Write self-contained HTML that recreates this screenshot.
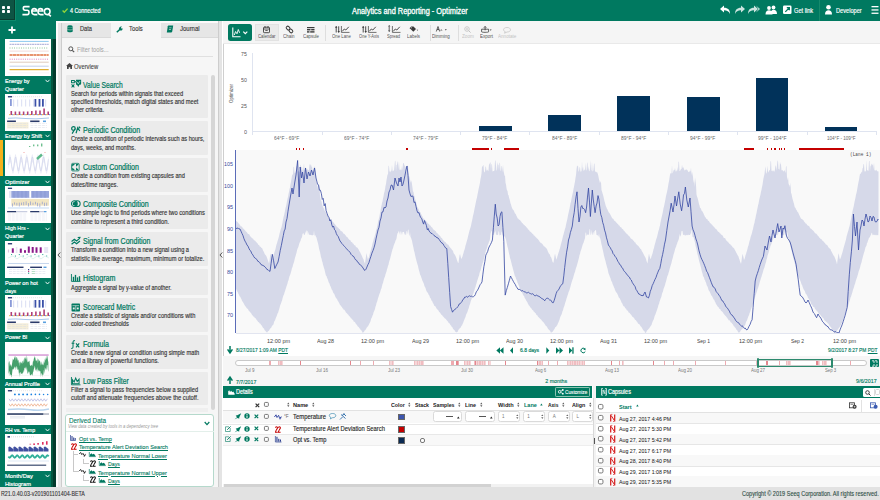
<!DOCTYPE html><html><head><meta charset="utf-8"><style>*{margin:0;padding:0;box-sizing:border-box}
html,body{width:880px;height:500px;overflow:hidden;background:#fff;font-family:"Liberation Sans",sans-serif}
body{position:relative}
.t{position:absolute;white-space:nowrap;line-height:1}
svg{position:absolute;overflow:visible}
div{position:absolute}
</style></head><body><div style="position:absolute;left:0.00px;top:0.00px;width:880.00px;height:21.00px;background:#007960"></div>
<div style="position:absolute;left:0.00px;top:0.00px;width:15.20px;height:19.80px;background:#0e5444;border:0.8px solid #0b3d30;border-left:0;border-top:0"></div>
<div style="position:absolute;left:15.20px;top:0.00px;width:0.80px;height:20.60px;background:#0d8a6c"></div>
<div style="position:absolute;left:0.00px;top:19.80px;width:16.00px;height:0.80px;background:#0d8a6c"></div>
<div style="position:absolute;left:1.90px;top:6.10px;width:3.40px;height:3.20px;background:#fff;border-radius:0.8px"></div>
<div style="position:absolute;left:6.60px;top:6.10px;width:3.40px;height:3.20px;background:#fff;border-radius:0.8px"></div>
<div style="position:absolute;left:1.90px;top:10.30px;width:3.40px;height:3.20px;background:#fff;border-radius:0.8px"></div>
<div style="position:absolute;left:6.60px;top:10.30px;width:3.40px;height:3.20px;background:#fff;border-radius:0.8px"></div>
<svg style="left:21.50px;top:5.00px;" width="30" height="12" viewBox="0 0 30 12"><g stroke="#fff" stroke-width="1.55" fill="none" stroke-linecap="square"><path d="M6.8 1.6 H2.6 C1.6 1.6 1.3 2.2 1.3 3.3 C1.3 4.5 1.8 5.2 3 5.2 H5.2 C6.5 5.2 7 6 7 7.2 C7 8.5 6.5 9.6 5.2 9.6 H1.2"/><path d="M9.8 6 H14.6 C14.6 4.3 13.6 3.6 12.2 3.6 C10.6 3.6 9.8 4.6 9.8 6.6 C9.8 8.7 10.8 9.6 12.4 9.6 H14.6"/><path d="M16 6 H20.8 C20.8 4.3 19.8 3.6 18.4 3.6 C16.8 3.6 16 4.6 16 6.6 C16 8.7 17 9.6 18.6 9.6 H20.8"/><path d="M25.2 3.6 C23.3 3.6 22.4 4.8 22.4 6.6 C22.4 8.5 23.3 9.6 25.2 9.6 C27.1 9.6 28 8.5 28 6.6 C28 4.8 27.1 3.6 25.2 3.6Z M26.5 9 L28.3 10.8"/></g></svg>
<svg style="left:61.80px;top:8.20px;" width="6" height="5" viewBox="0 0 6 5"><path d="M0.6 2.4 L2.3 4.2 L5.6 0.6" stroke="#8fd33a" stroke-width="1.4" fill="none"/></svg>
<div class="t" style="left:69.50px;top:7.68px;font-size:6.4px;color:#fff;-webkit-text-stroke:0.2px #fff;transform:scaleX(0.8414);transform-origin:0 0;">4 Connected</div>
<div class="t" style="left:352.40px;top:7.56px;font-size:8.2px;color:#fff;-webkit-text-stroke:0.3px #fff;transform:scaleX(0.8992);transform-origin:0 0;">Analytics and Reporting - Optimizer</div>
<svg style="left:718.00px;top:3.30px;" width="160" height="14" viewBox="0 0 160 14"><g fill="#fff">
<path d="M2 6 L6 2.5 L6 4.8 C10 4.8 12 7 12 11 C11 8.5 9 7.3 6 7.3 L6 9.5 Z"/>
<path d="M27 6 L23 2.5 L23 4.8 C19 4.8 17 7 17 11 C18 8.5 20 7.3 23 7.3 L23 9.5 Z" opacity="0.8"/>
<path d="M40 6 L36 2.5 L36 4.8 C32 4.8 30 7 30 11 C31 8.5 33 7.3 36 7.3 L36 9.5 Z M38 2.5 L42 6 L38 9.5 L40.5 6 Z" opacity="0.8"/>
<circle cx="51" cy="5" r="1.9"/><circle cx="55.5" cy="4.5" r="1.9"/><path d="M47.5 11.5 C47.5 8.5 49 7.3 51 7.3 C53 7.3 54.5 8.5 54.5 11.5 Z M52.5 11 C52.5 8 54 6.8 55.5 6.8 C57.5 6.8 59 8 59 11 Z"/>
<rect x="65" y="2.5" width="8.5" height="8.5" rx="1.3"/>
<circle cx="110.5" cy="4.3" r="2.3"/><path d="M107 11.5 C107 8.3 108.5 7.2 110.5 7.2 C112.5 7.2 114 8.3 114 11.5 Z"/>
<rect x="153.5" y="3" width="7" height="1.3"/><rect x="153.5" y="6.3" width="7" height="1.3"/><rect x="153.5" y="9.6" width="7" height="1.3"/>
</g><path d="M67.3 8.8 L71 5 M68.8 4.6 L71.4 4.6 L71.4 7.2" stroke="#007960" stroke-width="1.2" fill="none"/></svg>
<div class="t" style="left:793.80px;top:7.98px;font-size:6.4px;color:#fff;-webkit-text-stroke:0.15px #fff;transform:scaleX(0.8859);transform-origin:0 0;">Get link</div>
<div style="position:absolute;left:819.00px;top:0.00px;width:0.80px;height:21.00px;background:#168a6c"></div>
<div class="t" style="left:835.60px;top:7.98px;font-size:6.4px;color:#fff;-webkit-text-stroke:0.15px #fff;transform:scaleX(0.8819);transform-origin:0 0;">Developer</div>
<div style="position:absolute;left:0.00px;top:21.00px;width:56.00px;height:466.30px;background:#007960"></div>
<div style="position:absolute;left:51.30px;top:39.00px;width:1.80px;height:448.30px;background:#03563f"></div>
<div style="position:absolute;left:53.00px;top:39.00px;width:2.70px;height:448.30px;background:#033a2c"></div>
<svg style="left:8.00px;top:25.50px;" width="8" height="8" viewBox="0 0 8 8"><path d="M4 0.5V7.5M0.5 4H7.5" stroke="#fff" stroke-width="1.8"/></svg>
<div style="position:absolute;left:4.50px;top:38.80px;width:46.20px;height:37.00px;background:#fff"></div>
<svg style="left:4.5px;top:38.8px;overflow:hidden" width="46.2" height="37.0" viewBox="0 0 46.2 37.0"><path d="M4.6 2.4 H43.7" stroke="#5ab0e8" stroke-width="0.7"  fill="none"/><path d="M4.6 5.3 H43.7" stroke="#8b8fc8" stroke-width="0.8" stroke-dasharray="2 0.5" fill="none"/><path d="M4.6 9 H43.7" stroke="#3a9a4a" stroke-width="0.7" stroke-dasharray="0.8 1.5" fill="none"/><path d="M4.6 12.1 H43.7" stroke="#e8c0c0" stroke-width="0.6"  fill="none"/><path d="M4.6 16 H43.7" stroke="#e07040" stroke-width="1.3" stroke-dasharray="3 0.4" fill="none"/><path d="M4.6 20.2 H43.7" stroke="#d050a0" stroke-width="0.7" stroke-dasharray="1 1.2" fill="none"/><path d="M4.6 23.2 H43.7" stroke="#c8a890" stroke-width="0.6"  fill="none"/><path d="M4.6 27.2 H43.7" stroke="#9ab0d8" stroke-width="0.6"  fill="none"/><path d="M4.6 30.6 H43.7" stroke="#e0b030" stroke-width="1.2"  fill="none"/><path d="M3 33.9 H44" stroke="#e8e8e8" stroke-width="0.4"/></svg>
<div class="t" style="left:4.90px;top:77.82px;font-size:6px;color:#fff;-webkit-text-stroke:0.2px #fff;transform:scaleX(0.9069);transform-origin:0 0;">Energy by</div>
<div class="t" style="left:4.90px;top:85.82px;font-size:6px;color:#fff;-webkit-text-stroke:0.2px #fff;transform:scaleX(0.9290);transform-origin:0 0;">Quarter</div>
<svg style="left:45.30px;top:79.40px;" width="5" height="4" viewBox="0 0 5 4"><path d="M0.5 0.8 L2.5 3 L4.5 0.8" stroke="#fff" stroke-width="0.9" fill="none"/></svg>
<div style="position:absolute;left:4.50px;top:93.50px;width:46.20px;height:37.00px;background:#fff"></div>
<svg style="left:4.5px;top:93.5px;overflow:hidden" width="46.2" height="37.0" viewBox="0 0 46.2 37.0"><rect x="2.9" y="2.1" width="4.2" height="1.3" fill="#1f2f6a"/><path d="M8 2.7 H38" stroke="#ccc" stroke-width="0.5" stroke-dasharray="1 1"/><rect x="5" y="5" width="1.8" height="7" fill="#8a9ad8"/><rect x="29.5" y="5" width="1.8" height="7.6" fill="#3a50a8"/><rect x="33.6" y="5" width="1.8" height="7.6" fill="#3a50a8"/><rect x="37" y="5" width="1.8" height="7.6" fill="#3a50a8"/><rect x="8" y="5.5" width="1.2" height="7" fill="#dfe3f5"/><rect x="12" y="5.5" width="1.2" height="7" fill="#dfe3f5"/><rect x="16" y="5.5" width="1.2" height="7" fill="#dfe3f5"/><rect x="20" y="5.5" width="1.2" height="7" fill="#dfe3f5"/><rect x="24" y="5.5" width="1.2" height="7" fill="#dfe3f5"/><rect x="28" y="5.5" width="1.2" height="7" fill="#dfe3f5"/><rect x="40" y="5.5" width="1.2" height="7" fill="#dfe3f5"/><rect x="5.5" y="17" width="1.6" height="4" fill="#b0407a"/><rect x="4.3" y="20" width="1.2" height="1.2" fill="#f0b030"/><rect x="7.1" y="20" width="1.2" height="1.2" fill="#6aa0e8"/><rect x="9.6" y="17.5" width="1.6" height="3.5" fill="#b0407a"/><rect x="8.4" y="20" width="1.2" height="1.2" fill="#f0b030"/><rect x="11.2" y="20" width="1.2" height="1.2" fill="#6aa0e8"/><rect x="13.7" y="17.5" width="1.6" height="3.5" fill="#b0407a"/><rect x="12.5" y="20" width="1.2" height="1.2" fill="#f0b030"/><rect x="15.299999999999999" y="20" width="1.2" height="1.2" fill="#6aa0e8"/><rect x="17.799999999999997" y="17.5" width="1.6" height="3.5" fill="#b0407a"/><rect x="16.599999999999998" y="20" width="1.2" height="1.2" fill="#f0b030"/><rect x="19.4" y="20" width="1.2" height="1.2" fill="#6aa0e8"/><rect x="21.9" y="17.5" width="1.6" height="3.5" fill="#b0407a"/><rect x="20.7" y="20" width="1.2" height="1.2" fill="#f0b030"/><rect x="23.5" y="20" width="1.2" height="1.2" fill="#6aa0e8"/><rect x="26.0" y="17" width="1.6" height="4" fill="#b0407a"/><rect x="24.8" y="20" width="1.2" height="1.2" fill="#f0b030"/><rect x="27.6" y="20" width="1.2" height="1.2" fill="#6aa0e8"/><rect x="30.099999999999998" y="16.5" width="1.6" height="4.5" fill="#b0407a"/><rect x="28.9" y="20" width="1.2" height="1.2" fill="#f0b030"/><rect x="31.7" y="20" width="1.2" height="1.2" fill="#6aa0e8"/><rect x="34.199999999999996" y="16.5" width="1.6" height="4.5" fill="#b0407a"/><rect x="32.99999999999999" y="20" width="1.2" height="1.2" fill="#f0b030"/><rect x="35.8" y="20" width="1.2" height="1.2" fill="#6aa0e8"/><rect x="38.3" y="14.5" width="1.6" height="6.5" fill="#b0407a"/><rect x="37.099999999999994" y="20" width="1.2" height="1.2" fill="#f0b030"/><rect x="39.9" y="20" width="1.2" height="1.2" fill="#6aa0e8"/><rect x="42.4" y="17.5" width="1.6" height="3.5" fill="#b0407a"/><rect x="41.199999999999996" y="20" width="1.2" height="1.2" fill="#f0b030"/><rect x="44.0" y="20" width="1.2" height="1.2" fill="#6aa0e8"/><path d="M3 24.3 Q10 23.5 20 24.5 T44 24" stroke="#9ec0e8" stroke-width="0.9" fill="none"/><rect x="2.1" y="26.5" width="8.8" height="1.6" fill="#2a3a6a"/><rect x="25.2" y="26.5" width="9.3" height="1.6" fill="#2a3a6a"/><rect x="38" y="26.5" width="3" height="1.6" fill="#5aa0e0"/><rect x="2.1" y="28.3" width="21.4" height="6.2" fill="#f6efd8"/><path d="M25.5 29.5 H42 M25.5 31.5 H42 M25.5 33.5 H42 M3 29.5 H23 M3 31.5 H23 M3 33.5 H23" stroke="#d8dce6" stroke-width="0.5" stroke-dasharray="3 0.8"/></svg>
<div class="t" style="left:4.90px;top:132.52px;font-size:6px;color:#fff;-webkit-text-stroke:0.2px #fff;transform:scaleX(0.9118);transform-origin:0 0;">Energy by Shift</div>
<svg style="left:45.30px;top:134.10px;" width="5" height="4" viewBox="0 0 5 4"><path d="M0.5 0.8 L2.5 3 L4.5 0.8" stroke="#fff" stroke-width="0.9" fill="none"/></svg>
<div style="position:absolute;left:4.50px;top:139.90px;width:46.20px;height:36.60px;background:#fff"></div>
<svg style="left:4.5px;top:139.9px;overflow:hidden" width="46.2" height="36.6" viewBox="0 0 46.2 36.6"><path d="M3.5 21.0 L4.0 17.3 L4.5 14.7 L5.0 14.0 L5.5 15.5 L6.0 18.7 L6.5 22.6 L7.0 25.9 L7.5 27.8 L8.0 27.6 L8.5 25.4 L9.0 21.8 L9.5 18.0 L10.0 15.1 L10.5 14.0 L11.0 15.1 L11.5 18.0 L12.0 21.8 L12.5 25.4 L13.0 27.6 L13.5 27.8 L14.0 25.9 L14.5 22.6 L15.0 18.7 L15.5 15.5 L16.0 14.0 L16.5 14.7 L17.0 17.3 L17.5 21.0 L18.0 24.7 L18.5 27.3 L19.0 28.0 L19.5 26.5 L20.0 23.3 L20.5 19.4 L21.0 16.1 L21.5 14.2 L22.0 14.4 L22.5 16.6 L23.0 20.2 L23.5 24.0 L24.0 26.9 L24.5 28.0 L25.0 26.9 L25.5 24.0 L26.0 20.2 L26.5 16.6 L27.0 14.4 L27.5 14.2 L28.0 16.1 L28.5 19.4 L29.0 23.3 L29.5 26.5 L30.0 28.0 L30.5 27.3 L31.0 24.7 L31.5 21.0 L32.0 17.3 L32.5 14.7 L33.0 14.0 L33.5 15.5 L34.0 18.7 L34.5 22.6 L35.0 25.9 L35.5 27.8 L36.0 27.6 L36.5 25.4 L37.0 21.8 L37.5 18.0 L38.0 15.1 L38.5 14.0 L39.0 15.1 L39.5 18.0 L40.0 21.8 L40.5 25.4 L41.0 27.6 L41.5 27.8 L42.0 25.9 L42.5 22.6 L43.0 18.7 L43.5 15.5 L43.5 24.6 L43.0 27.8 L42.5 31.0 L42.0 33.3 L41.5 34.0 L41.0 32.8 L40.5 30.2 L40.0 26.9 L39.5 23.9 L39.0 22.2 L38.5 22.3 L38.0 24.1 L37.5 27.1 L37.0 30.4 L36.5 33.0 L36.0 34.0 L35.5 33.2 L35.0 30.8 L34.5 27.5 L34.0 24.4 L33.5 22.4 L33.0 22.1 L32.5 23.6 L32.0 26.5 L31.5 29.8 L31.0 32.6 L30.5 33.9 L30.0 33.5 L29.5 31.4 L29.0 28.2 L28.5 25.0 L28.0 22.7 L27.5 22.0 L27.0 23.2 L26.5 25.8 L26.0 29.1 L25.5 32.1 L25.0 33.8 L24.5 33.7 L24.0 31.9 L23.5 28.9 L23.0 25.6 L22.5 23.0 L22.0 22.0 L21.5 22.8 L21.0 25.2 L20.5 28.5 L20.0 31.6 L19.5 33.6 L19.0 33.9 L18.5 32.4 L18.0 29.5 L17.5 26.2 L17.0 23.4 L16.5 22.1 L16.0 22.5 L15.5 24.6 L15.0 27.8 L14.5 31.0 L14.0 33.3 L13.5 34.0 L13.0 32.8 L12.5 30.2 L12.0 26.9 L11.5 23.9 L11.0 22.2 L10.5 22.3 L10.0 24.1 L9.5 27.1 L9.0 30.4 L8.5 33.0 L8.0 34.0 L7.5 33.2 L7.0 30.8 L6.5 27.5 L6.0 24.4 L5.5 22.4 L5.0 22.1 L4.5 23.6 L4.0 26.5 L3.5 29.8 Z" fill="#e9ebf6"/><path d="M3.5 25.0 L4.0 21.2 L4.5 18.2 L5.0 17.0 L5.5 17.9 L6.0 20.7 L6.5 24.5 L7.0 28.2 L7.5 30.5 L8.0 30.9 L8.5 29.1 L9.0 25.8 L9.5 21.9 L10.0 18.7 L10.5 17.1 L11.0 17.6 L11.5 20.1 L12.0 23.7 L12.5 27.5 L13.0 30.2 L13.5 31.0 L14.0 29.6 L14.5 26.6 L15.0 22.7 L15.5 19.2 L16.0 17.2 L16.5 17.3 L17.0 19.4 L17.5 23.0 L18.0 26.8 L18.5 29.8 L19.0 31.0 L19.5 30.1 L20.0 27.3 L20.5 23.5 L21.0 19.8 L21.5 17.5 L22.0 17.1 L22.5 18.9 L23.0 22.2 L23.5 26.1 L24.0 29.3 L24.5 30.9 L25.0 30.4 L25.5 27.9 L26.0 24.3 L26.5 20.5 L27.0 17.8 L27.5 17.0 L28.0 18.4 L28.5 21.4 L29.0 25.3 L29.5 28.8 L30.0 30.8 L30.5 30.7 L31.0 28.6 L31.5 25.0 L32.0 21.2 L32.5 18.2 L33.0 17.0 L33.5 17.9 L34.0 20.7 L34.5 24.5 L35.0 28.2 L35.5 30.5 L36.0 30.9 L36.5 29.1 L37.0 25.8 L37.5 21.9 L38.0 18.7 L38.5 17.1 L39.0 17.6 L39.5 20.1 L40.0 23.7 L40.5 27.5 L41.0 30.2 L41.5 31.0 L42.0 29.6 L42.5 26.6 L43.0 22.7 L43.5 19.2" stroke="#c9cde8" stroke-width="0.5" fill="none"/><rect x="24" y="6" width="1.4" height="1" fill="#6fbf90"/><rect x="28" y="4.5" width="1.4" height="1.8" fill="#6fbf90"/><rect x="32" y="4.5" width="1.4" height="1.8" fill="#6fbf90"/><rect x="36" y="3.5" width="1.4" height="3" fill="#6fbf90"/><path d="M32 19 L37 14.5" stroke="#5cb88a" stroke-width="2.4"/><path d="M18 12.5 H20 M39 12.5 H41" stroke="#f3a0a0" stroke-width="0.5"/></svg>
<div style="position:absolute;left:0.00px;top:139.90px;width:2.90px;height:36.60px;background:#f5b21a"></div>
<div class="t" style="left:4.90px;top:178.52px;font-size:6px;color:#fff;-webkit-text-stroke:0.2px #fff;transform:scaleX(0.9544);transform-origin:0 0;">Optimizer</div>
<svg style="left:45.30px;top:180.10px;" width="5" height="4" viewBox="0 0 5 4"><path d="M0.5 0.8 L2.5 3 L4.5 0.8" stroke="#fff" stroke-width="0.9" fill="none"/></svg>
<div style="position:absolute;left:4.50px;top:186.10px;width:46.20px;height:36.90px;background:#fff"></div>
<svg style="left:4.5px;top:186.1px;overflow:hidden" width="46.2" height="36.9" viewBox="0 0 46.2 36.9"><rect x="2.9" y="1.7" width="4.2" height="1.2" fill="#1f2f6a"/><rect x="6.3" y="5" width="37.7" height="6.8" fill="#98a6dc"/><rect x="24.3" y="5" width="1.9" height="6.8" fill="#fff"/><rect x="6.3" y="13" width="37.7" height="6.7" fill="#f2e6c4"/><rect x="7.0" y="17.4" width="0.6" height="3.3" fill="#8090d0"/><rect x="9.3" y="16.4" width="0.6" height="2.2" fill="#8090d0"/><rect x="11.6" y="16.8" width="0.6" height="2.7" fill="#8090d0"/><rect x="13.9" y="16.6" width="0.6" height="3.9" fill="#8090d0"/><rect x="16.2" y="16.6" width="0.6" height="2.5" fill="#8090d0"/><rect x="18.5" y="16.1" width="0.6" height="3.2" fill="#8090d0"/><rect x="20.8" y="15.4" width="0.6" height="3.6" fill="#8090d0"/><rect x="23.1" y="17.1" width="0.6" height="3.4" fill="#8090d0"/><rect x="25.4" y="15.5" width="0.6" height="3.6" fill="#8090d0"/><rect x="27.7" y="16.7" width="0.6" height="2.2" fill="#8090d0"/><rect x="30.0" y="15.8" width="0.6" height="2.6" fill="#8090d0"/><rect x="32.3" y="16.8" width="0.6" height="3.5" fill="#8090d0"/><rect x="34.6" y="17.4" width="0.6" height="3.9" fill="#8090d0"/><rect x="36.9" y="15.7" width="0.6" height="2.6" fill="#8090d0"/><rect x="39.2" y="16.7" width="0.6" height="3.4" fill="#8090d0"/><rect x="41.5" y="16.6" width="0.6" height="3.2" fill="#8090d0"/><path d="M3 22 H44" stroke="#a8c8ec" stroke-width="0.7"/><rect x="2.1" y="25" width="9.2" height="1.3" fill="#2a3a6a"/><rect x="25.2" y="25" width="9.3" height="1.3" fill="#2a3a6a"/><rect x="39" y="25" width="2.5" height="1.3" fill="#5aa0e0"/><rect x="11.3" y="25" width="11" height="1.3" fill="#c8cde0"/><rect x="34.5" y="25" width="4.5" height="1.3" fill="#c8cde0"/><path d="M3 28 H22 M3 30 H22 M3 32 H22 M3 34 H22 M25.5 28 H42 M25.5 30 H42 M25.5 32 H42 M25.5 34 H42" stroke="#d6dbe8" stroke-width="0.5" stroke-dasharray="3 0.8"/><path d="M5 5 V12 M9 5 V12 M13 5 V12 M17 5 V12 M21 5 V12 M28 5 V12 M32 5 V12 M36 5 V12 M40 5 V12" stroke="#7888cc" stroke-width="0.4"/></svg>
<div class="t" style="left:4.90px;top:225.02px;font-size:6px;color:#fff;-webkit-text-stroke:0.2px #fff;transform:scaleX(0.8810);transform-origin:0 0;">High Hrs -</div>
<div class="t" style="left:4.90px;top:233.02px;font-size:6px;color:#fff;-webkit-text-stroke:0.2px #fff;transform:scaleX(0.9290);transform-origin:0 0;">Quarter</div>
<svg style="left:45.30px;top:226.60px;" width="5" height="4" viewBox="0 0 5 4"><path d="M0.5 0.8 L2.5 3 L4.5 0.8" stroke="#fff" stroke-width="0.9" fill="none"/></svg>
<div style="position:absolute;left:4.50px;top:241.00px;width:46.20px;height:36.80px;background:#fff"></div>
<svg style="left:4.5px;top:241px;overflow:hidden" width="46.2" height="36.8" viewBox="0 0 46.2 36.8"><rect x="2.9" y="2.1" width="4.2" height="1.3" fill="#1f2f6a"/><rect x="6.8" y="7.3" width="2" height="4.500000000000001" fill="#8a1a8a"/><rect x="14.8" y="7.6" width="2" height="4.200000000000001" fill="#8a1a8a"/><rect x="19" y="9.2" width="2" height="2.6000000000000014" fill="#8a1a8a"/><rect x="22.8" y="5.5" width="2" height="6.300000000000001" fill="#8a1a8a"/><rect x="26.7" y="6" width="2" height="5.800000000000001" fill="#8a1a8a"/><rect x="30.5" y="6.3" width="2" height="5.500000000000001" fill="#8a1a8a"/><rect x="34.7" y="6.3" width="2" height="5.500000000000001" fill="#8a1a8a"/><rect x="2.9" y="8.5" width="1.2" height="3" fill="#e0c8e0"/><rect x="10.8" y="6" width="1.6" height="6" fill="#e8e6f4"/><rect x="39.2" y="6" width="4" height="6" fill="#e8e6f4"/><rect x="6.0" y="13.0" width="1.1" height="1.1" fill="#40b0a0"/><rect x="9.9" y="14.5" width="1.1" height="1.1" fill="#40b0a0"/><rect x="13.8" y="13.0" width="1.1" height="1.1" fill="#40b0a0"/><rect x="17.7" y="14.5" width="1.1" height="1.1" fill="#40b0a0"/><rect x="21.6" y="13.0" width="1.1" height="1.1" fill="#40b0a0"/><rect x="25.5" y="14.5" width="1.1" height="1.1" fill="#40b0a0"/><rect x="29.4" y="13.0" width="1.1" height="1.1" fill="#40b0a0"/><rect x="33.3" y="14.5" width="1.1" height="1.1" fill="#40b0a0"/><rect x="37.2" y="13.0" width="1.1" height="1.1" fill="#40b0a0"/><rect x="41.1" y="14.5" width="1.1" height="1.1" fill="#40b0a0"/><path d="M3 17 L8 15 L12 18 L16 15 L20 18 L24 15 L28 18 L32 15 L36 18 L40 15 L44 17" stroke="#bfe6de" stroke-width="0.5" fill="none"/><path d="M3 22.5 H44" stroke="#b8cce8" stroke-width="0.8"/><rect x="2.1" y="25.6" width="16.4" height="1.4" fill="#2a3a6a"/><rect x="25.2" y="25.6" width="11.8" height="1.4" fill="#2a3a6a"/><rect x="38.5" y="25.6" width="3" height="1.4" fill="#5aa0e0"/><rect x="23" y="28" width="1.2" height="1.2" fill="#2a3a8a"/><rect x="23" y="29.8" width="1.2" height="1.2" fill="#c03080"/><rect x="23" y="31.6" width="1.2" height="1.2" fill="#30a090"/><path d="M4 28.5 H21 M4 30.5 H21 M4 32.5 H21 M26 28.5 H41 M26 30.5 H41 M26 32.5 H41" stroke="#d6dbe8" stroke-width="0.5" stroke-dasharray="3 0.8"/><path d="M27 28.5 H30 M27 30.5 H30 M27 32.5 H30" stroke="#9fd8b0" stroke-width="0.7"/></svg>
<div class="t" style="left:4.90px;top:279.82px;font-size:6px;color:#fff;-webkit-text-stroke:0.2px #fff;transform:scaleX(0.9304);transform-origin:0 0;">Power on hot</div>
<div class="t" style="left:4.90px;top:287.82px;font-size:6px;color:#fff;-webkit-text-stroke:0.2px #fff;transform:scaleX(0.8828);transform-origin:0 0;">days</div>
<svg style="left:45.30px;top:281.40px;" width="5" height="4" viewBox="0 0 5 4"><path d="M0.5 0.8 L2.5 3 L4.5 0.8" stroke="#fff" stroke-width="0.9" fill="none"/></svg>
<div style="position:absolute;left:4.50px;top:295.30px;width:46.20px;height:37.00px;background:#fff"></div>
<svg style="left:4.5px;top:295.3px;overflow:hidden" width="46.2" height="37.0" viewBox="0 0 46.2 37.0"><rect x="2.9" y="2.1" width="4.2" height="1.3" fill="#1f2f6a"/><path d="M8 2.7 H38" stroke="#ccc" stroke-width="0.5" stroke-dasharray="1 1"/><rect x="5" y="5" width="1.8" height="7" fill="#8a9ad8"/><rect x="29.5" y="5" width="1.8" height="7.6" fill="#3a50a8"/><rect x="33.6" y="5" width="1.8" height="7.6" fill="#3a50a8"/><rect x="37" y="5" width="1.8" height="7.6" fill="#3a50a8"/><rect x="8" y="5.5" width="1.2" height="7" fill="#dfe3f5"/><rect x="12" y="5.5" width="1.2" height="7" fill="#dfe3f5"/><rect x="16" y="5.5" width="1.2" height="7" fill="#dfe3f5"/><rect x="20" y="5.5" width="1.2" height="7" fill="#dfe3f5"/><rect x="24" y="5.5" width="1.2" height="7" fill="#dfe3f5"/><rect x="28" y="5.5" width="1.2" height="7" fill="#dfe3f5"/><rect x="40" y="5.5" width="1.2" height="7" fill="#dfe3f5"/><rect x="5.5" y="17" width="1.6" height="4" fill="#b0407a"/><rect x="4.3" y="20" width="1.2" height="1.2" fill="#f0b030"/><rect x="7.1" y="20" width="1.2" height="1.2" fill="#6aa0e8"/><rect x="9.6" y="17.5" width="1.6" height="3.5" fill="#b0407a"/><rect x="8.4" y="20" width="1.2" height="1.2" fill="#f0b030"/><rect x="11.2" y="20" width="1.2" height="1.2" fill="#6aa0e8"/><rect x="13.7" y="17.5" width="1.6" height="3.5" fill="#b0407a"/><rect x="12.5" y="20" width="1.2" height="1.2" fill="#f0b030"/><rect x="15.299999999999999" y="20" width="1.2" height="1.2" fill="#6aa0e8"/><rect x="17.799999999999997" y="17.5" width="1.6" height="3.5" fill="#b0407a"/><rect x="16.599999999999998" y="20" width="1.2" height="1.2" fill="#f0b030"/><rect x="19.4" y="20" width="1.2" height="1.2" fill="#6aa0e8"/><rect x="21.9" y="17.5" width="1.6" height="3.5" fill="#b0407a"/><rect x="20.7" y="20" width="1.2" height="1.2" fill="#f0b030"/><rect x="23.5" y="20" width="1.2" height="1.2" fill="#6aa0e8"/><rect x="26.0" y="17" width="1.6" height="4" fill="#b0407a"/><rect x="24.8" y="20" width="1.2" height="1.2" fill="#f0b030"/><rect x="27.6" y="20" width="1.2" height="1.2" fill="#6aa0e8"/><rect x="30.099999999999998" y="16.5" width="1.6" height="4.5" fill="#b0407a"/><rect x="28.9" y="20" width="1.2" height="1.2" fill="#f0b030"/><rect x="31.7" y="20" width="1.2" height="1.2" fill="#6aa0e8"/><rect x="34.199999999999996" y="16.5" width="1.6" height="4.5" fill="#b0407a"/><rect x="32.99999999999999" y="20" width="1.2" height="1.2" fill="#f0b030"/><rect x="35.8" y="20" width="1.2" height="1.2" fill="#6aa0e8"/><rect x="38.3" y="14.5" width="1.6" height="6.5" fill="#b0407a"/><rect x="37.099999999999994" y="20" width="1.2" height="1.2" fill="#f0b030"/><rect x="39.9" y="20" width="1.2" height="1.2" fill="#6aa0e8"/><rect x="42.4" y="17.5" width="1.6" height="3.5" fill="#b0407a"/><rect x="41.199999999999996" y="20" width="1.2" height="1.2" fill="#f0b030"/><rect x="44.0" y="20" width="1.2" height="1.2" fill="#6aa0e8"/><path d="M3 24.3 Q10 23.5 20 24.5 T44 24" stroke="#9ec0e8" stroke-width="0.9" fill="none"/><rect x="2.1" y="26.5" width="8.8" height="1.6" fill="#2a3a6a"/><rect x="25.2" y="26.5" width="9.3" height="1.6" fill="#2a3a6a"/><rect x="38" y="26.5" width="3" height="1.6" fill="#5aa0e0"/><rect x="2.1" y="28.3" width="21.4" height="6.2" fill="#f6efd8"/><path d="M25.5 29.5 H42 M25.5 31.5 H42 M25.5 33.5 H42 M3 29.5 H23 M3 31.5 H23 M3 33.5 H23" stroke="#d8dce6" stroke-width="0.5" stroke-dasharray="3 0.8"/></svg>
<div class="t" style="left:4.90px;top:334.32px;font-size:6px;color:#fff;-webkit-text-stroke:0.2px #fff;transform:scaleX(0.9202);transform-origin:0 0;">Power BI</div>
<svg style="left:45.30px;top:335.90px;" width="5" height="4" viewBox="0 0 5 4"><path d="M0.5 0.8 L2.5 3 L4.5 0.8" stroke="#fff" stroke-width="0.9" fill="none"/></svg>
<div style="position:absolute;left:4.50px;top:341.90px;width:46.20px;height:36.70px;background:#fff"></div>
<svg style="left:4.5px;top:341.9px;overflow:hidden" width="46.2" height="36.7" viewBox="0 0 46.2 36.7"><rect x="3.4" y="12.2" width="40.3" height="1.7" fill="#dca6dc"/><path d="M3.4 21.4 L3.9 19.4 L4.4 19.3 L4.9 24.4 L5.4 23.0 L5.9 22.0 L6.4 25.2 L6.9 22.7 L7.4 19.5 L7.9 16.6 L8.4 18.3 L8.9 16.9 L9.4 14.0 L9.9 16.7 L10.4 13.6 L10.9 18.8 L11.4 15.6 L11.9 15.1 L12.4 16.9 L12.9 19.1 L13.4 17.5 L13.9 21.5 L14.4 19.5 L14.9 24.3 L15.4 19.3 L15.9 20.7 L16.4 21.6 L16.9 19.8 L17.4 18.5 L17.9 22.3 L18.4 16.8 L18.9 21.6 L19.4 16.7 L19.9 15.2 L20.4 17.4 L20.9 14.4 L21.4 19.1 L21.9 12.8 L22.4 19.2 L22.9 20.4 L23.4 19.6 L23.9 19.5 L24.4 18.6 L24.9 22.9 L25.4 24.3 L25.9 23.3 L26.4 23.6 L26.9 22.5 L27.4 24.6 L27.9 19.6 L28.4 19.3 L28.9 16.4 L29.4 15.6 L29.9 14.0 L30.4 16.6 L30.9 19.0 L31.4 18.1 L31.9 19.6 L32.4 15.7 L32.9 21.6 L33.4 18.2 L33.9 16.8 L34.4 19.6 L34.9 18.6 L35.4 20.4 L35.9 23.4 L36.4 22.1 L36.9 19.3 L37.4 23.3 L37.9 21.9 L38.4 23.4 L38.9 19.0 L39.4 21.5 L39.9 16.6 L40.4 18.8 L40.9 15.2 L41.4 17.4 L41.9 13.5 L42.4 14.2 L42.9 17.7 L43.4 20.6 L43.4 29.9 L42.9 27.7 L42.4 23.0 L41.9 23.1 L41.4 28.4 L40.9 25.8 L40.4 28.3 L39.9 25.1 L39.4 32.1 L38.9 27.5 L38.4 33.1 L37.9 32.3 L37.4 35.0 L36.9 31.0 L36.4 31.7 L35.9 34.9 L35.4 29.4 L34.9 28.4 L34.4 29.7 L33.9 27.6 L33.4 28.8 L32.9 30.1 L32.4 25.0 L31.9 29.7 L31.4 26.4 L30.9 28.7 L30.4 27.5 L29.9 23.5 L29.4 25.8 L28.9 27.1 L28.4 29.4 L27.9 30.8 L27.4 34.2 L26.9 32.0 L26.4 32.6 L25.9 33.4 L25.4 33.2 L24.9 32.9 L24.4 30.1 L23.9 29.3 L23.4 30.3 L22.9 32.0 L22.4 30.7 L21.9 24.2 L21.4 29.0 L20.9 24.4 L20.4 26.9 L19.9 25.4 L19.4 26.2 L18.9 30.7 L18.4 27.7 L17.9 32.8 L17.4 30.4 L16.9 31.4 L16.4 32.2 L15.9 30.6 L15.4 29.9 L14.9 35.0 L14.4 30.3 L13.9 31.7 L13.4 27.1 L12.9 28.3 L12.4 27.1 L11.9 23.7 L11.4 25.3 L10.9 28.2 L10.4 24.5 L9.9 26.6 L9.4 24.2 L8.9 26.2 L8.4 27.7 L7.9 26.7 L7.4 28.2 L6.9 33.6 L6.4 35.5 L5.9 31.7 L5.4 32.9 L4.9 33.9 L4.4 28.7 L3.9 30.5 L3.4 32.0 Z" fill="#46a06c"/><path d="M3.4 15 V33 M3.4 33.5 H44" stroke="#e4ece8" stroke-width="0.4" fill="none"/></svg>
<div class="t" style="left:4.90px;top:380.62px;font-size:6px;color:#fff;-webkit-text-stroke:0.2px #fff;transform:scaleX(0.9368);transform-origin:0 0;">Annual Profile</div>
<svg style="left:45.30px;top:382.20px;" width="5" height="4" viewBox="0 0 5 4"><path d="M0.5 0.8 L2.5 3 L4.5 0.8" stroke="#fff" stroke-width="0.9" fill="none"/></svg>
<div style="position:absolute;left:4.50px;top:388.00px;width:46.20px;height:36.60px;background:#fff"></div>
<svg style="left:4.5px;top:388px;overflow:hidden" width="46.2" height="36.6" viewBox="0 0 46.2 36.6"><rect x="2.9" y="2.1" width="4.2" height="1.3" fill="#1f2f6a"/><path d="M8 2.7 H38" stroke="#ccc" stroke-width="0.5" stroke-dasharray="1 1"/><circle cx="9.9" cy="6.4" r="0.95" fill="#1a80e0"/><circle cx="14.0" cy="6.4" r="0.95" fill="#1a80e0"/><circle cx="18.1" cy="6.4" r="0.95" fill="#1a80e0"/><circle cx="22.2" cy="6.4" r="0.9" fill="#1a80e0"/><circle cx="26.3" cy="6.4" r="0.85" fill="#1a80e0"/><circle cx="30.4" cy="6.4" r="0.8" fill="#1a80e0"/><circle cx="34.5" cy="6.4" r="0.8" fill="#1a80e0"/><circle cx="38.6" cy="6.4" r="0.75" fill="#1a80e0"/><circle cx="42.7" cy="6.4" r="0.75" fill="#1a80e0"/><path d="M4.0 10.8 L5.6 13.2 L7.2 10.8 L8.8 13.2 L10.4 10.8 L12.0 13.2 L13.6 10.8 L15.2 13.2 L16.8 10.8 L18.4 13.2 L20.0 10.8 L21.6 13.2 L23.2 10.8 L24.8 13.2 L26.4 10.8 L28.0 13.2 L29.6 10.8 L31.2 13.2 L32.8 10.8 L34.4 13.2 L36.0 10.8 L37.6 13.2 L39.2 10.8 L40.8 13.2 L42.4 10.8" stroke="#8c90d0" stroke-width="0.5" fill="none"/><path d="M4.0 15.8 L5.6 18.2 L7.2 15.8 L8.8 18.2 L10.4 15.8 L12.0 18.2 L13.6 15.8 L15.2 18.2 L16.8 15.8 L18.4 18.2 L20.0 15.8 L21.6 18.2 L23.2 15.8 L24.8 18.2 L26.4 15.8 L28.0 18.2 L29.6 15.8 L31.2 18.2 L32.8 15.8 L34.4 18.2 L36.0 15.8 L37.6 18.2 L39.2 15.8 L40.8 18.2 L42.4 15.8" stroke="#e89060" stroke-width="0.6" fill="none"/><path d="M3 21.5 Q15 20.5 25 21.8 T44 21" stroke="#b8d4ee" stroke-width="1.4" fill="none"/><rect x="2.1" y="25.2" width="36.5" height="1.7" fill="#3a4a6e"/><rect x="38.6" y="25.2" width="5.4" height="1.7" fill="#b8bcc8"/><path d="M5 28.7 H20 M5 30 H20" stroke="#c8d0dc" stroke-width="0.5"/></svg>
<div class="t" style="left:4.90px;top:426.62px;font-size:6px;color:#fff;-webkit-text-stroke:0.2px #fff;transform:scaleX(0.8792);transform-origin:0 0;">RH vs. Temp</div>
<svg style="left:45.30px;top:428.20px;" width="5" height="4" viewBox="0 0 5 4"><path d="M0.5 0.8 L2.5 3 L4.5 0.8" stroke="#fff" stroke-width="0.9" fill="none"/></svg>
<div style="position:absolute;left:4.50px;top:434.20px;width:46.20px;height:36.50px;background:#fff"></div>
<svg style="left:4.5px;top:434.2px;overflow:hidden" width="46.2" height="36.5" viewBox="0 0 46.2 36.5"><rect x="2.5" y="2.1" width="2.5" height="1.5" fill="#1f2f6a"/><path d="M6 2.8 H30" stroke="#bbb" stroke-width="0.5" stroke-dasharray="1 1"/><rect x="24.5" y="9.8" width="1.6" height="0.6999999999999993" fill="#e03060"/><rect x="28.3" y="9.4" width="1.6" height="1.5999999999999996" fill="#e03060"/><rect x="32.3" y="9" width="1.6" height="1.6999999999999993" fill="#e03060"/><rect x="37" y="8" width="1.6" height="2.6999999999999993" fill="#e03060"/><rect x="41" y="7.2" width="1.6" height="3.499999999999999" fill="#e03060"/><path d="M3.4 17.6 L3.4 13 L4.9 12.6 L8.2 15 L8.2 17.6 Z M8.4 17.6 L8.4 13 L9.9 12.6 L13.2 15 L13.2 17.6 Z M13.5 17.6 L13.5 13 L15.0 12.6 L18.3 15 L18.3 17.6 Z M18.5 17.6 L18.5 13 L20.0 12.6 L23.3 15 L23.3 17.6 Z M23.6 17.6 L23.6 13 L25.1 12.6 L28.4 15 L28.4 17.6 Z M28.6 17.6 L28.6 13 L30.1 12.6 L33.4 15 L33.4 17.6 Z M33.7 17.6 L33.7 13 L35.2 12.6 L38.5 15 L38.5 17.6 Z M38.8 17.6 L38.8 13 L40.2 12.6 L43.5 15 L43.5 17.6 Z" fill="#4050a0"/><path d="M3.4 22.5 L4.0 23.3 L4.7 23.7 L5.3 23.4 L5.9 22.5 L6.5 21.7 L7.2 21.3 L7.8 21.6 L8.4 22.5 L9.1 23.3 L9.7 23.7 L10.3 23.4 L11.0 22.5 L11.6 21.7 L12.2 21.3 L12.8 21.6 L13.5 22.5 L14.1 23.3 L14.7 23.7 L15.4 23.4 L16.0 22.5 L16.6 21.7 L17.3 21.3 L17.9 21.6 L18.5 22.5 L19.1 23.3 L19.8 23.7 L20.4 23.4 L21.0 22.6 L21.7 21.7 L22.3 21.3 L22.9 21.6 L23.6 22.4 L24.2 23.3 L24.8 23.7 L25.4 23.4 L26.1 22.6 L26.7 21.7 L27.3 21.3 L28.0 21.6 L28.6 22.4 L29.2 23.3 L29.9 23.7 L30.5 23.4 L31.1 22.6 L31.8 21.7 L32.4 21.3 L33.0 21.6 L33.6 22.4 L34.3 23.3 L34.9 23.7 L35.5 23.4 L36.2 22.6 L36.8 21.7 L37.4 21.3 L38.0 21.6 L38.7 22.4 L39.3 23.3 L39.9 23.7 L40.6 23.4 L41.2 22.6 L41.8 21.7 L42.5 21.3 L43.1 21.6 L43.7 22.4" stroke="#30b09a" stroke-width="1.8" fill="none"/><path d="M3 27 H44" stroke="#c8dcee" stroke-width="0.6"/><rect x="2.1" y="30.6" width="39.1" height="1.2" fill="#3a4a6e"/></svg>
<div class="t" style="left:4.90px;top:472.72px;font-size:6px;color:#fff;-webkit-text-stroke:0.2px #fff;transform:scaleX(0.9616);transform-origin:0 0;">Month/Day</div>
<div class="t" style="left:4.90px;top:480.72px;font-size:6px;color:#fff;-webkit-text-stroke:0.2px #fff;transform:scaleX(0.9472);transform-origin:0 0;">Histogram</div>
<svg style="left:45.30px;top:474.30px;" width="5" height="4" viewBox="0 0 5 4"><path d="M0.5 0.8 L2.5 3 L4.5 0.8" stroke="#fff" stroke-width="0.9" fill="none"/></svg>
<div style="position:absolute;left:55.70px;top:21.00px;width:162.30px;height:466.30px;background:#f6f6f6"></div>
<div style="position:absolute;left:56.00px;top:21.00px;width:1.80px;height:466.30px;background:#fdfcfc"></div>
<div style="position:absolute;left:57.80px;top:21.00px;width:3.60px;height:466.30px;background:#e8e8e8"></div>
<div style="position:absolute;left:61.30px;top:21.00px;width:0.80px;height:466.30px;background:#cdcdcd"></div>
<div style="position:absolute;left:62.00px;top:22.80px;width:49.00px;height:14.00px;background:#e6e6e6"></div>
<div style="position:absolute;left:161.00px;top:22.80px;width:57.00px;height:14.00px;background:#e6e6e6"></div>
<div style="position:absolute;left:56.00px;top:21.00px;width:162.00px;height:1.80px;background:#fcfafa"></div>
<div style="position:absolute;left:62.00px;top:36.50px;width:49.00px;height:0.50px;background:#dadada"></div>
<div style="position:absolute;left:161.00px;top:36.50px;width:57.00px;height:0.50px;background:#dadada"></div>
<div class="t" style="left:79.80px;top:26.30px;font-size:6.5px;color:#333;-webkit-text-stroke:0.12px #333;transform:scaleX(0.8737);transform-origin:0 0;">Data</div>
<div class="t" style="left:129.00px;top:26.30px;font-size:6.5px;color:#333;-webkit-text-stroke:0.12px #333;transform:scaleX(0.8955);transform-origin:0 0;">Tools</div>
<div class="t" style="left:179.80px;top:26.30px;font-size:6.5px;color:#333;-webkit-text-stroke:0.12px #333;transform:scaleX(0.9190);transform-origin:0 0;">Journal</div>
<svg style="left:67.20px;top:25.30px;" width="6" height="8" viewBox="0 0 6 8"><ellipse cx="3" cy="1.5" rx="2.7" ry="1.2" fill="#007960"/><path d="M0.3 2 V6.6 C0.3 7.6 5.7 7.6 5.7 6.6 V2 C5.7 3 0.3 3 0.3 2Z" fill="#007960"/><path d="M0.3 4.2 C1.5 5.2 4.5 5.2 5.7 4.2" stroke="#e6e6e6" stroke-width="0.5" fill="none"/></svg>
<svg style="left:116.00px;top:25.50px;" width="7" height="7" viewBox="0 0 7 7"><path d="M0.8 6.3 L4 3.2" stroke="#007960" stroke-width="1.5"/><path d="M3 3.5 C2.5 1.5 4 0 6 0.5 L4.8 1.7 L5.3 2.6 L6.5 2.2 C6.8 4 5.5 5 3.8 4.3Z" fill="#007960"/></svg>
<svg style="left:166.00px;top:25.00px;" width="8" height="8" viewBox="0 0 8 8"><path d="M2.3 0.5 H7.2 L6.2 6.5 C6 7.3 5.5 7.6 4.8 7.6 H0.8 L1.8 1.2 Z" fill="#007960"/><path d="M3.2 2.8 H5.5 M2.9 4.5 H5" stroke="#e6e6e6" stroke-width="0.6"/></svg>
<svg style="left:67.80px;top:46.30px;" width="7" height="7" viewBox="0 0 7 7"><circle cx="2.8" cy="2.8" r="2" stroke="#555" stroke-width="1" fill="none"/><path d="M4.3 4.3 L6.2 6.2" stroke="#555" stroke-width="1.2"/></svg>
<div class="t" style="left:77.40px;top:47.07px;font-size:6.3px;color:#a0a0a0;transform:scaleX(0.9214);transform-origin:0 0;">Filter tools...</div>
<div style="position:absolute;left:67.00px;top:56.00px;width:146.00px;height:0.70px;background:#e0e0e0"></div>
<svg style="left:65.80px;top:62.80px;" width="7" height="6" viewBox="0 0 7 6"><path d="M0 3 L3.5 0 L7 3 L6 3 V6 H4.3 V4.2 H2.7 V6 H1 V3 Z" fill="#444"/></svg>
<div class="t" style="left:73.70px;top:63.81px;font-size:6.6px;color:#444;-webkit-text-stroke:0.1px #444;transform:scaleX(0.8805);transform-origin:0 0;">Overview</div>
<div style="position:absolute;left:210.80px;top:74.70px;width:4.00px;height:335.50px;background:#d6d6d6;border-radius:2px"></div>
<div style="position:absolute;left:65.70px;top:75.40px;width:142.80px;height:42.90px;background:#ebebeb;border-radius:1px"></div>
<div class="t" style="left:82.80px;top:80.69px;font-size:8.4px;color:#007960;-webkit-text-stroke:0.22px #007960;transform:scaleX(0.7992);transform-origin:0 0;">Value Search</div>
<svg style="left:70.60px;top:80.30px;transform:scale(1.12);transform-origin:0 0" width="9" height="7" viewBox="0 0 9 7"><path d="M0.5 0.5 H3 V2.5 H0.5Z M0.5 4 L3 6.5 M3 4 L0.5 6.5" stroke="#007960" stroke-width="0.9" fill="none"/><path d="M4 1 L6.5 5 L8.5 0.5 M4.5 0.3 H8.5 V3.5" stroke="#007960" stroke-width="1.1" fill="none"/><rect x="4.5" y="0.2" width="4.3" height="4" fill="#007960"/><path d="M5 1.3 L6.5 3.3 L8 1" stroke="#e9e9e9" stroke-width="0.7" fill="none"/></svg>
<div class="t" style="left:70.90px;top:89.87px;font-size:7px;color:#333;-webkit-text-stroke:0.15px #333;transform:scaleX(0.8069);transform-origin:0 0;">Search for periods within signals that exceed</div>
<div class="t" style="left:70.90px;top:97.97px;font-size:7px;color:#333;-webkit-text-stroke:0.15px #333;transform:scaleX(0.8124);transform-origin:0 0;">specified thresholds, match digital states and meet</div>
<div class="t" style="left:70.90px;top:106.07px;font-size:7px;color:#333;-webkit-text-stroke:0.15px #333;transform:scaleX(0.8101);transform-origin:0 0;">other criteria.</div>
<div style="position:absolute;left:65.70px;top:121.00px;width:142.80px;height:33.80px;background:#ebebeb;border-radius:1px"></div>
<div class="t" style="left:82.80px;top:126.29px;font-size:8.4px;color:#007960;-webkit-text-stroke:0.22px #007960;transform:scaleX(0.8414);transform-origin:0 0;">Periodic Condition</div>
<svg style="left:70.60px;top:125.90px;transform:scale(1.12);transform-origin:0 0" width="9" height="7" viewBox="0 0 9 7"><circle cx="2.2" cy="2.2" r="1.6" stroke="#007960" stroke-width="1.1" fill="none"/><path d="M3.6 2.5 L1 6.8 M4.5 6.5 L6 1.5 L7.8 4.5 M7 0.5 L8.3 2" stroke="#007960" stroke-width="1.1" fill="none"/></svg>
<div class="t" style="left:70.90px;top:135.47px;font-size:7px;color:#333;-webkit-text-stroke:0.15px #333;transform:scaleX(0.8004);transform-origin:0 0;">Create a condition of periodic intervals such as hours,</div>
<div class="t" style="left:70.90px;top:143.57px;font-size:7px;color:#333;-webkit-text-stroke:0.15px #333;transform:scaleX(0.7994);transform-origin:0 0;">days, weeks, and months.</div>
<div style="position:absolute;left:65.70px;top:158.00px;width:142.80px;height:34.30px;background:#ebebeb;border-radius:1px"></div>
<div class="t" style="left:82.80px;top:163.29px;font-size:8.4px;color:#007960;-webkit-text-stroke:0.22px #007960;transform:scaleX(0.8396);transform-origin:0 0;">Custom Condition</div>
<svg style="left:70.60px;top:162.90px;transform:scale(1.12);transform-origin:0 0" width="8" height="8" viewBox="0 0 8 8"><path d="M1 0.8 H3.3 C3.3 2.2 1 2.2 1 3.6 C1 5 3.3 5 3.3 6.5 H1Z M4.5 0.8 H6.8 C6.8 2.2 4.5 2.2 4.5 3.6 C4.5 5 6.8 5 6.8 6.5 H4.5Z" fill="#007960"/><rect x="0.5" y="0.3" width="6.8" height="6.8" fill="none" stroke="#007960" stroke-width="0.7" rx="1"/></svg>
<div class="t" style="left:70.90px;top:172.47px;font-size:7px;color:#333;-webkit-text-stroke:0.15px #333;transform:scaleX(0.8034);transform-origin:0 0;">Create a condition from existing capsules and</div>
<div class="t" style="left:70.90px;top:180.57px;font-size:7px;color:#333;-webkit-text-stroke:0.15px #333;transform:scaleX(0.8161);transform-origin:0 0;">dates/time ranges.</div>
<div style="position:absolute;left:65.70px;top:195.00px;width:142.80px;height:34.00px;background:#ebebeb;border-radius:1px"></div>
<div class="t" style="left:82.80px;top:200.29px;font-size:8.4px;color:#007960;-webkit-text-stroke:0.22px #007960;transform:scaleX(0.8450);transform-origin:0 0;">Composite Condition</div>
<svg style="left:70.60px;top:199.90px;transform:scale(1.12);transform-origin:0 0" width="9" height="7" viewBox="0 0 9 7"><circle cx="3" cy="3.3" r="2.6" fill="none" stroke="#007960" stroke-width="0.9"/><circle cx="5.6" cy="3.3" r="2.6" fill="none" stroke="#007960" stroke-width="0.9"/><path d="M4.3 1.1 A2.6 2.6 0 0 1 4.3 5.5 A2.6 2.6 0 0 1 4.3 1.1Z" fill="#007960"/><path d="M1.5 3.3 A1.5 1.5 0 0 1 3 1.8 V4.8 A1.5 1.5 0 0 1 1.5 3.3Z" fill="#007960"/></svg>
<div class="t" style="left:70.90px;top:209.47px;font-size:7px;color:#333;-webkit-text-stroke:0.15px #333;transform:scaleX(0.8155);transform-origin:0 0;">Use simple logic to find periods where two conditions</div>
<div class="t" style="left:70.90px;top:217.57px;font-size:7px;color:#333;-webkit-text-stroke:0.15px #333;transform:scaleX(0.8238);transform-origin:0 0;">combine to represent a third condition.</div>
<div style="position:absolute;left:65.70px;top:232.00px;width:142.80px;height:34.30px;background:#ebebeb;border-radius:1px"></div>
<div class="t" style="left:82.80px;top:237.29px;font-size:8.4px;color:#007960;-webkit-text-stroke:0.22px #007960;transform:scaleX(0.8417);transform-origin:0 0;">Signal from Condition</div>
<svg style="left:70.60px;top:236.90px;transform:scale(1.12);transform-origin:0 0" width="9" height="7" viewBox="0 0 9 7"><path d="M0.5 4 L3 2 L5 3.5 L8 1 M0.5 6.5 L3 4.5 L5 6 L8 3.5" stroke="#007960" stroke-width="1.1" fill="none"/><path d="M6 0.5 L8.5 0.3" stroke="#007960" stroke-width="1"/></svg>
<div class="t" style="left:70.90px;top:246.47px;font-size:7px;color:#333;-webkit-text-stroke:0.15px #333;transform:scaleX(0.8080);transform-origin:0 0;">Transform a condition into a new signal using a</div>
<div class="t" style="left:70.90px;top:254.57px;font-size:7px;color:#333;-webkit-text-stroke:0.15px #333;transform:scaleX(0.8139);transform-origin:0 0;">statistic like average, maximum, minimum or totalize.</div>
<div style="position:absolute;left:65.70px;top:269.20px;width:142.80px;height:25.40px;background:#ebebeb;border-radius:1px"></div>
<div class="t" style="left:82.80px;top:274.49px;font-size:8.4px;color:#007960;-webkit-text-stroke:0.22px #007960;transform:scaleX(0.8488);transform-origin:0 0;">Histogram</div>
<svg style="left:70.60px;top:274.10px;transform:scale(1.12);transform-origin:0 0" width="9" height="7" viewBox="0 0 9 7"><path d="M0.4 0 V6.6 H8.5" stroke="#007960" stroke-width="0.8" fill="none"/><rect x="1.6" y="2.5" width="1.2" height="4" fill="#007960"/><rect x="3.4" y="0.8" width="1.2" height="5.7" fill="#007960"/><rect x="5.2" y="3" width="1.2" height="3.5" fill="#007960"/><rect x="7" y="2" width="1.2" height="4.5" fill="#007960"/></svg>
<div class="t" style="left:70.90px;top:283.67px;font-size:7px;color:#333;-webkit-text-stroke:0.15px #333;transform:scaleX(0.7897);transform-origin:0 0;">Aggregate a signal by y-value of another.</div>
<div style="position:absolute;left:65.70px;top:297.70px;width:142.80px;height:34.10px;background:#ebebeb;border-radius:1px"></div>
<div class="t" style="left:82.80px;top:302.99px;font-size:8.4px;color:#007960;-webkit-text-stroke:0.22px #007960;transform:scaleX(0.8231);transform-origin:0 0;">Scorecard Metric</div>
<svg style="left:70.60px;top:302.60px;transform:scale(1.12);transform-origin:0 0" width="9" height="8" viewBox="0 0 9 8"><rect x="0.5" y="0.5" width="7.5" height="7" fill="#007960" rx="0.6"/><path d="M1.3 2.4 H7.2 M4.25 2.4 V6.8" stroke="#e9e9e9" stroke-width="0.6"/><rect x="1.6" y="4" width="1.7" height="1.7" fill="#e9e9e9"/><rect x="5.2" y="4" width="1.7" height="1.7" fill="#e9e9e9"/></svg>
<div class="t" style="left:70.90px;top:312.17px;font-size:7px;color:#333;-webkit-text-stroke:0.15px #333;transform:scaleX(0.8108);transform-origin:0 0;">Create a statistic of signals and/or conditions with</div>
<div class="t" style="left:70.90px;top:320.27px;font-size:7px;color:#333;-webkit-text-stroke:0.15px #333;transform:scaleX(0.8175);transform-origin:0 0;">color-coded thresholds</div>
<div style="position:absolute;left:65.70px;top:334.70px;width:142.80px;height:33.90px;background:#ebebeb;border-radius:1px"></div>
<div class="t" style="left:82.80px;top:339.99px;font-size:8.4px;color:#007960;-webkit-text-stroke:0.22px #007960;transform:scaleX(0.8464);transform-origin:0 0;">Formula</div>
<svg style="left:70.60px;top:339.60px;transform:scale(1.12);transform-origin:0 0" width="9" height="8" viewBox="0 0 9 8"><path d="M3.5 0.8 C2.5 0.2 1.8 0.8 1.8 2 V6 C1.8 7.3 1 7.8 0.2 7.3 M0.5 3 H3" stroke="#007960" stroke-width="0.9" fill="none"/><path d="M4.5 3 L7.3 6.5 M7.3 3 L4.5 6.5" stroke="#007960" stroke-width="1"/></svg>
<div class="t" style="left:70.90px;top:349.17px;font-size:7px;color:#333;-webkit-text-stroke:0.15px #333;transform:scaleX(0.8095);transform-origin:0 0;">Create a new signal or condition using simple math</div>
<div class="t" style="left:70.90px;top:357.27px;font-size:7px;color:#333;-webkit-text-stroke:0.15px #333;transform:scaleX(0.8244);transform-origin:0 0;">and a library of powerful functions.</div>
<div style="position:absolute;left:65.70px;top:371.70px;width:142.80px;height:33.80px;background:#ebebeb;border-radius:1px"></div>
<div class="t" style="left:82.80px;top:376.99px;font-size:8.4px;color:#007960;-webkit-text-stroke:0.22px #007960;transform:scaleX(0.7965);transform-origin:0 0;">Low Pass Filter</div>
<svg style="left:70.60px;top:376.60px;transform:scale(1.12);transform-origin:0 0" width="9" height="8" viewBox="0 0 9 8"><path d="M0.4 0 V7 H8.5" stroke="#007960" stroke-width="0.8" fill="none"/><path d="M1.3 6 V2.5 L2.8 4.5 L4.2 1 L5.5 4 L7.2 2 V6Z" fill="none" stroke="#007960" stroke-width="0.9"/></svg>
<div class="t" style="left:70.90px;top:386.17px;font-size:7px;color:#333;-webkit-text-stroke:0.15px #333;transform:scaleX(0.8025);transform-origin:0 0;">Filter a signal to pass frequencies below a supplied</div>
<div class="t" style="left:70.90px;top:394.27px;font-size:7px;color:#333;-webkit-text-stroke:0.15px #333;transform:scaleX(0.8314);transform-origin:0 0;">cutoff and attenuate frequencies above the cutoff.</div>
<div style="position:absolute;left:65.70px;top:408.30px;width:142.80px;height:4.00px;background:#efefef"></div>
<div style="position:absolute;left:62.00px;top:412.80px;width:150.00px;height:75.00px;background:#f6f6f6"></div>
<div style="position:absolute;left:65.00px;top:414.40px;width:149.00px;height:72.60px;background:#fff;border:0.9px solid #b5d9cc;border-radius:3px"></div>
<div class="t" style="left:68.50px;top:416.80px;font-size:7.8px;color:#007960;-webkit-text-stroke:0.1px #007960;transform:scaleX(0.8129);transform-origin:0 0;">Derived Data</div>
<div class="t" style="left:68.30px;top:424.51px;font-size:4.6px;color:#999;font-style:italic;transform:scaleX(0.9185);transform-origin:0 0;">View data created by tools in a dependency tree</div>
<div style="position:absolute;left:65.50px;top:431.00px;width:148.00px;height:0.60px;background:#e3efea"></div>
<svg style="left:204.30px;top:420.50px;" width="6" height="5" viewBox="0 0 6 5"><path d="M0.7 1 L3 3.6 L5.3 1" stroke="#007960" stroke-width="1.2" fill="none"/></svg>
<div style="position:absolute;left:72.50px;top:450.50px;width:0.50px;height:20.50px;background:#c8c8c8"></div>
<div style="position:absolute;left:72.50px;top:454.40px;width:5.50px;height:0.50px;background:#c8c8c8"></div>
<div style="position:absolute;left:72.50px;top:471.00px;width:6.00px;height:0.50px;background:#c8c8c8"></div>
<div style="position:absolute;left:82.50px;top:458.50px;width:0.50px;height:4.50px;background:#c8c8c8"></div>
<div style="position:absolute;left:82.50px;top:463.00px;width:6.00px;height:0.50px;background:#c8c8c8"></div>
<div style="position:absolute;left:82.50px;top:475.00px;width:0.50px;height:4.50px;background:#c8c8c8"></div>
<div style="position:absolute;left:82.50px;top:479.50px;width:6.00px;height:0.50px;background:#c8c8c8"></div>
<svg style="left:70.30px;top:435.00px;" width="6" height="6" viewBox="0 0 6 6"><path d="M0.5 0 V5.5 H5.8" stroke="#2b3f8f" stroke-width="0.7" fill="none"/><rect x="1.5" y="1" width="1" height="4" fill="#2b3f8f"/><rect x="3.2" y="2.5" width="1" height="2.5" fill="#2b3f8f"/><rect x="4.7" y="3" width="1" height="2" fill="#2b3f8f"/></svg>
<div class="t" style="left:79.00px;top:435.85px;font-size:6.2px;color:#007960;-webkit-text-stroke:0.1px #007960;text-decoration:underline;transform:scaleX(0.9025);transform-origin:0 0;">Opt vs. Temp</div>
<svg style="left:70.60px;top:442.50px;" width="6" height="7" viewBox="0 0 6 7"><path d="M0.5 1.7 C0.5 0.3 2.5 0.3 2.5 1.7 C2.5 3 0.5 4.2 0.5 6.2 H2.7 M3.4 1.7 C3.4 0.3 5.4 0.3 5.4 1.7 C5.4 3 3.4 4.2 3.4 6.2 H5.6" stroke="#c00" stroke-width="1.05" fill="none"/></svg>
<div class="t" style="left:79.00px;top:444.35px;font-size:6.2px;color:#007960;-webkit-text-stroke:0.1px #007960;text-decoration:underline;transform:scaleX(0.9112);transform-origin:0 0;">Temperature Alert Deviation Search</div>
<svg style="left:79.30px;top:452.00px;" width="7" height="5" viewBox="0 0 7 5"><path d="M0.3 1.8 L1.6 0.5 L2.8 2.6 L4 1.4 L5.2 3.6 L6.6 2.3" stroke="#111" stroke-width="0.9" fill="none"/><path d="M5 4.8 L6.4 2.8" stroke="#111" stroke-width="0.8"/></svg>
<svg style="left:88.50px;top:452.00px;" width="7" height="5" viewBox="0 0 7 5"><path d="M0.3 0 V4.6 H6.8" stroke="#007960" stroke-width="0.7" fill="none"/><path d="M1 4.3 V2.5 L2.5 1.3 L3.5 2.5 L4.5 1.8 L6.2 3 V4.3Z" fill="#007960"/></svg>
<div class="t" style="left:97.70px;top:452.65px;font-size:6.2px;color:#007960;-webkit-text-stroke:0.1px #007960;text-decoration:underline;transform:scaleX(0.9204);transform-origin:0 0;">Temperature Normal Lower</div>
<svg style="left:90.10px;top:459.50px;" width="6" height="7" viewBox="0 0 6 7"><path d="M0.5 1.7 C0.5 0.3 2.5 0.3 2.5 1.7 C2.5 3 0.5 4.2 0.5 6.2 H2.7 M3.4 1.7 C3.4 0.3 5.4 0.3 5.4 1.7 C5.4 3 3.4 4.2 3.4 6.2 H5.6" stroke="#111" stroke-width="1.05" fill="none"/></svg>
<svg style="left:98.80px;top:460.50px;" width="7" height="5" viewBox="0 0 7 5"><path d="M0.3 0 V4.6 H6.8" stroke="#007960" stroke-width="0.7" fill="none"/><path d="M1 4.3 V2.5 L2.5 1.3 L3.5 2.5 L4.5 1.8 L6.2 3 V4.3Z" fill="#007960"/></svg>
<div class="t" style="left:107.60px;top:461.15px;font-size:6.2px;color:#007960;-webkit-text-stroke:0.1px #007960;text-decoration:underline;transform:scaleX(0.8434);transform-origin:0 0;">Days</div>
<svg style="left:79.30px;top:469.00px;" width="7" height="5" viewBox="0 0 7 5"><path d="M0.3 1.8 L1.6 0.5 L2.8 2.6 L4 1.4 L5.2 3.6 L6.6 2.3" stroke="#111" stroke-width="0.9" fill="none"/><path d="M5 4.8 L6.4 2.8" stroke="#111" stroke-width="0.8"/></svg>
<svg style="left:88.50px;top:469.00px;" width="7" height="5" viewBox="0 0 7 5"><path d="M0.3 0 V4.6 H6.8" stroke="#007960" stroke-width="0.7" fill="none"/><path d="M1 4.3 V2.5 L2.5 1.3 L3.5 2.5 L4.5 1.8 L6.2 3 V4.3Z" fill="#007960"/></svg>
<div class="t" style="left:97.70px;top:469.75px;font-size:6.2px;color:#007960;-webkit-text-stroke:0.1px #007960;text-decoration:underline;transform:scaleX(0.9204);transform-origin:0 0;">Temperature Normal Upper</div>
<svg style="left:90.10px;top:476.30px;" width="6" height="7" viewBox="0 0 6 7"><path d="M0.5 1.7 C0.5 0.3 2.5 0.3 2.5 1.7 C2.5 3 0.5 4.2 0.5 6.2 H2.7 M3.4 1.7 C3.4 0.3 5.4 0.3 5.4 1.7 C5.4 3 3.4 4.2 3.4 6.2 H5.6" stroke="#111" stroke-width="1.05" fill="none"/></svg>
<svg style="left:98.80px;top:477.50px;" width="7" height="5" viewBox="0 0 7 5"><path d="M0.3 0 V4.6 H6.8" stroke="#007960" stroke-width="0.7" fill="none"/><path d="M1 4.3 V2.5 L2.5 1.3 L3.5 2.5 L4.5 1.8 L6.2 3 V4.3Z" fill="#007960"/></svg>
<div class="t" style="left:107.60px;top:478.25px;font-size:6.2px;color:#007960;-webkit-text-stroke:0.1px #007960;text-decoration:underline;transform:scaleX(0.8434);transform-origin:0 0;">Days</div>
<div style="position:absolute;left:218.00px;top:21.00px;width:0.90px;height:466.30px;background:#cdcdcd"></div>
<div style="position:absolute;left:218.90px;top:21.00px;width:3.60px;height:466.30px;background:#e4e4e4"></div>
<div style="position:absolute;left:222.50px;top:21.00px;width:0.80px;height:466.30px;background:#cfcfcf"></div>
<svg style="left:219.00px;top:251.50px;" width="4" height="6" viewBox="0 0 4 6"><path d="M3.3 0.5 L0.9 3 L3.3 5.5" stroke="#444" stroke-width="0.9" fill="none"/></svg>
<svg style="left:57.30px;top:251.50px;" width="4" height="6" viewBox="0 0 4 6"><path d="M3.3 0.5 L0.9 3 L3.3 5.5" stroke="#444" stroke-width="0.9" fill="none"/></svg>
<div style="position:absolute;left:223.30px;top:21.00px;width:656.70px;height:22.50px;background:#f5f5f5"></div>
<div style="position:absolute;left:223.30px;top:43.30px;width:656.70px;height:0.80px;background:#e9e9e9"></div>
<div style="position:absolute;left:228.40px;top:23.70px;width:23.60px;height:17.60px;background:#007960;border-radius:2.5px"></div>
<svg style="left:232.00px;top:27.00px;" width="18" height="11" viewBox="0 0 18 11"><path d="M0.8 0.5 V9.8 H8.5" stroke="#fff" stroke-width="1.1" fill="none"/><path d="M2.3 8 L3.6 4.5 L5 6.8 L6.3 2.5 L7.6 5.8" stroke="#fff" stroke-width="0.9" fill="none"/><path d="M11.3 4.6 L13.3 6.6 L15.3 4.6" stroke="#fff" stroke-width="1.2" fill="none"/></svg>
<div style="position:absolute;left:255.00px;top:24.40px;width:24.00px;height:16.30px;background:#eaeaea;border:0.6px solid #e2e2e2"></div>
<svg style="left:263.40px;top:25.80px;" width="7" height="7" viewBox="0 0 7 7"><rect x="0.5" y="1.2" width="6" height="5.5" rx="0.8" fill="none" stroke="#3a3a3a" stroke-width="0.9"/><path d="M0.5 3 H6.5 M2 0 V2 M5 0 V2 M2.3 4.5 H4.7" stroke="#3a3a3a" stroke-width="0.8"/></svg>
<svg style="left:285.80px;top:25.50px;" width="7" height="7" viewBox="0 0 7 7"><g transform="rotate(-45 3.5 3.5)"><rect x="2" y="-0.5" width="3" height="4" rx="1.4" fill="none" stroke="#3a3a3a" stroke-width="1"/><rect x="2" y="3.5" width="3" height="4" rx="1.4" fill="none" stroke="#3a3a3a" stroke-width="1"/></g></svg>
<svg style="left:306.70px;top:27.00px;" width="8" height="6" viewBox="0 0 8 6"><rect x="0" y="0" width="7.5" height="1.2" fill="#3a3a3a"/><rect x="0" y="2" width="3.5" height="1.4" fill="#3a3a3a"/><rect x="4.2" y="2" width="3.3" height="1.4" fill="#3a3a3a"/><rect x="0" y="4.2" width="2.5" height="1.4" fill="#3a3a3a"/><rect x="3.2" y="4.2" width="4.3" height="1.4" fill="#3a3a3a"/></svg>
<svg style="left:334.80px;top:25.60px;" width="5" height="7" viewBox="0 0 5 7"><path d="M1.2 0.3 V6.5 M3.7 0.3 V6.5" stroke="#3a3a3a" stroke-width="0.9"/><path d="M0 1.7 L1.2 0 L2.4 1.7Z M2.5 5 L3.7 6.7 L4.9 5Z" fill="#3a3a3a"/></svg>
<svg style="left:340.80px;top:25.60px;" width="9" height="7" viewBox="0 0 9 7"><path d="M0.4 0 V6.4 H8.5" stroke="#3a3a3a" stroke-width="0.7" fill="none"/><path d="M1.3 5.3 L3.3 3 L4.8 4 L7.8 0.8" stroke="#3a3a3a" stroke-width="0.9" fill="none"/></svg>
<svg style="left:361.50px;top:25.60px;" width="5" height="7" viewBox="0 0 5 7"><path d="M1.2 0.3 V6.5 M3.7 0.3 V6.5" stroke="#3a3a3a" stroke-width="0.9"/><path d="M0 1.7 L1.2 0 L2.4 1.7Z M2.5 5 L3.7 6.7 L4.9 5Z" fill="#3a3a3a"/></svg>
<svg style="left:367.60px;top:25.60px;" width="9" height="7" viewBox="0 0 9 7"><path d="M0.4 0 V6.4 H8.5" stroke="#3a3a3a" stroke-width="0.7" fill="none"/><path d="M1.3 5.3 L3.3 3 L4.8 4 L7.8 0.8" stroke="#3a3a3a" stroke-width="0.9" fill="none"/></svg>
<svg style="left:388.00px;top:25.40px;" width="3" height="7.5" viewBox="0 0 3 7.5"><path d="M1.2 1.5 V5.8" stroke="#3a3a3a" stroke-width="0.8"/><path d="M0 1.6 L1.2 0 L2.4 1.6Z M0 5.5 L1.2 7.1 L2.4 5.5Z" fill="#3a3a3a"/></svg>
<svg style="left:392.00px;top:25.60px;" width="9" height="7" viewBox="0 0 9 7"><path d="M0.4 0 V6.4 H8.5" stroke="#3a3a3a" stroke-width="0.7" fill="none"/><path d="M1.3 5.3 L3.3 3 L4.8 4 L7.8 0.8" stroke="#3a3a3a" stroke-width="0.9" fill="none"/></svg>
<svg style="left:409.20px;top:26.20px;" width="10" height="7" viewBox="0 0 10 7"><path d="M0.5 2.2 L2.2 0.5 L4.5 0.5 L7 3 L4.3 5.7 L1.8 3.2Z" fill="#3a3a3a"/><circle cx="2.3" cy="1.8" r="0.5" fill="#f4f4f4"/><path d="M7.6 3.8 L9.2 3.8 L8.4 4.8Z" fill="#3a3a3a"/></svg>
<svg style="left:435.50px;top:26.00px;" width="12" height="6" viewBox="0 0 12 6"><path d="M0.3 5.5 L2 0.5 L3.7 5.5 M1 3.5 H3" stroke="#3a3a3a" stroke-width="0.8" fill="none"/><path d="M4.5 4.8 L5.3 3.5 L6 5" stroke="#3a3a3a" stroke-width="0.5" fill="none"/><path d="M8.8 3.3 L10.8 3.3 L9.8 4.6Z" fill="#3a3a3a"/></svg>
<svg style="left:464.40px;top:26.40px;" width="7" height="7" viewBox="0 0 7 7"><circle cx="3" cy="3" r="2.3" stroke="#c0c0c0" stroke-width="0.8" fill="none"/><path d="M4.7 4.7 L6.6 6.6" stroke="#c0c0c0" stroke-width="1"/><path d="M1.9 3 H4.1 M3 1.9 V4.1" stroke="#c0c0c0" stroke-width="0.6"/></svg>
<svg style="left:480.50px;top:26.00px;" width="11" height="7" viewBox="0 0 11 7"><path d="M0.6 3.2 H7.6 V5.8 C7.6 6.5 0.6 6.5 0.6 5.8Z" fill="none" stroke="#3a3a3a" stroke-width="0.8"/><path d="M4.1 4.3 V0.6 M2.9 1.7 L4.1 0.4 L5.3 1.7" stroke="#3a3a3a" stroke-width="0.8" fill="none"/><path d="M8.8 3.6 L10.6 3.6 L9.7 4.7Z" fill="#3a3a3a"/></svg>
<svg style="left:503.00px;top:26.50px;" width="8" height="6.5" viewBox="0 0 8 6.5"><path d="M4 0.5 C6.2 0.5 7.5 1.5 7.5 2.8 C7.5 4.1 6.2 5 4 5 L1.5 6.2 L2.2 4.6 C1 4.1 0.5 3.5 0.5 2.8 C0.5 1.5 1.8 0.5 4 0.5Z" fill="none" stroke="#c0c0c0" stroke-width="0.7"/></svg>
<div class="t" style="left:258.25px;top:35.01px;font-size:4.6px;color:#555;transform:scaleX(0.9380);transform-origin:0 0;">Calendar</div>
<div class="t" style="left:283.40px;top:35.01px;font-size:4.6px;color:#555;transform:scaleX(0.9654);transform-origin:0 0;">Chain</div>
<div class="t" style="left:302.50px;top:35.01px;font-size:4.6px;color:#555;transform:scaleX(0.9490);transform-origin:0 0;">Capsule</div>
<div class="t" style="left:332.00px;top:35.01px;font-size:4.6px;color:#555;transform:scaleX(0.9313);transform-origin:0 0;">One Lane</div>
<div class="t" style="left:358.50px;top:35.01px;font-size:4.6px;color:#555;transform:scaleX(0.8797);transform-origin:0 0;">One Y-Axis</div>
<div class="t" style="left:386.95px;top:35.01px;font-size:4.6px;color:#555;transform:scaleX(0.8835);transform-origin:0 0;">Spread</div>
<div class="t" style="left:407.45px;top:35.01px;font-size:4.6px;color:#555;transform:scaleX(0.9670);transform-origin:0 0;">Labels</div>
<div class="t" style="left:432.45px;top:35.01px;font-size:4.6px;color:#555;transform:scaleX(0.9766);transform-origin:0 0;">Dimming</div>
<div class="t" style="left:462.00px;top:35.01px;font-size:4.6px;color:#c4c4c4;transform:scaleX(1.0213);transform-origin:0 0;">Zoom</div>
<div class="t" style="left:479.75px;top:35.01px;font-size:4.6px;color:#555;transform:scaleX(0.9864);transform-origin:0 0;">Export</div>
<div class="t" style="left:497.85px;top:35.01px;font-size:4.6px;color:#c4c4c4;transform:scaleX(0.9942);transform-origin:0 0;">Annotate</div>
<div style="position:absolute;left:325.00px;top:24.50px;width:0.60px;height:16.50px;background:#dedede"></div>
<div style="position:absolute;left:429.60px;top:24.50px;width:0.60px;height:16.50px;background:#dedede"></div>
<div style="position:absolute;left:457.60px;top:24.50px;width:0.60px;height:16.50px;background:#dedede"></div>
<div style="position:absolute;left:252.40px;top:53.40px;width:0.70px;height:78.00px;background:#dfe4f0"></div>
<div style="position:absolute;left:252.40px;top:131.10px;width:623.50px;height:0.90px;background:#dfe4f0"></div>
<div style="position:absolute;left:252.20px;top:131.10px;width:0.70px;height:3.50px;background:#dfe4f0"></div>
<div style="position:absolute;left:321.50px;top:131.10px;width:0.70px;height:3.50px;background:#dfe4f0"></div>
<div style="position:absolute;left:390.80px;top:131.10px;width:0.70px;height:3.50px;background:#dfe4f0"></div>
<div style="position:absolute;left:460.10px;top:131.10px;width:0.70px;height:3.50px;background:#dfe4f0"></div>
<div style="position:absolute;left:529.40px;top:131.10px;width:0.70px;height:3.50px;background:#dfe4f0"></div>
<div style="position:absolute;left:598.70px;top:131.10px;width:0.70px;height:3.50px;background:#dfe4f0"></div>
<div style="position:absolute;left:668.00px;top:131.10px;width:0.70px;height:3.50px;background:#dfe4f0"></div>
<div style="position:absolute;left:737.30px;top:131.10px;width:0.70px;height:3.50px;background:#dfe4f0"></div>
<div style="position:absolute;left:806.60px;top:131.10px;width:0.70px;height:3.50px;background:#dfe4f0"></div>
<div style="position:absolute;left:875.90px;top:131.10px;width:0.70px;height:3.50px;background:#dfe4f0"></div>
<div class="t" style="left:240.70px;top:51.97px;font-size:5px;color:#555;transform:scaleX(1.0427);transform-origin:0 0;">75</div>
<div class="t" style="left:240.70px;top:77.87px;font-size:5px;color:#555;transform:scaleX(1.0427);transform-origin:0 0;">50</div>
<div class="t" style="left:240.70px;top:103.57px;font-size:5px;color:#555;transform:scaleX(1.0427);transform-origin:0 0;">25</div>
<div class="t" style="left:243.50px;top:129.97px;font-size:5px;color:#555;transform:scaleX(1.0787);transform-origin:0 0;">0</div>
<div class="t" style="left:230.3px;top:103px;font-size:4.8px;color:#555;transform:rotate(-90deg) scaleX(0.92);transform-origin:0 0">Optimizer</div>
<div style="position:absolute;left:478.75px;top:126.30px;width:32.80px;height:4.80px;background:#01325a"></div>
<div style="position:absolute;left:548.00px;top:115.00px;width:32.80px;height:16.10px;background:#01325a"></div>
<div style="position:absolute;left:617.00px;top:95.80px;width:32.80px;height:35.30px;background:#01325a"></div>
<div style="position:absolute;left:686.75px;top:97.00px;width:32.80px;height:34.10px;background:#01325a"></div>
<div style="position:absolute;left:755.50px;top:78.00px;width:32.80px;height:53.10px;background:#01325a"></div>
<div style="position:absolute;left:824.50px;top:126.80px;width:32.80px;height:4.30px;background:#01325a"></div>
<div class="t" style="left:274.30px;top:136.65px;font-size:4.9px;color:#666;transform:scaleX(1.0070);transform-origin:0 0;">64°F - 69°F</div>
<div class="t" style="left:343.60px;top:136.65px;font-size:4.9px;color:#666;transform:scaleX(1.0070);transform-origin:0 0;">69°F - 74°F</div>
<div class="t" style="left:412.90px;top:136.65px;font-size:4.9px;color:#666;transform:scaleX(1.0070);transform-origin:0 0;">74°F - 79°F</div>
<div class="t" style="left:482.20px;top:136.65px;font-size:4.9px;color:#666;transform:scaleX(1.0070);transform-origin:0 0;">79°F - 84°F</div>
<div class="t" style="left:551.50px;top:136.65px;font-size:4.9px;color:#666;transform:scaleX(1.0070);transform-origin:0 0;">84°F - 89°F</div>
<div class="t" style="left:620.80px;top:136.65px;font-size:4.9px;color:#666;transform:scaleX(1.0070);transform-origin:0 0;">89°F - 94°F</div>
<div class="t" style="left:690.10px;top:136.65px;font-size:4.9px;color:#666;transform:scaleX(1.0070);transform-origin:0 0;">94°F - 99°F</div>
<div class="t" style="left:757.80px;top:136.65px;font-size:4.9px;color:#666;transform:scaleX(1.0236);transform-origin:0 0;">99°F - 104°F</div>
<div class="t" style="left:827.10px;top:136.65px;font-size:4.9px;color:#666;transform:scaleX(0.9325);transform-origin:0 0;">104°F - 109°F</div>
<div style="position:absolute;left:296.00px;top:147.80px;width:1.00px;height:2.30px;background:#c40000"></div>
<div style="position:absolute;left:299.40px;top:147.80px;width:1.00px;height:2.30px;background:#c40000"></div>
<div style="position:absolute;left:302.60px;top:147.80px;width:1.00px;height:2.30px;background:#c40000"></div>
<div style="position:absolute;left:406.40px;top:147.80px;width:1.20px;height:2.30px;background:#c40000"></div>
<div style="position:absolute;left:472.00px;top:147.80px;width:16.90px;height:2.30px;background:#c40000"></div>
<div style="position:absolute;left:490.60px;top:147.80px;width:1.20px;height:2.30px;background:#c40000"></div>
<div style="position:absolute;left:503.60px;top:147.80px;width:15.10px;height:2.30px;background:#c40000"></div>
<div style="position:absolute;left:744.00px;top:147.80px;width:9.90px;height:2.30px;background:#c40000"></div>
<div style="position:absolute;left:767.10px;top:147.80px;width:1.10px;height:2.30px;background:#c40000"></div>
<div style="position:absolute;left:770.90px;top:147.80px;width:1.50px;height:2.30px;background:#c40000"></div>
<div style="position:absolute;left:774.30px;top:147.80px;width:1.70px;height:2.30px;background:#c40000"></div>
<div style="position:absolute;left:778.60px;top:147.80px;width:1.20px;height:2.30px;background:#c40000"></div>
<div style="position:absolute;left:780.80px;top:147.80px;width:1.20px;height:2.30px;background:#c40000"></div>
<div style="position:absolute;left:783.70px;top:147.80px;width:1.20px;height:2.30px;background:#c40000"></div>
<div style="position:absolute;left:798.70px;top:147.80px;width:45.40px;height:2.30px;background:#c40000"></div>
<div style="position:absolute;left:235.50px;top:150.40px;width:644.50px;height:183.00px;background:#f9f9f9"></div>
<svg style="left:0;top:0" width="880" height="500"><defs><clipPath id="lc"><rect x="235.5" y="150.4" width="643" height="183"/></clipPath></defs><g clip-path="url(#lc)"><path d="M235.5 220.1 L236.0 220.9 L236.5 221.3 L237.0 221.4 L237.5 221.9 L238.0 222.5 L238.5 223.4 L239.0 223.6 L239.5 224.6 L240.0 225.1 L240.5 226.0 L241.0 226.5 L241.5 226.3 L242.0 227.0 L242.5 227.4 L243.0 228.4 L243.5 228.8 L244.0 228.9 L244.5 230.0 L245.0 230.2 L245.5 230.9 L246.0 231.7 L246.5 231.7 L247.0 232.5 L247.5 233.3 L248.0 234.1 L248.5 234.0 L249.0 234.3 L249.5 234.7 L250.0 236.0 L250.5 236.6 L251.0 237.0 L251.5 237.4 L252.0 238.2 L252.5 238.4 L253.0 238.5 L253.5 239.6 L254.0 240.3 L254.5 240.4 L255.0 240.6 L255.5 241.3 L256.0 241.7 L256.5 242.3 L257.0 243.1 L257.5 243.3 L258.0 244.3 L258.5 245.1 L259.0 245.1 L259.5 245.8 L260.0 246.9 L260.5 246.6 L261.0 247.2 L261.5 248.1 L262.0 248.1 L262.5 249.1 L263.0 250.6 L263.5 251.2 L264.0 252.3 L264.5 253.5 L265.0 254.5 L265.5 255.0 L266.0 255.6 L266.5 256.6 L267.0 257.7 L267.5 259.3 L268.0 260.5 L268.5 262.0 L269.0 263.4 L269.5 260.7 L270.0 256.7 L270.5 253.2 L271.0 255.4 L271.5 257.3 L272.0 259.2 L272.5 258.4 L273.0 257.3 L273.5 254.8 L274.0 253.7 L274.5 252.1 L275.0 250.4 L275.5 249.0 L276.0 246.6 L276.5 244.6 L277.0 243.2 L277.5 241.2 L278.0 239.8 L278.5 238.0 L279.0 236.2 L279.5 233.8 L280.0 232.1 L280.5 229.9 L281.0 228.4 L281.5 227.2 L282.0 225.1 L282.5 222.8 L283.0 219.7 L283.5 217.3 L284.0 215.4 L284.5 213.3 L285.0 210.8 L285.5 207.9 L286.0 206.4 L286.5 203.9 L287.0 200.9 L287.5 198.8 L288.0 197.1 L288.5 194.1 L289.0 192.1 L289.5 189.2 L290.0 187.5 L290.5 184.0 L291.0 182.0 L291.5 178.7 L292.0 175.7 L292.5 174.3 L293.0 174.8 L293.5 167.1 L294.0 166.7 L294.5 173.1 L295.0 172.6 L295.5 172.9 L296.0 170.1 L296.5 165.8 L297.0 165.9 L297.5 171.9 L298.0 170.9 L298.5 170.9 L299.0 172.1 L299.5 172.1 L300.0 165.8 L300.5 164.6 L301.0 170.8 L301.5 167.0 L302.0 166.8 L302.5 169.9 L303.0 170.8 L303.5 167.4 L304.0 162.9 L304.5 170.1 L305.0 169.2 L305.5 167.3 L306.0 167.8 L306.5 169.6 L307.0 170.2 L307.5 168.6 L308.0 170.5 L308.5 170.2 L309.0 169.8 L309.5 163.4 L310.0 166.1 L310.5 164.7 L311.0 164.2 L311.5 166.9 L312.0 166.5 L312.5 170.7 L313.0 171.2 L313.5 172.3 L314.0 166.0 L314.5 167.3 L315.0 166.7 L315.5 169.8 L316.0 181.4 L316.5 182.1 L317.0 184.6 L317.5 186.6 L318.0 189.2 L318.5 183.7 L319.0 185.0 L319.5 186.3 L320.0 196.3 L320.5 198.7 L321.0 200.6 L321.5 201.6 L322.0 204.2 L322.5 205.8 L323.0 207.0 L323.5 208.0 L324.0 208.8 L324.5 210.5 L325.0 211.3 L325.5 212.2 L326.0 212.5 L326.5 213.6 L327.0 214.1 L327.5 215.4 L328.0 216.0 L328.5 217.1 L329.0 217.6 L329.5 219.0 L330.0 219.6 L330.5 220.1 L331.0 220.1 L331.5 221.2 L332.0 221.1 L332.5 221.6 L333.0 221.9 L333.5 222.6 L334.0 223.1 L334.5 223.9 L335.0 224.3 L335.5 225.3 L336.0 225.6 L336.5 226.4 L337.0 226.7 L337.5 227.3 L338.0 227.8 L338.5 227.9 L339.0 229.0 L339.5 229.1 L340.0 229.5 L340.5 230.7 L341.0 230.9 L341.5 231.3 L342.0 231.4 L342.5 232.0 L343.0 232.8 L343.5 233.7 L344.0 233.8 L344.5 234.1 L345.0 234.8 L345.5 235.2 L346.0 236.0 L346.5 236.8 L347.0 236.9 L347.5 237.4 L348.0 237.7 L348.5 239.1 L349.0 239.2 L349.5 240.0 L350.0 240.0 L350.5 240.6 L351.0 241.7 L351.5 242.2 L352.0 241.8 L352.5 243.2 L353.0 243.5 L353.5 243.8 L354.0 244.8 L354.5 245.4 L355.0 245.1 L355.5 246.0 L356.0 247.0 L356.5 247.2 L357.0 247.6 L357.5 247.7 L358.0 248.4 L358.5 249.5 L359.0 249.9 L359.5 251.4 L360.0 251.8 L360.5 253.2 L361.0 254.0 L361.5 255.2 L362.0 255.9 L362.5 257.5 L363.0 258.4 L363.5 259.3 L364.0 261.5 L364.5 262.4 L365.0 263.8 L365.5 260.0 L366.0 256.5 L366.5 253.0 L367.0 255.4 L367.5 258.1 L368.0 260.1 L368.5 258.1 L369.0 256.9 L369.5 255.0 L370.0 252.7 L370.5 251.1 L371.0 249.6 L371.5 247.4 L372.0 246.0 L372.5 243.6 L373.0 241.8 L373.5 239.9 L374.0 237.9 L374.5 236.9 L375.0 234.8 L375.5 233.2 L376.0 230.6 L376.5 229.2 L377.0 227.3 L377.5 224.9 L378.0 222.3 L378.5 220.0 L379.0 218.3 L379.5 215.9 L380.0 212.9 L380.5 210.9 L381.0 207.7 L381.5 205.6 L382.0 203.1 L382.5 201.4 L383.0 198.5 L383.5 196.4 L384.0 193.3 L384.5 191.7 L385.0 189.2 L385.5 186.1 L386.0 183.9 L386.5 180.3 L387.0 177.5 L387.5 174.4 L388.0 174.5 L388.5 165.5 L389.0 166.3 L389.5 171.9 L390.0 171.1 L390.5 172.6 L391.0 170.5 L391.5 170.8 L392.0 164.7 L392.5 170.5 L393.0 171.5 L393.5 170.3 L394.0 170.7 L394.5 166.0 L395.0 160.5 L395.5 161.6 L396.0 171.7 L396.5 164.9 L397.0 164.7 L397.5 162.3 L398.0 161.0 L398.5 169.5 L399.0 161.4 L399.5 170.0 L400.0 169.6 L400.5 169.5 L401.0 170.4 L401.5 169.6 L402.0 165.7 L402.5 170.6 L403.0 162.9 L403.5 163.0 L404.0 164.0 L404.5 165.8 L405.0 165.7 L405.5 167.6 L406.0 167.1 L406.5 171.2 L407.0 172.7 L407.5 164.7 L408.0 166.2 L408.5 172.7 L409.0 176.1 L409.5 177.0 L410.0 179.4 L410.5 181.6 L411.0 182.7 L411.5 180.3 L412.0 184.2 L412.5 187.7 L413.0 191.5 L413.5 192.0 L414.0 194.9 L414.5 196.4 L415.0 198.5 L415.5 199.9 L416.0 201.7 L416.5 203.9 L417.0 206.5 L417.5 207.6 L418.0 207.9 L418.5 209.0 L419.0 210.2 L419.5 211.6 L420.0 211.8 L420.5 212.6 L421.0 213.8 L421.5 214.8 L422.0 215.9 L422.5 216.5 L423.0 217.7 L423.5 218.8 L424.0 218.6 L424.5 219.6 L425.0 220.3 L425.5 220.3 L426.0 221.2 L426.5 221.5 L427.0 222.1 L427.5 222.9 L428.0 223.6 L428.5 223.8 L429.0 224.1 L429.5 225.1 L430.0 225.4 L430.5 225.6 L431.0 226.6 L431.5 227.2 L432.0 227.2 L432.5 227.9 L433.0 229.0 L433.5 229.4 L434.0 230.1 L434.5 230.2 L435.0 230.8 L435.5 230.9 L436.0 231.4 L436.5 232.7 L437.0 233.3 L437.5 233.3 L438.0 234.0 L438.5 234.6 L439.0 235.3 L439.5 235.4 L440.0 235.7 L440.5 236.5 L441.0 237.8 L441.5 237.7 L442.0 238.2 L442.5 239.3 L443.0 239.7 L443.5 240.5 L444.0 240.9 L444.5 241.5 L445.0 241.9 L445.5 242.0 L446.0 242.9 L446.5 243.7 L447.0 243.4 L447.5 244.8 L448.0 244.6 L448.5 245.0 L449.0 246.1 L449.5 246.8 L450.0 247.2 L450.5 247.9 L451.0 248.6 L451.5 249.1 L452.0 249.9 L452.5 250.2 L453.0 251.0 L453.5 252.8 L454.0 253.8 L454.5 254.2 L455.0 255.0 L455.5 256.1 L456.0 257.3 L456.5 258.4 L457.0 260.3 L457.5 261.4 L458.0 263.1 L458.5 262.7 L459.0 258.9 L459.5 255.6 L460.0 254.0 L460.5 255.9 L461.0 258.1 L461.5 259.1 L462.0 257.5 L462.5 256.6 L463.0 254.4 L463.5 253.1 L464.0 251.1 L464.5 249.8 L465.0 248.0 L465.5 245.5 L466.0 243.9 L466.5 242.2 L467.0 240.5 L467.5 238.7 L468.0 236.4 L468.5 234.6 L469.0 232.5 L469.5 230.6 L470.0 229.0 L470.5 227.4 L471.0 225.8 L471.5 223.0 L472.0 220.9 L472.5 218.5 L473.0 215.8 L473.5 213.9 L474.0 211.5 L474.5 208.8 L475.0 206.6 L475.5 204.1 L476.0 201.5 L476.5 199.2 L477.0 197.4 L477.5 194.4 L478.0 192.2 L478.5 189.6 L479.0 187.2 L479.5 185.0 L480.0 182.4 L480.5 179.1 L481.0 176.7 L481.5 173.4 L482.0 166.5 L482.5 166.8 L483.0 165.6 L483.5 165.1 L484.0 171.7 L484.5 172.5 L485.0 171.0 L485.5 166.3 L486.0 167.1 L486.5 171.1 L487.0 170.0 L487.5 169.6 L488.0 171.6 L488.5 170.3 L489.0 164.3 L489.5 164.3 L490.0 162.4 L490.5 162.5 L491.0 171.1 L491.5 163.8 L492.0 164.5 L492.5 171.6 L493.0 171.3 L493.5 170.9 L494.0 171.1 L494.5 170.3 L495.0 161.1 L495.5 160.2 L496.0 165.3 L496.5 170.7 L497.0 170.1 L497.5 162.0 L498.0 164.7 L498.5 164.8 L499.0 170.4 L499.5 162.6 L500.0 163.3 L500.5 170.3 L501.0 171.2 L501.5 166.0 L502.0 166.2 L502.5 172.2 L503.0 164.6 L503.5 170.9 L504.0 173.0 L504.5 176.0 L505.0 175.3 L505.5 182.7 L506.0 184.5 L506.5 188.2 L507.0 190.5 L507.5 190.7 L508.0 194.7 L508.5 194.9 L509.0 197.5 L509.5 199.0 L510.0 201.1 L510.5 203.2 L511.0 204.4 L511.5 206.4 L512.0 207.7 L512.5 209.1 L513.0 209.8 L513.5 210.1 L514.0 211.2 L514.5 212.3 L515.0 213.6 L515.5 213.7 L516.0 214.6 L516.5 216.1 L517.0 216.8 L517.5 217.9 L518.0 218.7 L518.5 218.7 L519.0 219.7 L519.5 219.7 L520.0 220.1 L520.5 220.7 L521.0 221.6 L521.5 222.1 L522.0 222.9 L522.5 223.0 L523.0 223.9 L523.5 224.3 L524.0 225.0 L524.5 224.9 L525.0 225.9 L525.5 226.1 L526.0 226.8 L526.5 227.2 L527.0 228.1 L527.5 228.2 L528.0 229.4 L528.5 229.8 L529.0 229.7 L529.5 231.1 L530.0 231.6 L530.5 231.7 L531.0 232.2 L531.5 232.8 L532.0 233.1 L532.5 234.0 L533.0 234.1 L533.5 234.7 L534.0 235.8 L534.5 235.4 L535.0 236.5 L535.5 236.8 L536.0 237.4 L536.5 237.8 L537.0 238.4 L537.5 238.8 L538.0 239.2 L538.5 240.0 L539.0 240.6 L539.5 241.6 L540.0 242.2 L540.5 242.7 L541.0 242.8 L541.5 243.2 L542.0 243.7 L542.5 244.0 L543.0 245.3 L543.5 245.6 L544.0 246.5 L544.5 246.2 L545.0 247.2 L545.5 247.3 L546.0 248.0 L546.5 248.6 L547.0 249.0 L547.5 250.6 L548.0 251.7 L548.5 252.7 L549.0 253.8 L549.5 253.9 L550.0 255.0 L550.5 256.7 L551.0 256.9 L551.5 258.2 L552.0 260.0 L552.5 261.8 L553.0 262.4 L553.5 262.7 L554.0 259.3 L554.5 256.1 L555.0 253.5 L555.5 255.7 L556.0 257.9 L556.5 259.7 L557.0 258.1 L557.5 256.1 L558.0 254.4 L558.5 252.8 L559.0 251.6 L559.5 249.4 L560.0 247.9 L560.5 246.1 L561.0 244.0 L561.5 242.3 L562.0 240.6 L562.5 238.2 L563.0 236.1 L563.5 234.4 L564.0 232.4 L564.5 230.7 L565.0 228.7 L565.5 227.6 L566.0 224.8 L566.5 222.5 L567.0 220.5 L567.5 218.3 L568.0 215.2 L568.5 213.2 L569.0 210.8 L569.5 208.7 L570.0 206.1 L570.5 203.3 L571.0 201.8 L571.5 198.7 L572.0 196.2 L572.5 194.0 L573.0 192.1 L573.5 189.0 L574.0 186.7 L574.5 184.0 L575.0 181.4 L575.5 178.1 L576.0 175.0 L576.5 169.4 L577.0 165.8 L577.5 166.6 L578.0 165.2 L578.5 171.7 L579.0 170.9 L579.5 167.5 L580.0 167.0 L580.5 172.5 L581.0 170.6 L581.5 171.8 L582.0 161.2 L582.5 170.1 L583.0 166.2 L583.5 171.0 L584.0 170.3 L584.5 169.3 L585.0 171.0 L585.5 162.7 L586.0 170.1 L586.5 170.5 L587.0 163.7 L587.5 161.9 L588.0 170.1 L588.5 166.1 L589.0 171.0 L589.5 171.2 L590.0 168.6 L590.5 160.0 L591.0 170.9 L591.5 169.7 L592.0 161.8 L592.5 170.9 L593.0 171.4 L593.5 169.5 L594.0 163.8 L594.5 163.4 L595.0 171.5 L595.5 171.7 L596.0 171.4 L596.5 172.6 L597.0 172.0 L597.5 173.0 L598.0 174.5 L598.5 176.7 L599.0 179.6 L599.5 181.1 L600.0 183.5 L600.5 181.2 L601.0 181.9 L601.5 189.9 L602.0 191.4 L602.5 193.2 L603.0 194.7 L603.5 196.8 L604.0 198.9 L604.5 201.3 L605.0 202.7 L605.5 205.1 L606.0 206.6 L606.5 207.4 L607.0 209.1 L607.5 209.6 L608.0 210.9 L608.5 211.7 L609.0 212.7 L609.5 212.9 L610.0 214.2 L610.5 214.8 L611.0 216.1 L611.5 216.8 L612.0 218.0 L612.5 218.4 L613.0 218.8 L613.5 219.0 L614.0 220.4 L614.5 220.8 L615.0 221.1 L615.5 221.4 L616.0 222.2 L616.5 222.8 L617.0 222.9 L617.5 224.1 L618.0 224.0 L618.5 224.9 L619.0 225.5 L619.5 225.5 L620.0 226.8 L620.5 227.2 L621.0 227.2 L621.5 227.7 L622.0 228.7 L622.5 229.1 L623.0 229.3 L623.5 230.3 L624.0 230.7 L624.5 231.1 L625.0 232.3 L625.5 232.2 L626.0 233.2 L626.5 233.6 L627.0 234.0 L627.5 234.3 L628.0 235.3 L628.5 235.4 L629.0 236.1 L629.5 236.4 L630.0 237.1 L630.5 238.2 L631.0 238.4 L631.5 238.9 L632.0 239.3 L632.5 239.5 L633.0 240.3 L633.5 240.7 L634.0 241.3 L634.5 242.2 L635.0 242.3 L635.5 242.7 L636.0 244.0 L636.5 244.2 L637.0 245.1 L637.5 245.2 L638.0 245.7 L638.5 246.1 L639.0 246.9 L639.5 247.4 L640.0 248.2 L640.5 248.9 L641.0 249.0 L641.5 250.2 L642.0 251.5 L642.5 252.1 L643.0 252.9 L643.5 254.0 L644.0 255.1 L644.5 255.9 L645.0 256.7 L645.5 257.8 L646.0 259.1 L646.5 260.9 L647.0 262.3 L647.5 263.6 L648.0 259.7 L648.5 256.2 L649.0 253.6 L649.5 255.9 L650.0 257.5 L650.5 259.3 L651.0 258.3 L651.5 256.3 L652.0 254.9 L652.5 253.4 L653.0 251.5 L653.5 249.3 L654.0 248.0 L654.5 245.5 L655.0 243.7 L655.5 242.0 L656.0 239.9 L656.5 238.6 L657.0 236.9 L657.5 234.9 L658.0 232.8 L658.5 230.8 L659.0 229.4 L659.5 227.0 L660.0 225.5 L660.5 222.3 L661.0 220.0 L661.5 217.7 L662.0 215.8 L662.5 213.4 L663.0 211.0 L663.5 208.2 L664.0 206.4 L664.5 204.0 L665.0 201.4 L665.5 198.9 L666.0 195.9 L666.5 193.9 L667.0 192.0 L667.5 189.4 L668.0 186.7 L668.5 183.4 L669.0 181.3 L669.5 178.1 L670.0 174.7 L670.5 172.9 L671.0 173.5 L671.5 173.3 L672.0 165.0 L672.5 173.5 L673.0 172.6 L673.5 170.3 L674.0 170.3 L674.5 170.1 L675.0 168.0 L675.5 170.7 L676.0 171.9 L676.5 170.0 L677.0 171.5 L677.5 166.9 L678.0 171.1 L678.5 161.7 L679.0 161.8 L679.5 171.0 L680.0 171.0 L680.5 170.1 L681.0 169.0 L681.5 169.1 L682.0 164.8 L682.5 167.5 L683.0 168.0 L683.5 167.1 L684.0 169.4 L684.5 170.7 L685.0 169.3 L685.5 170.2 L686.0 169.5 L686.5 169.6 L687.0 169.7 L687.5 170.3 L688.0 171.3 L688.5 172.3 L689.0 171.8 L689.5 171.7 L690.0 170.5 L690.5 171.7 L691.0 167.5 L691.5 175.3 L692.0 171.6 L692.5 174.2 L693.0 176.7 L693.5 183.2 L694.0 179.8 L694.5 187.0 L695.0 177.2 L695.5 180.8 L696.0 185.1 L696.5 194.4 L697.0 196.4 L697.5 197.7 L698.0 199.6 L698.5 201.8 L699.0 204.0 L699.5 205.4 L700.0 207.7 L700.5 208.0 L701.0 208.8 L701.5 210.4 L702.0 211.1 L702.5 211.5 L703.0 212.4 L703.5 213.6 L704.0 214.8 L704.5 215.8 L705.0 216.9 L705.5 217.2 L706.0 218.3 L706.5 219.1 L707.0 219.0 L707.5 219.5 L708.0 220.8 L708.5 220.8 L709.0 221.2 L709.5 222.2 L710.0 222.7 L710.5 223.5 L711.0 223.6 L711.5 224.5 L712.0 224.4 L712.5 225.6 L713.0 225.7 L713.5 226.6 L714.0 226.9 L714.5 227.6 L715.0 228.0 L715.5 228.9 L716.0 228.7 L716.5 229.6 L717.0 230.0 L717.5 231.1 L718.0 231.4 L718.5 232.1 L719.0 231.9 L719.5 232.8 L720.0 233.5 L720.5 233.4 L721.0 234.4 L721.5 234.7 L722.0 235.1 L722.5 235.6 L723.0 236.1 L723.5 237.4 L724.0 237.9 L724.5 238.0 L725.0 238.3 L725.5 238.8 L726.0 240.2 L726.5 240.4 L727.0 241.2 L727.5 241.8 L728.0 241.6 L728.5 242.8 L729.0 243.0 L729.5 244.0 L730.0 244.0 L730.5 244.5 L731.0 245.5 L731.5 245.5 L732.0 246.1 L732.5 247.2 L733.0 247.3 L733.5 248.1 L734.0 248.2 L734.5 249.2 L735.0 250.2 L735.5 251.0 L736.0 252.2 L736.5 253.1 L737.0 254.1 L737.5 255.1 L738.0 255.8 L738.5 256.6 L739.0 258.5 L739.5 259.6 L740.0 261.4 L740.5 262.6 L741.0 264.0 L741.5 260.9 L742.0 257.1 L742.5 253.8 L743.0 255.4 L743.5 257.4 L744.0 259.9 L744.5 259.0 L745.0 257.4 L745.5 255.2 L746.0 254.0 L746.5 252.2 L747.0 250.7 L747.5 248.8 L748.0 246.5 L748.5 245.4 L749.0 243.3 L749.5 240.9 L750.0 239.7 L750.5 237.6 L751.0 235.8 L751.5 234.4 L752.0 232.7 L752.5 230.4 L753.0 228.9 L753.5 226.4 L754.0 224.3 L754.5 222.7 L755.0 219.8 L755.5 218.1 L756.0 214.9 L756.5 213.3 L757.0 210.2 L757.5 208.2 L758.0 205.6 L758.5 203.8 L759.0 200.9 L759.5 198.6 L760.0 196.6 L760.5 194.5 L761.0 191.8 L761.5 189.7 L762.0 187.0 L762.5 184.7 L763.0 181.3 L763.5 178.3 L764.0 176.1 L764.5 174.0 L765.0 169.3 L765.5 166.3 L766.0 173.5 L766.5 173.3 L767.0 170.7 L767.5 165.8 L768.0 171.7 L768.5 172.5 L769.0 170.4 L769.5 170.5 L770.0 169.8 L770.5 161.8 L771.0 160.7 L771.5 171.1 L772.0 170.7 L772.5 170.4 L773.0 171.7 L773.5 170.0 L774.0 171.5 L774.5 171.4 L775.0 169.2 L775.5 164.9 L776.0 166.8 L776.5 170.7 L777.0 164.9 L777.5 160.7 L778.0 160.8 L778.5 169.2 L779.0 168.7 L779.5 170.1 L780.0 162.0 L780.5 164.0 L781.0 164.6 L781.5 170.1 L782.0 170.5 L782.5 169.8 L783.0 171.3 L783.5 171.5 L784.0 170.4 L784.5 170.2 L785.0 171.4 L785.5 173.1 L786.0 165.9 L786.5 166.6 L787.0 177.5 L787.5 180.4 L788.0 176.7 L788.5 183.3 L789.0 185.1 L789.5 185.3 L790.0 187.4 L790.5 182.3 L791.0 193.1 L791.5 193.8 L792.0 196.5 L792.5 198.7 L793.0 200.4 L793.5 202.2 L794.0 203.7 L794.5 206.2 L795.0 207.8 L795.5 207.8 L796.0 209.4 L796.5 210.0 L797.0 210.7 L797.5 212.0 L798.0 212.3 L798.5 213.2 L799.0 214.4 L799.5 215.5 L800.0 216.4 L800.5 217.7 L801.0 218.4 L801.5 218.9 L802.0 219.0 L802.5 219.6 L803.0 219.9 L803.5 220.3 L804.0 221.5 L804.5 222.0 L805.0 222.6 L805.5 223.3 L806.0 223.8 L806.5 223.7 L807.0 224.7 L807.5 225.4 L808.0 225.4 L808.5 226.1 L809.0 226.1 L809.5 226.8 L810.0 227.9 L810.5 228.5 L811.0 228.7 L811.5 229.0 L812.0 229.8 L812.5 230.0 L813.0 230.5 L813.5 230.9 L814.0 231.6 L814.5 232.4 L815.0 232.9 L815.5 233.4 L816.0 233.4 L816.5 234.0 L817.0 234.6 L817.5 235.3 L818.0 236.1 L818.5 236.2 L819.0 236.9 L819.5 237.9 L820.0 237.7 L820.5 239.0 L821.0 239.1 L821.5 239.3 L822.0 239.9 L822.5 240.7 L823.0 241.0 L823.5 241.5 L824.0 242.1 L824.5 242.8 L825.0 242.9 L825.5 243.9 L826.0 244.5 L826.5 244.7 L827.0 245.1 L827.5 245.5 L828.0 246.6 L828.5 247.5 L829.0 247.7 L829.5 248.2 L830.0 248.9 L830.5 249.1 L831.0 250.8 L831.5 251.4 L832.0 252.5 L832.5 253.5 L833.0 254.6 L833.5 255.5 L834.0 256.0 L834.5 256.8 L835.0 258.2 L835.5 259.3 L836.0 260.7 L836.5 262.3 L837.0 264.5 L837.5 260.3 L838.0 256.9 L838.5 253.3 L839.0 255.0 L839.5 258.0 L840.0 259.6 L840.5 258.2 L841.0 257.1 L841.5 255.2 L842.0 253.7 L842.5 252.1 L843.0 250.3 L843.5 248.2 L844.0 246.6 L844.5 244.8 L845.0 243.1 L845.5 241.2 L846.0 239.4 L846.5 236.8 L847.0 235.0 L847.5 233.3 L848.0 231.5 L848.5 229.9 L849.0 227.7 L849.5 226.3 L850.0 224.1 L850.5 221.2 L851.0 219.0 L851.5 216.3 L852.0 214.5 L852.5 211.3 L853.0 208.9 L853.5 207.3 L854.0 204.7 L854.5 202.1 L855.0 199.7 L855.5 197.6 L856.0 194.7 L856.5 193.0 L857.0 190.5 L857.5 187.6 L858.0 184.7 L858.5 182.1 L859.0 180.1 L859.5 176.5 L860.0 174.1 L860.5 174.1 L861.0 172.8 L861.5 171.4 L862.0 173.0 L862.5 168.5 L863.0 167.7 L863.5 163.9 L864.0 164.2 L864.5 171.7 L865.0 171.0 L865.5 171.7 L866.0 170.4 L866.5 160.1 L867.0 170.4 L867.5 170.0 L868.0 171.1 L868.5 170.5 L869.0 160.9 L869.5 161.0 L870.0 171.4 L870.5 165.2 L871.0 166.2 L871.5 163.4 L872.0 164.5 L872.5 165.5 L873.0 163.6 L873.5 169.6 L874.0 162.5 L874.5 170.5 L875.0 170.0 L875.5 170.6 L876.0 170.8 L876.5 169.5 L877.0 170.9 L877.5 171.2 L878.0 171.4 L878.5 171.2 L879.0 171.7 L879.5 172.3 L880.0 171.1 L880.5 172.5 L880.5 235.5 L880.0 232.2 L879.5 235.1 L879.0 229.9 L878.5 235.2 L878.0 235.2 L877.5 235.2 L877.0 234.8 L876.5 235.4 L876.0 234.6 L875.5 235.4 L875.0 234.8 L874.5 235.2 L874.0 234.6 L873.5 234.7 L873.0 235.3 L872.5 235.1 L872.0 232.7 L871.5 232.9 L871.0 234.8 L870.5 235.5 L870.0 236.7 L869.5 237.7 L869.0 237.6 L868.5 239.4 L868.0 240.6 L867.5 242.6 L867.0 243.0 L866.5 245.4 L866.0 246.6 L865.5 247.2 L865.0 249.3 L864.5 251.2 L864.0 252.7 L863.5 254.6 L863.0 256.3 L862.5 258.3 L862.0 260.1 L861.5 262.6 L861.0 263.7 L860.5 265.6 L860.0 267.7 L859.5 269.3 L859.0 270.4 L858.5 272.0 L858.0 274.2 L857.5 275.7 L857.0 277.4 L856.5 278.7 L856.0 280.2 L855.5 281.9 L855.0 284.1 L854.5 285.1 L854.0 287.0 L853.5 288.5 L853.0 289.7 L852.5 291.7 L852.0 293.5 L851.5 294.9 L851.0 296.7 L850.5 297.5 L850.0 299.8 L849.5 301.2 L849.0 302.9 L848.5 304.4 L848.0 306.2 L847.5 307.0 L847.0 308.6 L846.5 310.8 L846.0 312.3 L845.5 312.9 L845.0 314.6 L844.5 315.7 L844.0 317.5 L843.5 318.4 L843.0 320.1 L842.5 321.3 L842.0 322.8 L841.5 323.3 L841.0 325.2 L840.5 325.3 L840.0 326.6 L839.5 327.3 L839.0 327.8 L838.5 328.5 L838.0 329.4 L837.5 329.7 L837.0 330.6 L836.5 331.5 L836.0 331.4 L835.5 332.0 L835.0 332.7 L834.5 332.6 L834.0 331.2 L833.5 330.9 L833.0 329.8 L832.5 329.6 L832.0 328.8 L831.5 328.5 L831.0 327.2 L830.5 327.1 L830.0 325.8 L829.5 325.9 L829.0 324.7 L828.5 323.8 L828.0 323.5 L827.5 323.0 L827.0 322.3 L826.5 322.3 L826.0 321.6 L825.5 321.2 L825.0 320.8 L824.5 320.2 L824.0 319.6 L823.5 318.3 L823.0 318.0 L822.5 317.4 L822.0 317.0 L821.5 316.4 L821.0 315.9 L820.5 315.0 L820.0 314.4 L819.5 314.1 L819.0 313.9 L818.5 313.4 L818.0 312.0 L817.5 311.6 L817.0 311.2 L816.5 310.6 L816.0 309.9 L815.5 309.2 L815.0 308.9 L814.5 307.6 L814.0 307.0 L813.5 307.1 L813.0 306.4 L812.5 305.5 L812.0 304.4 L811.5 304.4 L811.0 303.5 L810.5 301.6 L810.0 300.9 L809.5 300.7 L809.0 299.0 L808.5 298.5 L808.0 297.9 L807.5 296.2 L807.0 295.6 L806.5 294.6 L806.0 293.8 L805.5 293.4 L805.0 291.6 L804.5 290.6 L804.0 290.0 L803.5 288.9 L803.0 287.7 L802.5 286.6 L802.0 284.7 L801.5 284.5 L801.0 282.4 L800.5 281.3 L800.0 279.9 L799.5 278.9 L799.0 277.5 L798.5 276.9 L798.0 275.5 L797.5 273.3 L797.0 272.2 L796.5 270.1 L796.0 268.5 L795.5 265.8 L795.0 264.0 L794.5 262.1 L794.0 260.3 L793.5 258.9 L793.0 256.8 L792.5 254.8 L792.0 252.2 L791.5 249.9 L791.0 248.0 L790.5 246.3 L790.0 243.6 L789.5 241.9 L789.0 239.4 L788.5 238.2 L788.0 237.7 L787.5 233.1 L787.0 231.8 L786.5 232.6 L786.0 232.2 L785.5 235.3 L785.0 234.7 L784.5 230.7 L784.0 235.3 L783.5 235.2 L783.0 234.9 L782.5 235.0 L782.0 235.4 L781.5 234.6 L781.0 235.5 L780.5 231.6 L780.0 231.8 L779.5 228.9 L779.0 229.1 L778.5 234.7 L778.0 231.3 L777.5 235.3 L777.0 235.2 L776.5 234.7 L776.0 234.5 L775.5 235.2 L775.0 235.5 L774.5 236.6 L774.0 231.3 L773.5 237.8 L773.0 239.7 L772.5 240.8 L772.0 242.0 L771.5 243.4 L771.0 245.0 L770.5 245.7 L770.0 247.9 L769.5 248.5 L769.0 251.1 L768.5 252.7 L768.0 254.4 L767.5 255.7 L767.0 258.5 L766.5 259.5 L766.0 262.2 L765.5 263.6 L765.0 265.2 L764.5 267.3 L764.0 268.6 L763.5 269.7 L763.0 271.8 L762.5 273.4 L762.0 274.8 L761.5 276.7 L761.0 278.1 L760.5 279.8 L760.0 281.3 L759.5 282.9 L759.0 285.1 L758.5 286.6 L758.0 288.3 L757.5 289.3 L757.0 291.2 L756.5 292.7 L756.0 294.3 L755.5 295.3 L755.0 297.2 L754.5 298.4 L754.0 299.7 L753.5 301.5 L753.0 303.7 L752.5 305.2 L752.0 306.6 L751.5 307.9 L751.0 309.2 L750.5 310.8 L750.0 312.2 L749.5 313.2 L749.0 315.3 L748.5 316.1 L748.0 317.4 L747.5 318.7 L747.0 320.5 L746.5 320.9 L746.0 322.2 L745.5 323.7 L745.0 325.5 L744.5 325.5 L744.0 326.4 L743.5 326.9 L743.0 328.0 L742.5 328.8 L742.0 329.3 L741.5 329.5 L741.0 330.1 L740.5 330.7 L740.0 332.1 L739.5 332.2 L739.0 332.7 L738.5 332.6 L738.0 331.7 L737.5 330.7 L737.0 330.1 L736.5 329.8 L736.0 329.0 L735.5 327.7 L735.0 327.8 L734.5 326.5 L734.0 326.6 L733.5 325.8 L733.0 324.6 L732.5 323.9 L732.0 323.5 L731.5 322.4 L731.0 322.7 L730.5 321.7 L730.0 321.3 L729.5 320.1 L729.0 320.5 L728.5 320.0 L728.0 319.0 L727.5 318.6 L727.0 317.4 L726.5 317.3 L726.0 316.2 L725.5 315.9 L725.0 315.3 L724.5 315.1 L724.0 313.8 L723.5 313.7 L723.0 312.6 L722.5 312.0 L722.0 311.5 L721.5 311.1 L721.0 310.9 L720.5 309.4 L720.0 309.0 L719.5 308.8 L719.0 308.4 L718.5 307.1 L718.0 307.1 L717.5 306.2 L717.0 305.4 L716.5 304.5 L716.0 304.2 L715.5 302.4 L715.0 302.0 L714.5 300.6 L714.0 299.6 L713.5 299.4 L713.0 297.9 L712.5 297.3 L712.0 295.9 L711.5 295.7 L711.0 294.7 L710.5 293.6 L710.0 292.5 L709.5 291.2 L709.0 290.8 L708.5 289.7 L708.0 287.9 L707.5 286.4 L707.0 285.9 L706.5 284.6 L706.0 282.6 L705.5 281.7 L705.0 280.1 L704.5 279.7 L704.0 277.6 L703.5 276.8 L703.0 275.9 L702.5 273.6 L702.0 272.1 L701.5 270.0 L701.0 267.7 L700.5 266.0 L700.0 264.0 L699.5 262.2 L699.0 260.5 L698.5 258.1 L698.0 256.1 L697.5 254.3 L697.0 252.0 L696.5 249.4 L696.0 247.8 L695.5 245.4 L695.0 242.5 L694.5 240.7 L694.0 238.7 L693.5 237.2 L693.0 236.8 L692.5 237.0 L692.0 231.1 L691.5 229.8 L691.0 235.1 L690.5 232.7 L690.0 234.9 L689.5 235.0 L689.0 235.1 L688.5 234.6 L688.0 235.4 L687.5 234.7 L687.0 235.3 L686.5 234.7 L686.0 235.4 L685.5 235.2 L685.0 235.4 L684.5 235.1 L684.0 234.6 L683.5 235.0 L683.0 235.0 L682.5 230.7 L682.0 231.3 L681.5 231.0 L681.0 235.1 L680.5 235.7 L680.0 237.0 L679.5 233.4 L679.0 238.3 L678.5 240.0 L678.0 241.3 L677.5 242.3 L677.0 244.0 L676.5 245.0 L676.0 246.9 L675.5 247.8 L675.0 249.6 L674.5 251.5 L674.0 253.2 L673.5 254.8 L673.0 256.9 L672.5 258.7 L672.0 260.6 L671.5 262.7 L671.0 264.4 L670.5 266.0 L670.0 267.8 L669.5 269.4 L669.0 271.4 L668.5 273.0 L668.0 274.9 L667.5 275.8 L667.0 277.6 L666.5 279.6 L666.0 281.5 L665.5 282.9 L665.0 284.9 L664.5 286.5 L664.0 287.8 L663.5 289.1 L663.0 291.4 L662.5 292.5 L662.0 293.8 L661.5 296.2 L661.0 297.7 L660.5 298.7 L660.0 300.6 L659.5 301.7 L659.0 304.0 L658.5 304.8 L658.0 307.0 L657.5 308.2 L657.0 310.1 L656.5 311.3 L656.0 312.8 L655.5 314.2 L655.0 315.3 L654.5 316.5 L654.0 318.5 L653.5 320.0 L653.0 320.6 L652.5 322.0 L652.0 323.2 L651.5 325.0 L651.0 325.4 L650.5 326.4 L650.0 326.7 L649.5 328.0 L649.0 328.6 L648.5 328.9 L648.0 329.8 L647.5 330.0 L647.0 330.5 L646.5 331.7 L646.0 332.4 L645.5 333.0 L645.0 332.7 L644.5 331.2 L644.0 330.8 L643.5 330.4 L643.0 329.8 L642.5 328.9 L642.0 327.8 L641.5 327.2 L641.0 326.6 L640.5 326.2 L640.0 325.2 L639.5 324.4 L639.0 323.8 L638.5 324.0 L638.0 323.4 L637.5 322.6 L637.0 321.5 L636.5 321.6 L636.0 320.3 L635.5 319.9 L635.0 319.8 L634.5 318.8 L634.0 318.0 L633.5 317.6 L633.0 317.0 L632.5 317.0 L632.0 315.7 L631.5 315.5 L631.0 314.6 L630.5 314.2 L630.0 313.5 L629.5 312.8 L629.0 312.8 L628.5 312.3 L628.0 311.0 L627.5 310.5 L627.0 310.5 L626.5 309.8 L626.0 308.5 L625.5 308.5 L625.0 307.8 L624.5 306.4 L624.0 306.4 L623.5 306.1 L623.0 305.4 L622.5 303.9 L622.0 302.9 L621.5 302.5 L621.0 301.0 L620.5 300.1 L620.0 299.1 L619.5 297.9 L619.0 297.7 L618.5 296.8 L618.0 295.2 L617.5 294.2 L617.0 293.3 L616.5 292.6 L616.0 292.3 L615.5 291.0 L615.0 289.9 L614.5 288.3 L614.0 287.4 L613.5 285.9 L613.0 285.0 L612.5 283.8 L612.0 281.8 L611.5 281.5 L611.0 279.9 L610.5 278.2 L610.0 277.3 L609.5 275.8 L609.0 274.6 L608.5 273.2 L608.0 271.0 L607.5 268.5 L607.0 267.3 L606.5 264.9 L606.0 263.5 L605.5 261.1 L605.0 259.5 L604.5 257.4 L604.0 255.8 L603.5 253.3 L603.0 250.8 L602.5 249.1 L602.0 246.3 L601.5 244.6 L601.0 241.9 L600.5 239.1 L600.0 238.0 L599.5 237.1 L599.0 233.4 L598.5 236.4 L598.0 236.2 L597.5 235.0 L597.0 234.9 L596.5 235.1 L596.0 229.9 L595.5 230.0 L595.0 231.0 L594.5 231.1 L594.0 235.3 L593.5 232.5 L593.0 232.0 L592.5 234.8 L592.0 234.7 L591.5 229.5 L591.0 235.0 L590.5 234.6 L590.0 228.9 L589.5 229.5 L589.0 235.3 L588.5 234.6 L588.0 234.5 L587.5 234.6 L587.0 235.1 L586.5 235.9 L586.0 232.2 L585.5 232.9 L585.0 238.2 L584.5 239.8 L584.0 241.3 L583.5 243.1 L583.0 243.7 L582.5 245.2 L582.0 246.9 L581.5 248.7 L581.0 250.3 L580.5 251.4 L580.0 254.0 L579.5 255.1 L579.0 257.7 L578.5 259.5 L578.0 261.6 L577.5 263.2 L577.0 265.1 L576.5 266.7 L576.0 268.1 L575.5 269.7 L575.0 271.9 L574.5 273.1 L574.0 274.8 L573.5 276.6 L573.0 278.6 L572.5 279.4 L572.0 281.3 L571.5 282.8 L571.0 284.6 L570.5 286.6 L570.0 288.3 L569.5 289.9 L569.0 291.2 L568.5 292.3 L568.0 294.2 L567.5 295.6 L567.0 297.2 L566.5 298.5 L566.0 300.4 L565.5 302.0 L565.0 303.6 L564.5 305.5 L564.0 306.7 L563.5 308.1 L563.0 310.4 L562.5 311.0 L562.0 313.3 L561.5 314.5 L561.0 315.4 L560.5 316.4 L560.0 317.8 L559.5 319.8 L559.0 321.1 L558.5 322.3 L558.0 323.2 L557.5 324.5 L557.0 325.5 L556.5 326.1 L556.0 327.1 L555.5 327.0 L555.0 327.8 L554.5 329.1 L554.0 329.5 L553.5 330.6 L553.0 330.9 L552.5 332.0 L552.0 331.9 L551.5 332.6 L551.0 332.8 L550.5 331.8 L550.0 330.7 L549.5 330.2 L549.0 330.0 L548.5 329.2 L548.0 328.8 L547.5 327.7 L547.0 326.9 L546.5 325.9 L546.0 326.2 L545.5 325.3 L545.0 324.4 L544.5 323.7 L544.0 322.9 L543.5 322.3 L543.0 322.1 L542.5 321.2 L542.0 321.0 L541.5 319.9 L541.0 319.4 L540.5 319.1 L540.0 318.7 L539.5 317.9 L539.0 317.8 L538.5 317.1 L538.0 316.7 L537.5 315.6 L537.0 315.3 L536.5 315.1 L536.0 314.1 L535.5 313.0 L535.0 312.9 L534.5 312.1 L534.0 311.7 L533.5 311.2 L533.0 309.9 L532.5 310.2 L532.0 309.4 L531.5 308.5 L531.0 307.9 L530.5 307.5 L530.0 306.9 L529.5 305.7 L529.0 305.8 L528.5 304.5 L528.0 304.0 L527.5 302.5 L527.0 301.7 L526.5 300.9 L526.0 300.3 L525.5 299.0 L525.0 298.6 L524.5 297.5 L524.0 295.8 L523.5 295.7 L523.0 294.7 L522.5 293.6 L522.0 292.4 L521.5 291.4 L521.0 291.0 L520.5 290.0 L520.0 288.9 L519.5 287.6 L519.0 285.9 L518.5 285.1 L518.0 283.5 L517.5 282.7 L517.0 280.8 L516.5 279.8 L516.0 278.8 L515.5 276.8 L515.0 276.4 L514.5 274.8 L514.0 272.8 L513.5 271.1 L513.0 269.1 L512.5 266.9 L512.0 265.4 L511.5 263.3 L511.0 261.3 L510.5 259.2 L510.0 258.1 L509.5 255.2 L509.0 253.5 L508.5 251.1 L508.0 248.6 L507.5 246.9 L507.0 244.4 L506.5 242.2 L506.0 239.5 L505.5 238.2 L505.0 237.0 L504.5 236.5 L504.0 236.3 L503.5 236.2 L503.0 235.5 L502.5 234.8 L502.0 231.8 L501.5 231.7 L501.0 235.3 L500.5 234.8 L500.0 235.0 L499.5 235.4 L499.0 231.6 L498.5 231.3 L498.0 235.2 L497.5 234.8 L497.0 235.0 L496.5 234.6 L496.0 234.9 L495.5 230.0 L495.0 232.5 L494.5 232.3 L494.0 234.8 L493.5 235.0 L493.0 234.7 L492.5 235.3 L492.0 230.6 L491.5 231.1 L491.0 232.3 L490.5 233.7 L490.0 238.9 L489.5 240.9 L489.0 241.8 L488.5 243.4 L488.0 244.6 L487.5 245.9 L487.0 247.9 L486.5 249.3 L486.0 250.2 L485.5 252.2 L485.0 254.6 L484.5 256.5 L484.0 258.6 L483.5 260.3 L483.0 262.3 L482.5 263.6 L482.0 265.4 L481.5 266.7 L481.0 268.9 L480.5 270.8 L480.0 271.6 L479.5 273.2 L479.0 275.7 L478.5 276.7 L478.0 278.5 L477.5 279.9 L477.0 281.4 L476.5 283.6 L476.0 284.7 L475.5 287.1 L475.0 287.9 L474.5 290.1 L474.0 291.0 L473.5 293.1 L473.0 294.1 L472.5 295.9 L472.0 297.8 L471.5 299.2 L471.0 300.4 L470.5 302.1 L470.0 304.2 L469.5 305.0 L469.0 307.3 L468.5 308.8 L468.0 309.9 L467.5 311.7 L467.0 313.1 L466.5 313.8 L466.0 315.1 L465.5 317.0 L465.0 317.9 L464.5 319.2 L464.0 320.5 L463.5 321.7 L463.0 323.3 L462.5 324.1 L462.0 325.7 L461.5 325.6 L461.0 327.1 L460.5 327.8 L460.0 328.1 L459.5 328.6 L459.0 329.4 L458.5 329.6 L458.0 331.1 L457.5 331.9 L457.0 331.9 L456.5 332.5 L456.0 332.1 L455.5 331.7 L455.0 331.5 L454.5 330.1 L454.0 330.0 L453.5 329.3 L453.0 328.8 L452.5 327.4 L452.0 326.7 L451.5 326.8 L451.0 325.2 L450.5 325.3 L450.0 324.2 L449.5 323.2 L449.0 323.3 L448.5 322.7 L448.0 321.5 L447.5 321.2 L447.0 320.4 L446.5 319.9 L446.0 319.3 L445.5 318.8 L445.0 318.6 L444.5 317.9 L444.0 317.6 L443.5 316.8 L443.0 316.4 L442.5 315.8 L442.0 314.9 L441.5 314.9 L441.0 314.1 L440.5 313.5 L440.0 312.4 L439.5 312.3 L439.0 311.8 L438.5 310.5 L438.0 310.3 L437.5 309.5 L437.0 309.0 L436.5 308.4 L436.0 307.4 L435.5 306.6 L435.0 306.0 L434.5 305.9 L434.0 305.2 L433.5 303.5 L433.0 303.4 L432.5 301.7 L432.0 301.0 L431.5 300.5 L431.0 299.3 L430.5 298.0 L430.0 297.8 L429.5 295.9 L429.0 295.0 L428.5 294.4 L428.0 293.1 L427.5 292.4 L427.0 292.1 L426.5 290.9 L426.0 289.8 L425.5 287.9 L425.0 287.1 L424.5 286.3 L424.0 284.2 L423.5 283.1 L423.0 281.7 L422.5 280.9 L422.0 279.6 L421.5 278.0 L421.0 276.6 L420.5 275.3 L420.0 274.4 L419.5 271.9 L419.0 270.4 L418.5 268.6 L418.0 266.0 L417.5 264.4 L417.0 262.7 L416.5 260.9 L416.0 259.1 L415.5 257.1 L415.0 254.7 L414.5 252.3 L414.0 250.7 L413.5 248.0 L413.0 245.7 L412.5 243.5 L412.0 240.7 L411.5 239.2 L411.0 237.8 L410.5 236.9 L410.0 232.0 L409.5 235.8 L409.0 235.3 L408.5 229.7 L408.0 229.4 L407.5 234.5 L407.0 231.0 L406.5 231.3 L406.0 235.2 L405.5 234.8 L405.0 233.1 L404.5 234.9 L404.0 231.9 L403.5 231.9 L403.0 231.7 L402.5 232.3 L402.0 235.1 L401.5 231.3 L401.0 235.4 L400.5 231.6 L400.0 231.6 L399.5 234.7 L399.0 231.0 L398.5 231.5 L398.0 233.0 L397.5 233.3 L397.0 235.3 L396.5 238.4 L396.0 239.9 L395.5 240.5 L395.0 242.6 L394.5 243.4 L394.0 244.8 L393.5 246.3 L393.0 248.2 L392.5 249.3 L392.0 251.2 L391.5 253.1 L391.0 255.2 L390.5 256.9 L390.0 259.2 L389.5 260.5 L389.0 262.3 L388.5 264.8 L388.0 265.7 L387.5 268.1 L387.0 269.2 L386.5 271.4 L386.0 272.9 L385.5 274.2 L385.0 276.5 L384.5 277.6 L384.0 279.0 L383.5 280.7 L383.0 283.1 L382.5 284.0 L382.0 286.0 L381.5 288.2 L381.0 289.3 L380.5 290.9 L380.0 292.8 L379.5 293.8 L379.0 295.3 L378.5 297.1 L378.0 298.3 L377.5 300.3 L377.0 301.9 L376.5 303.1 L376.0 305.6 L375.5 306.6 L375.0 308.9 L374.5 310.3 L374.0 311.4 L373.5 312.5 L373.0 314.7 L372.5 315.4 L372.0 317.3 L371.5 318.1 L371.0 319.2 L370.5 321.3 L370.0 322.4 L369.5 323.2 L369.0 324.6 L368.5 325.3 L368.0 326.5 L367.5 326.6 L367.0 327.5 L366.5 327.8 L366.0 329.4 L365.5 329.4 L365.0 330.5 L364.5 330.5 L364.0 331.9 L363.5 332.1 L363.0 333.0 L362.5 332.5 L362.0 331.6 L361.5 330.5 L361.0 330.0 L360.5 329.7 L360.0 328.5 L359.5 328.5 L359.0 327.4 L358.5 326.8 L358.0 326.7 L357.5 325.9 L357.0 325.0 L356.5 324.5 L356.0 323.9 L355.5 323.3 L355.0 322.2 L354.5 321.8 L354.0 321.8 L353.5 321.3 L353.0 319.8 L352.5 319.8 L352.0 319.4 L351.5 318.2 L351.0 318.5 L350.5 317.5 L350.0 316.8 L349.5 316.2 L349.0 316.0 L348.5 315.0 L348.0 314.6 L347.5 314.0 L347.0 313.6 L346.5 312.8 L346.0 312.7 L345.5 311.5 L345.0 310.7 L344.5 310.1 L344.0 309.5 L343.5 309.7 L343.0 308.3 L342.5 308.4 L342.0 307.0 L341.5 306.7 L341.0 306.0 L340.5 305.3 L340.0 305.1 L339.5 303.8 L339.0 302.7 L338.5 301.7 L338.0 301.3 L337.5 300.2 L337.0 298.9 L336.5 298.5 L336.0 297.9 L335.5 296.9 L335.0 296.1 L334.5 294.4 L334.0 293.6 L333.5 293.3 L333.0 292.3 L332.5 290.6 L332.0 290.0 L331.5 289.0 L331.0 287.6 L330.5 286.2 L330.0 285.4 L329.5 283.6 L329.0 283.0 L328.5 281.8 L328.0 280.1 L327.5 278.8 L327.0 277.8 L326.5 276.1 L326.0 275.7 L325.5 273.9 L325.0 271.8 L324.5 269.5 L324.0 268.1 L323.5 266.3 L323.0 264.7 L322.5 262.2 L322.0 261.0 L321.5 258.6 L321.0 257.2 L320.5 254.4 L320.0 252.1 L319.5 250.3 L319.0 248.6 L318.5 245.5 L318.0 243.2 L317.5 241.6 L317.0 239.7 L316.5 237.5 L316.0 236.9 L315.5 235.0 L315.0 235.8 L314.5 235.3 L314.0 230.4 L313.5 235.1 L313.0 235.1 L312.5 235.5 L312.0 235.1 L311.5 235.3 L311.0 234.9 L310.5 235.0 L310.0 234.5 L309.5 235.0 L309.0 234.6 L308.5 231.8 L308.0 235.4 L307.5 230.9 L307.0 230.8 L306.5 230.2 L306.0 233.3 L305.5 231.2 L305.0 234.5 L304.5 234.8 L304.0 234.9 L303.5 233.1 L303.0 233.4 L302.5 234.0 L302.0 237.2 L301.5 238.0 L301.0 239.1 L300.5 241.0 L300.0 241.8 L299.5 243.1 L299.0 244.5 L298.5 246.6 L298.0 247.7 L297.5 248.8 L297.0 250.6 L296.5 252.8 L296.0 254.5 L295.5 256.3 L295.0 257.7 L294.5 259.9 L294.0 262.0 L293.5 263.6 L293.0 265.0 L292.5 267.3 L292.0 268.0 L291.5 270.2 L291.0 271.9 L290.5 273.7 L290.0 275.3 L289.5 276.2 L289.0 277.9 L288.5 280.3 L288.0 281.3 L287.5 283.4 L287.0 285.0 L286.5 286.3 L286.0 288.1 L285.5 289.6 L285.0 291.2 L284.5 292.5 L284.0 294.4 L283.5 295.3 L283.0 296.8 L282.5 298.5 L282.0 300.7 L281.5 301.7 L281.0 303.5 L280.5 304.6 L280.0 305.9 L279.5 307.9 L279.0 309.7 L278.5 311.3 L278.0 312.9 L277.5 313.4 L277.0 315.3 L276.5 316.5 L276.0 317.4 L275.5 319.0 L275.0 320.6 L274.5 320.9 L274.0 322.3 L273.5 324.4 L273.0 324.8 L272.5 325.5 L272.0 326.0 L271.5 327.1 L271.0 328.2 L270.5 328.0 L270.0 328.9 L269.5 329.4 L269.0 330.7 L268.5 330.9 L268.0 331.3 L267.5 331.9 L267.0 332.7 L266.5 331.9 L266.0 331.8 L265.5 330.9 L265.0 330.6 L264.5 329.9 L264.0 328.5 L263.5 328.3 L263.0 327.7 L262.5 326.9 L262.0 326.1 L261.5 325.3 L261.0 324.8 L260.5 323.9 L260.0 323.2 L259.5 323.4 L259.0 322.3 L258.5 322.2 L258.0 321.7 L257.5 320.7 L257.0 320.5 L256.5 319.4 L256.0 319.3 L255.5 318.1 L255.0 317.9 L254.5 317.5 L254.0 316.6 L253.5 316.7 L253.0 315.9 L252.5 315.3 L252.0 314.9 L251.5 313.8 L251.0 313.3 L250.5 312.4 L250.0 312.1 L249.5 311.5 L249.0 310.7 L248.5 310.4 L248.0 309.1 L247.5 308.7 L247.0 308.6 L246.5 307.7 L246.0 307.2 L245.5 306.2 L245.0 305.8 L244.5 305.1 L244.0 304.0 L243.5 302.9 L243.0 302.2 L242.5 301.5 L242.0 300.8 L241.5 299.2 L241.0 298.4 L240.5 297.2 L240.0 296.6 L239.5 296.3 L239.0 294.6 L238.5 294.3 L238.0 292.6 L237.5 292.0 L237.0 291.1 L236.5 290.1 L236.0 288.6 L235.5 287.4 Z" fill="#d6d9e9"/><path d="M235.0 228.0 L236.0 228.3 L237.0 228.5 L238.0 227.9 L239.0 228.9 L240.0 229.0 L241.0 231.2 L242.0 233.5 L243.0 235.6 L244.0 238.8 L245.0 241.1 L246.0 242.8 L247.0 245.0 L248.0 246.2 L248.9 248.3 L249.9 250.3 L250.9 251.2 L251.9 253.8 L252.9 254.9 L253.8 256.7 L254.8 258.0 L255.8 258.6 L256.9 259.5 L257.9 261.4 L258.9 261.7 L259.9 262.8 L261.0 264.6 L262.0 265.0 L263.0 265.5 L264.0 266.0 L265.0 266.9 L266.0 268.0 L267.0 269.6 L268.0 269.7 L269.0 270.8 L270.0 271.4 L271.1 263.4 L272.3 254.3 L273.6 260.8 L274.8 268.5 L275.9 266.2 L276.9 264.2 L278.0 262.0 L279.1 256.7 L280.2 250.7 L281.3 245.7 L282.4 240.0 L283.3 235.6 L284.2 230.9 L285.1 229.1 L286.0 222.0 L287.0 218.5 L288.0 211.3 L289.0 205.0 L290.5 196.0 L292.0 188.0 L293.0 194.0 L294.5 184.0 L296.0 175.0 L297.6 160.5 L298.5 180.0 L299.2 197.0 L300.2 167.0 L301.5 178.0 L302.5 172.0 L304.0 183.0 L305.5 168.0 L307.0 179.0 L308.5 172.0 L310.0 176.0 L311.5 170.0 L313.0 175.0 L314.5 168.0 L316.0 178.0 L317.5 184.0 L318.5 185.1 L319.4 190.2 L320.4 190.2 L321.3 193.3 L322.3 199.4 L323.2 198.4 L324.2 205.8 L325.2 203.6 L326.1 210.7 L327.1 213.5 L328.0 216.1 L329.0 217.5 L329.9 221.0 L330.8 219.7 L331.8 224.8 L332.7 227.2 L333.6 226.2 L334.5 229.7 L335.4 230.5 L336.3 233.5 L337.2 235.3 L338.2 236.4 L339.1 238.8 L340.0 241.0 L340.9 242.0 L341.9 243.6 L342.8 244.5 L343.7 245.7 L344.6 246.5 L345.6 247.6 L346.5 248.8 L347.4 249.8 L348.3 250.5 L349.3 251.7 L350.2 252.4 L351.1 254.4 L352.0 255.4 L353.0 256.1 L353.9 256.7 L354.8 258.7 L355.7 259.9 L356.7 260.4 L357.6 262.2 L358.5 262.6 L359.4 264.4 L360.4 264.9 L361.3 265.5 L362.2 266.9 L363.1 268.0 L364.1 269.9 L365.0 270.4 L366.0 269.2 L366.9 267.1 L367.9 264.7 L368.9 262.8 L369.9 259.3 L370.9 256.4 L371.9 253.2 L373.0 250.5 L374.0 247.7 L375.0 244.0 L376.0 238.9 L377.0 234.4 L378.0 230.0 L379.0 227.3 L380.0 221.1 L381.0 218.0 L382.0 212.0 L383.0 211.9 L384.0 207.4 L385.0 208.0 L386.0 206.9 L387.0 201.0 L388.0 198.0 L389.0 192.0 L390.0 190.0 L391.0 185.3 L392.0 185.0 L393.5 190.0 L395.0 178.0 L396.5 183.0 L398.0 186.0 L399.0 178.0 L400.0 182.0 L401.0 177.0 L402.0 186.0 L403.0 184.3 L404.0 180.0 L405.0 175.2 L406.0 170.0 L407.0 166.0 L408.0 175.4 L409.0 190.0 L410.0 193.8 L411.0 196.6 L412.0 196.0 L413.0 196.2 L414.0 202.6 L415.0 201.8 L416.0 206.4 L417.0 210.8 L418.0 213.0 L419.0 212.6 L420.0 216.0 L420.9 217.8 L421.8 218.7 L422.7 221.9 L423.6 224.1 L424.5 220.5 L425.5 223.1 L426.4 225.4 L427.3 229.8 L428.2 228.5 L429.1 231.1 L430.0 232.0 L431.0 233.4 L432.0 233.4 L433.0 234.4 L434.0 235.6 L435.0 236.0 L436.0 237.1 L437.0 237.6 L438.0 238.0 L439.0 239.3 L440.0 240.8 L441.0 242.3 L442.0 243.0 L443.0 243.7 L443.9 245.5 L444.9 246.9 L445.8 248.2 L446.8 248.6 L447.8 263.4 L448.7 277.5 L449.7 292.6 L450.6 306.5 L451.6 309.5 L452.5 312.2 L453.4 310.6 L454.4 310.1 L455.3 308.9 L456.3 308.3 L457.2 307.3 L458.2 306.4 L459.1 304.1 L460.1 303.8 L461.0 302.7 L461.9 301.6 L462.9 299.5 L463.9 298.8 L464.8 297.0 L465.8 297.1 L466.7 296.4 L467.7 297.3 L468.6 296.2 L469.6 295.8 L470.6 296.4 L471.5 296.2 L472.5 296.8 L473.4 296.7 L474.4 296.0 L475.3 294.6 L476.3 291.8 L477.2 290.8 L478.2 289.0 L479.1 287.0 L480.1 284.7 L481.1 283.5 L482.0 281.8 L482.9 274.2 L483.9 266.6 L484.9 261.5 L485.8 255.2 L486.7 253.4 L487.7 251.4 L488.6 248.1 L489.6 246.0 L490.5 244.4 L491.5 242.3 L492.4 240.0 L493.4 227.8 L494.3 216.2 L495.3 204.2 L496.2 214.0 L497.2 218.1 L498.1 226.0 L499.1 224.6 L500.0 216.5 L500.9 212.7 L501.9 211.8 L502.9 227.4 L503.8 241.3 L505.2 295.1 L506.3 290.7 L507.3 287.5 L508.4 283.8 L509.4 280.2 L510.5 276.0 L511.4 277.7 L512.4 279.6 L513.3 281.3 L514.2 282.9 L515.2 284.3 L516.1 286.3 L517.1 287.8 L518.0 289.4 L519.0 289.3 L519.9 289.6 L520.9 290.4 L521.8 291.1 L522.8 290.6 L523.8 291.6 L524.7 291.9 L525.7 292.2 L526.6 292.9 L527.6 292.7 L528.5 292.3 L529.5 293.2 L530.5 293.6 L531.4 294.1 L532.4 293.7 L533.3 294.2 L534.3 295.5 L535.2 295.9 L536.2 295.0 L537.1 295.6 L538.1 296.0 L539.0 296.4 L540.0 297.0 L540.9 297.8 L541.9 298.6 L542.8 299.0 L543.8 299.6 L544.7 300.8 L545.7 299.3 L546.6 298.3 L547.6 298.0 L548.5 299.0 L549.5 299.9 L550.5 299.9 L551.4 301.0 L552.3 302.6 L553.3 302.7 L554.2 300.4 L555.2 297.1 L556.1 293.7 L557.1 291.3 L558.0 290.4 L559.0 289.1 L560.0 286.9 L560.9 285.6 L561.8 284.3 L562.8 283.7 L563.8 275.8 L564.7 267.5 L565.7 259.0 L566.6 252.2 L567.6 246.9 L568.5 240.0 L569.5 236.9 L570.4 232.4 L571.3 229.7 L572.3 226.0 L573.2 218.2 L574.2 212.7 L575.1 204.4 L576.1 196.7 L577.0 191.8 L578.0 208.5 L579.0 222.0 L580.0 216.4 L580.9 207.0 L581.8 205.5 L582.8 208.6 L583.7 208.5 L584.7 209.7 L585.6 212.7 L586.6 207.0 L587.5 197.1 L588.5 188.0 L589.5 202.1 L590.4 216.5 L591.3 203.9 L592.3 190.0 L593.2 199.0 L594.2 206.5 L595.1 212.7 L596.1 206.0 L597.0 203.0 L598.0 195.6 L598.9 199.2 L599.9 208.5 L600.8 214.6 L601.8 217.5 L602.7 222.4 L603.6 225.2 L604.6 230.2 L605.5 232.9 L606.5 237.8 L607.4 240.8 L608.4 245.0 L609.4 246.4 L610.3 247.7 L611.2 249.5 L612.2 250.9 L613.1 253.7 L614.1 254.7 L615.0 256.3 L616.0 257.5 L616.9 259.2 L617.9 261.4 L618.8 262.7 L619.8 264.7 L620.8 265.3 L621.7 267.5 L622.7 268.2 L623.6 270.4 L624.6 271.7 L625.5 272.4 L626.5 274.0 L627.5 275.1 L628.4 276.4 L629.4 277.1 L630.3 279.1 L631.3 280.0 L632.2 282.3 L633.2 283.9 L634.1 285.2 L635.1 286.6 L636.0 289.5 L637.0 290.8 L637.9 292.6 L638.9 294.2 L639.9 294.2 L641.0 295.7 L642.0 295.2 L643.0 296.0 L644.0 293.8 L645.0 292.0 L646.5 297.0 L647.5 297.3 L648.4 298.0 L649.4 295.5 L650.3 291.2 L651.2 289.2 L652.2 285.6 L653.2 283.7 L654.1 281.5 L655.0 279.4 L656.0 277.4 L657.0 274.4 L657.9 272.2 L658.8 270.0 L659.8 268.5 L660.8 263.6 L661.7 258.4 L662.6 254.6 L663.6 249.5 L664.5 244.2 L665.5 240.0 L666.8 230.4 L668.0 222.0 L669.1 216.1 L670.1 210.7 L671.2 203.2 L673.0 212.0 L674.0 204.8 L675.0 196.0 L676.5 206.0 L677.6 199.0 L678.8 191.8 L680.2 204.0 L681.6 210.8 L682.5 205.0 L683.5 195.0 L684.5 193.4 L685.4 187.0 L686.8 200.0 L688.3 207.0 L690.0 198.0 L691.0 211.7 L692.1 226.0 L693.0 229.7 L694.0 232.0 L695.0 235.4 L695.9 238.9 L696.8 241.4 L697.8 245.0 L698.9 250.3 L700.0 254.3 L700.9 257.2 L701.9 259.5 L702.8 261.3 L703.8 263.5 L704.7 265.7 L705.7 268.3 L706.6 271.2 L707.6 272.6 L708.5 275.1 L709.5 277.7 L710.4 280.0 L711.4 282.8 L712.3 285.0 L713.3 287.0 L714.2 287.4 L715.2 288.9 L716.1 291.4 L717.1 292.7 L718.0 293.7 L719.0 295.2 L719.9 296.4 L720.9 298.5 L721.8 300.5 L722.8 300.9 L723.7 302.7 L724.7 303.9 L725.6 306.1 L726.6 307.5 L727.5 308.2 L728.5 309.8 L729.4 311.1 L730.3 313.3 L731.2 314.6 L732.2 315.1 L733.1 316.7 L734.0 317.4 L734.9 319.0 L735.9 320.8 L736.8 321.8 L737.7 322.4 L738.7 322.8 L739.6 324.3 L740.5 325.3 L741.4 326.1 L742.4 325.8 L743.3 327.4 L744.2 328.4 L745.1 327.9 L746.1 329.5 L747.0 330.0 L748.0 328.5 L749.0 326.3 L750.1 324.4 L751.1 321.5 L752.1 319.8 L753.1 307.4 L754.2 293.6 L755.2 281.0 L756.2 276.9 L757.3 273.6 L758.3 270.7 L759.2 267.6 L760.1 264.7 L761.0 262.0 L762.2 258.9 L763.4 256.4 L765.0 246.0 L766.0 248.0 L767.0 250.0 L768.2 243.0 L769.5 236.0 L771.0 242.0 L772.0 235.5 L773.0 230.0 L774.0 234.1 L775.0 238.0 L775.9 233.2 L776.8 228.3 L777.7 223.6 L779.0 232.0 L780.0 229.0 L781.0 226.0 L781.8 238.0 L783.0 228.0 L784.0 229.2 L784.9 225.7 L786.5 236.0 L787.7 238.6 L788.8 239.9 L790.0 242.0 L791.0 245.1 L792.0 249.1 L793.0 252.9 L794.1 256.9 L795.1 260.4 L796.1 264.5 L797.1 271.9 L798.2 279.2 L799.2 287.5 L800.2 295.2 L801.1 296.1 L802.1 296.7 L803.0 298.0 L804.0 299.8 L805.0 302.0 L806.0 303.0 L807.0 302.1 L808.0 300.0 L809.2 302.5 L810.4 305.4 L811.7 308.1 L813.0 312.0 L813.9 313.3 L814.8 314.2 L815.7 316.3 L816.6 317.7 L818.0 314.0 L818.9 315.6 L819.9 316.9 L820.8 318.1 L821.8 320.2 L822.7 321.8 L823.8 322.8 L824.9 324.6 L826.0 325.0 L827.0 326.4 L828.0 326.5 L828.9 328.4 L829.9 329.2 L830.9 330.0 L831.9 329.9 L833.0 330.7 L834.0 331.9 L835.0 332.0 L836.0 331.6 L837.0 332.8 L838.0 332.7 L839.0 333.0 L840.0 329.9 L841.0 327.4 L842.1 324.8 L843.1 321.8 L844.1 318.7 L845.2 315.2 L846.2 311.3 L847.2 307.5 L848.2 291.4 L849.3 274.8 L850.3 262.5 L851.4 251.8 L852.4 240.0 L853.4 214.0 L854.5 226.5 L855.5 236.0 L857.0 222.0 L858.5 250.0 L860.0 230.0 L861.0 225.9 L862.0 220.0 L863.0 221.0 L864.0 226.0 L865.0 219.2 L866.0 214.0 L867.0 217.4 L868.0 222.0 L869.0 221.2 L870.0 216.0 L871.0 217.5 L872.0 221.0 L873.0 216.4 L874.0 217.0 L875.0 221.5 L876.0 222.0 L877.0 221.4 L878.0 219.0 L879.0 220.2 L880.0 220.8 L881.0 220.0" stroke="#3446a2" stroke-width="0.8" fill="none" stroke-linejoin="round"/></g></svg>
<div style="position:absolute;left:234.70px;top:150.40px;width:0.90px;height:183.00px;background:#5b6cb8"></div>
<div style="position:absolute;left:235.50px;top:332.90px;width:644.50px;height:0.80px;background:#e2e5f0"></div>
<div class="t" style="left:224.00px;top:162.17px;font-size:5px;color:#3a4a9a;transform:scaleX(1.0667);transform-origin:0 0;">105</div>
<div class="t" style="left:224.00px;top:183.77px;font-size:5px;color:#3a4a9a;transform:scaleX(1.0667);transform-origin:0 0;">100</div>
<div class="t" style="left:226.80px;top:205.37px;font-size:5px;color:#3a4a9a;transform:scaleX(1.0966);transform-origin:0 0;">95</div>
<div class="t" style="left:226.80px;top:226.97px;font-size:5px;color:#3a4a9a;transform:scaleX(1.0966);transform-origin:0 0;">90</div>
<div class="t" style="left:226.80px;top:248.57px;font-size:5px;color:#3a4a9a;transform:scaleX(1.0966);transform-origin:0 0;">85</div>
<div class="t" style="left:226.80px;top:270.17px;font-size:5px;color:#3a4a9a;transform:scaleX(1.0966);transform-origin:0 0;">80</div>
<div class="t" style="left:226.80px;top:291.77px;font-size:5px;color:#3a4a9a;transform:scaleX(1.0966);transform-origin:0 0;">75</div>
<div class="t" style="left:226.80px;top:313.37px;font-size:5px;color:#3a4a9a;transform:scaleX(1.0966);transform-origin:0 0;">70</div>
<div class="t" style="left:850.00px;top:152.57px;font-size:5px;color:#444;font-family:'Liberation Mono',monospace;transform:scaleX(0.8869);transform-origin:0 0;">(Lane 1)</div>
<div class="t" style="left:266.80px;top:339.00px;font-size:5.2px;color:#444;transform:scaleX(1.0721);transform-origin:0 0;">12:00 pm</div>
<div class="t" style="left:317.10px;top:339.00px;font-size:5.2px;color:#444;transform:scaleX(1.0332);transform-origin:0 0;">Aug 28</div>
<div class="t" style="left:361.20px;top:339.00px;font-size:5.2px;color:#444;transform:scaleX(1.0721);transform-origin:0 0;">12:00 pm</div>
<div class="t" style="left:411.50px;top:339.00px;font-size:5.2px;color:#444;transform:scaleX(1.0332);transform-origin:0 0;">Aug 29</div>
<div class="t" style="left:455.60px;top:339.00px;font-size:5.2px;color:#444;transform:scaleX(1.0721);transform-origin:0 0;">12:00 pm</div>
<div class="t" style="left:505.90px;top:339.00px;font-size:5.2px;color:#444;transform:scaleX(1.0332);transform-origin:0 0;">Aug 30</div>
<div class="t" style="left:550.00px;top:339.00px;font-size:5.2px;color:#444;transform:scaleX(1.0721);transform-origin:0 0;">12:00 pm</div>
<div class="t" style="left:600.30px;top:339.00px;font-size:5.2px;color:#444;transform:scaleX(1.0332);transform-origin:0 0;">Aug 31</div>
<div class="t" style="left:644.40px;top:339.00px;font-size:5.2px;color:#444;transform:scaleX(1.0721);transform-origin:0 0;">12:00 pm</div>
<div class="t" style="left:696.70px;top:339.00px;font-size:5.2px;color:#444;transform:scaleX(0.9585);transform-origin:0 0;">Sep 1</div>
<div class="t" style="left:738.80px;top:339.00px;font-size:5.2px;color:#444;transform:scaleX(1.0721);transform-origin:0 0;">12:00 pm</div>
<div class="t" style="left:791.10px;top:339.00px;font-size:5.2px;color:#444;transform:scaleX(0.9585);transform-origin:0 0;">Sep 2</div>
<div class="t" style="left:833.20px;top:339.00px;font-size:5.2px;color:#444;transform:scaleX(1.0721);transform-origin:0 0;">12:00 pm</div>
<svg style="left:227.00px;top:345.80px;" width="6" height="8" viewBox="0 0 6 8"><path d="M3 0 V5.5 M0.6 3.3 L3 6.8 L5.4 3.3" stroke="#007960" stroke-width="1.5" fill="none"/></svg>
<div class="t" style="left:235.60px;top:348.28px;font-size:5.1px;color:#007960;-webkit-text-stroke:0.12px #007960;transform:scaleX(0.9563);transform-origin:0 0;">8/27/2017 1:09 AM <u>PDT</u></div>
<svg style="left:494.00px;top:346.50px;" width="95" height="7" viewBox="0 0 95 7"><g fill="#007960">
<path d="M2.3 3.5 L6 0.3 V6.7Z M5.8 3.5 L9.5 0.3 V6.7Z"/><path d="M16 3.5 L19 0.3 V6.7Z"/>
<path d="M52.3 0.3 L55.3 3.5 L52.3 6.7Z"/><path d="M62 0.3 L65.5 3.5 L62 6.7Z M65.5 0.3 L69 3.5 L65.5 6.7Z"/>
<path d="M75 0.3 L78.3 3.5 L75 6.7Z"/><rect x="78.3" y="0.3" width="1.3" height="6.4"/>
<path d="M89.3 2.5 L91.3 0.7 L91.6 3.2Z"/></g>
<path d="M90.8 1.8 A2.3 2.3 0 1 0 91.3 4.5" stroke="#007960" stroke-width="1" fill="none"/></svg>
<div class="t" style="left:520.00px;top:347.91px;font-size:5.3px;color:#007960;-webkit-text-stroke:0.15px #007960;transform:scaleX(0.9485);transform-origin:0 0;">6.8 days</div>
<div class="t" style="left:828.00px;top:348.28px;font-size:5.1px;color:#007960;-webkit-text-stroke:0.12px #007960;transform:scaleX(0.9551);transform-origin:0 0;">9/2/2017 8:27 PM <u>PDT</u></div>
<div style="position:absolute;left:223.30px;top:355.60px;width:656.70px;height:30.20px;background:#f6f6f6"></div>
<div style="position:absolute;left:235.00px;top:359.90px;width:631.50px;height:6.60px;background:#fff;border:0.9px solid #c9c9c9;border-radius:3px"></div>
<div style="position:absolute;left:268.50px;top:361.00px;width:2.50px;height:4.40px;background:#eeaab0"></div>
<div style="position:absolute;left:278.20px;top:361.00px;width:5.00px;height:4.40px;background:repeating-linear-gradient(90deg,#f0bcc0 0,#f0bcc0 0.8px,#f6d6d8 0.8px,#f6d6d8 1.7px)"></div>
<div style="position:absolute;left:300.00px;top:361.00px;width:0.90px;height:4.40px;background:#e4868d"></div>
<div style="position:absolute;left:349.50px;top:361.00px;width:1.20px;height:4.40px;background:#e4868d"></div>
<div style="position:absolute;left:359.50px;top:361.00px;width:1.00px;height:4.40px;background:#eeaab0"></div>
<div style="position:absolute;left:373.00px;top:361.00px;width:0.90px;height:4.40px;background:#eeaab0"></div>
<div style="position:absolute;left:388.50px;top:361.00px;width:5.50px;height:4.40px;background:repeating-linear-gradient(90deg,#f0bcc0 0,#f0bcc0 0.8px,#f6d6d8 0.8px,#f6d6d8 1.7px)"></div>
<div style="position:absolute;left:413.50px;top:361.00px;width:10.50px;height:4.40px;background:repeating-linear-gradient(90deg,#f0bcc0 0,#f0bcc0 0.8px,#f6d6d8 0.8px,#f6d6d8 1.7px)"></div>
<div style="position:absolute;left:450.60px;top:361.00px;width:3.40px;height:4.40px;background:#eeaab0"></div>
<div style="position:absolute;left:456.00px;top:361.00px;width:2.00px;height:4.40px;background:#e4868d"></div>
<div style="position:absolute;left:458.00px;top:361.00px;width:0.80px;height:4.40px;background:#eeaab0"></div>
<div style="position:absolute;left:463.70px;top:361.00px;width:7.80px;height:4.40px;background:repeating-linear-gradient(90deg,#f0bcc0 0,#f0bcc0 0.8px,#f6d6d8 0.8px,#f6d6d8 1.7px)"></div>
<div style="position:absolute;left:474.40px;top:361.00px;width:2.90px;height:4.40px;background:repeating-linear-gradient(90deg,#f0bcc0 0,#f0bcc0 0.8px,#f6d6d8 0.8px,#f6d6d8 1.7px)"></div>
<div style="position:absolute;left:475.30px;top:361.00px;width:0.90px;height:4.40px;background:#e4868d"></div>
<div style="position:absolute;left:477.30px;top:361.00px;width:8.70px;height:4.40px;background:repeating-linear-gradient(90deg,#f0bcc0 0,#f0bcc0 0.8px,#f6d6d8 0.8px,#f6d6d8 1.7px)"></div>
<div style="position:absolute;left:488.00px;top:361.00px;width:2.80px;height:4.40px;background:repeating-linear-gradient(90deg,#f0bcc0 0,#f0bcc0 0.8px,#f6d6d8 0.8px,#f6d6d8 1.7px)"></div>
<div style="position:absolute;left:505.30px;top:361.00px;width:0.90px;height:4.40px;background:#e4868d"></div>
<div style="position:absolute;left:537.00px;top:361.00px;width:6.00px;height:4.40px;background:repeating-linear-gradient(90deg,#f0bcc0 0,#f0bcc0 0.8px,#f6d6d8 0.8px,#f6d6d8 1.7px)"></div>
<div style="position:absolute;left:537.30px;top:361.00px;width:1.20px;height:4.40px;background:#e4868d"></div>
<div style="position:absolute;left:548.00px;top:361.00px;width:0.80px;height:4.40px;background:#eeaab0"></div>
<div style="position:absolute;left:557.00px;top:361.00px;width:0.80px;height:4.40px;background:#eeaab0"></div>
<div style="position:absolute;left:567.30px;top:361.00px;width:17.40px;height:4.40px;background:repeating-linear-gradient(90deg,#f0bcc0 0,#f0bcc0 0.8px,#f6d6d8 0.8px,#f6d6d8 1.7px)"></div>
<div style="position:absolute;left:610.80px;top:361.00px;width:1.30px;height:4.40px;background:#e4868d"></div>
<div style="position:absolute;left:618.90px;top:361.00px;width:0.70px;height:4.40px;background:#eeaab0"></div>
<div style="position:absolute;left:622.20px;top:361.00px;width:1.90px;height:4.40px;background:repeating-linear-gradient(90deg,#f0bcc0 0,#f0bcc0 0.8px,#f6d6d8 0.8px,#f6d6d8 1.7px)"></div>
<div style="position:absolute;left:652.70px;top:361.00px;width:1.50px;height:4.40px;background:#e4868d"></div>
<div style="position:absolute;left:664.20px;top:361.00px;width:0.90px;height:4.40px;background:#eeaab0"></div>
<div style="position:absolute;left:672.50px;top:361.00px;width:0.70px;height:4.40px;background:#eeaab0"></div>
<div style="position:absolute;left:694.60px;top:361.00px;width:0.90px;height:4.40px;background:#eeaab0"></div>
<div style="position:absolute;left:725.30px;top:361.00px;width:0.70px;height:4.40px;background:#eeaab0"></div>
<div style="position:absolute;left:755.50px;top:361.00px;width:2.70px;height:4.40px;background:repeating-linear-gradient(90deg,#f0bcc0 0,#f0bcc0 0.8px,#f6d6d8 0.8px,#f6d6d8 1.7px)"></div>
<div style="position:absolute;left:766.40px;top:361.00px;width:1.20px;height:4.40px;background:#e4868d"></div>
<div style="position:absolute;left:778.50px;top:361.00px;width:0.70px;height:4.40px;background:#eeaab0"></div>
<div style="position:absolute;left:785.50px;top:361.00px;width:5.80px;height:4.40px;background:repeating-linear-gradient(90deg,#f0bcc0 0,#f0bcc0 0.8px,#f6d6d8 0.8px,#f6d6d8 1.7px)"></div>
<div style="position:absolute;left:816.40px;top:361.00px;width:1.60px;height:4.40px;background:#e4868d"></div>
<div style="position:absolute;left:818.00px;top:361.00px;width:2.00px;height:4.40px;background:repeating-linear-gradient(90deg,#f0bcc0 0,#f0bcc0 0.8px,#f6d6d8 0.8px,#f6d6d8 1.7px)"></div>
<div style="position:absolute;left:821.80px;top:361.00px;width:5.50px;height:4.40px;background:repeating-linear-gradient(90deg,#f0bcc0 0,#f0bcc0 0.8px,#f6d6d8 0.8px,#f6d6d8 1.7px)"></div>
<div style="position:absolute;left:850.00px;top:361.00px;width:0.80px;height:4.40px;background:#eeaab0"></div>
<div style="position:absolute;left:758.30px;top:358.50px;width:74.00px;height:8.90px;border:1.4px solid #2d8a6e"></div>
<div style="position:absolute;left:757.40px;top:358.00px;width:2.00px;height:9.90px;background:#2d8a6e;border-radius:1px"></div>
<div style="position:absolute;left:830.90px;top:358.00px;width:2.00px;height:9.90px;background:#2d8a6e;border-radius:1px"></div>
<div style="position:absolute;left:869.60px;top:359.00px;width:9.00px;height:8.40px;background:#007960;border-radius:1px"></div>
<svg style="left:870.60px;top:360.00px;" width="7" height="7" viewBox="0 0 7 7"><path d="M1 0.8 H3 V3 M4 0.8 H6 V3 M1 6.2 H3 V4 M4 6.2 H6 V4" stroke="#fff" stroke-width="0.8" fill="none"/></svg>
<div class="t" style="left:245.25px;top:368.91px;font-size:4.6px;color:#777;transform:scaleX(0.9775);transform-origin:0 0;">Jul 9</div>
<div class="t" style="left:316.00px;top:368.91px;font-size:4.6px;color:#777;transform:scaleX(0.9783);transform-origin:0 0;">Jul 16</div>
<div class="t" style="left:387.50px;top:368.91px;font-size:4.6px;color:#777;transform:scaleX(0.9783);transform-origin:0 0;">Jul 23</div>
<div class="t" style="left:461.00px;top:368.91px;font-size:4.6px;color:#777;transform:scaleX(0.9783);transform-origin:0 0;">Jul 30</div>
<div class="t" style="left:534.80px;top:368.91px;font-size:4.6px;color:#777;transform:scaleX(0.9321);transform-origin:0 0;">Aug 6</div>
<div class="t" style="left:605.00px;top:368.91px;font-size:4.6px;color:#777;transform:scaleX(0.9614);transform-origin:0 0;">Aug 13</div>
<div class="t" style="left:678.00px;top:368.91px;font-size:4.6px;color:#777;transform:scaleX(0.9614);transform-origin:0 0;">Aug 20</div>
<div class="t" style="left:751.40px;top:368.91px;font-size:4.6px;color:#777;transform:scaleX(0.9614);transform-origin:0 0;">Aug 27</div>
<div class="t" style="left:825.00px;top:368.91px;font-size:4.6px;color:#777;transform:scaleX(0.9321);transform-origin:0 0;">Sep 3</div>
<svg style="left:227.00px;top:376.00px;" width="6" height="8" viewBox="0 0 6 8"><path d="M3 8 V2.5 M0.6 4.7 L3 1.2 L5.4 4.7" stroke="#007960" stroke-width="1.5" fill="none"/></svg>
<div class="t" style="left:235.60px;top:380.01px;font-size:5.3px;color:#007960;-webkit-text-stroke:0.12px #007960;transform:scaleX(0.9842);transform-origin:0 0;">7/7/2017</div>
<div class="t" style="left:545.25px;top:379.41px;font-size:5.3px;color:#007960;-webkit-text-stroke:0.12px #007960;">2 months</div>
<div class="t" style="left:856.00px;top:379.41px;font-size:5.3px;color:#007960;-webkit-text-stroke:0.12px #007960;">9/6/2017</div>
<div style="position:absolute;left:223.30px;top:385.80px;width:369.50px;height:101.50px;background:#fff"></div>
<div style="position:absolute;left:223.30px;top:385.80px;width:368.50px;height:12.00px;background:#007960"></div>
<svg style="left:227.60px;top:389.80px;" width="7" height="5" viewBox="0 0 7 5"><path d="M0.2 4.8 V1.2 L1.3 0.3 L2 2 L3.2 0.8 L4.3 2.3 L5.2 1.5 L6.6 3.5 V4.8Z" fill="#fff"/></svg>
<div class="t" style="left:236.20px;top:389.48px;font-size:6.4px;color:#fff;-webkit-text-stroke:0.2px #fff;transform:scaleX(0.8544);transform-origin:0 0;">Details</div>
<div style="position:absolute;left:555.00px;top:387.30px;width:34.80px;height:9.40px;border:0.8px solid #8cc4b2;border-radius:1.2px"></div>
<svg style="left:557.50px;top:389.30px;" width="6" height="6" viewBox="0 0 6 6"><circle cx="1.7" cy="2.8" r="1.3" fill="none" stroke="#fff" stroke-width="0.9"/><circle cx="4.8" cy="1" r="0.9" fill="#fff"/><circle cx="4.8" cy="4.7" r="0.9" fill="#fff"/><path d="M2.8 2.2 L4.2 1.3 M2.8 3.4 L4.2 4.3" stroke="#fff" stroke-width="0.6"/></svg>
<div class="t" style="left:564.70px;top:390.40px;font-size:5.2px;color:#fff;-webkit-text-stroke:0.1px #fff;transform:scaleX(0.9096);transform-origin:0 0;">Customize</div>
<div style="position:absolute;left:223.30px;top:410.10px;width:369.50px;height:0.70px;background:#e2e2e2"></div>
<div style="position:absolute;left:223.30px;top:423.50px;width:369.50px;height:0.70px;background:#e8e8e8"></div>
<div style="position:absolute;left:223.30px;top:434.30px;width:369.50px;height:0.70px;background:#e8e8e8"></div>
<div style="position:absolute;left:223.30px;top:410.80px;width:369.50px;height:12.70px;background:#f8f8f8"></div>
<div style="position:absolute;left:223.30px;top:435.00px;width:369.50px;height:10.00px;background:#f8f8f8"></div>
<div style="position:absolute;left:223.30px;top:445.00px;width:369.50px;height:0.60px;background:#eeeeee"></div>
<div class="t" style="left:293.00px;top:402.86px;font-size:5.6px;color:#222;font-weight:bold;">Name</div>
<div class="t" style="left:390.50px;top:402.86px;font-size:5.6px;color:#222;font-weight:bold;transform:scaleX(0.9446);transform-origin:0 0;">Color</div>
<div class="t" style="left:415.00px;top:402.86px;font-size:5.6px;color:#222;font-weight:bold;transform:scaleX(0.9372);transform-origin:0 0;">Stack</div>
<div class="t" style="left:432.70px;top:402.86px;font-size:5.6px;color:#222;font-weight:bold;transform:scaleX(0.9341);transform-origin:0 0;">Samples</div>
<div class="t" style="left:464.90px;top:402.86px;font-size:5.6px;color:#222;font-weight:bold;transform:scaleX(0.9652);transform-origin:0 0;">Line</div>
<div class="t" style="left:498.10px;top:402.86px;font-size:5.6px;color:#222;font-weight:bold;">Width</div>
<div class="t" style="left:523.60px;top:402.86px;font-size:5.6px;color:#007960;font-weight:bold;transform:scaleX(0.9876);transform-origin:0 0;">Lane</div>
<div class="t" style="left:548.00px;top:402.86px;font-size:5.6px;color:#222;font-weight:bold;transform:scaleX(0.8793);transform-origin:0 0;">Axis</div>
<div class="t" style="left:572.40px;top:402.86px;font-size:5.6px;color:#222;font-weight:bold;transform:scaleX(0.9511);transform-origin:0 0;">Align</div>
<svg style="left:254.50px;top:402.50px;" width="5" height="5" viewBox="0 0 5 5"><path d="M0.6 0.6 L4.2 4.2 M4.2 0.6 L0.6 4.2" stroke="#333" stroke-width="1.2"/></svg>
<svg style="left:287.00px;top:402.30px;" width="3" height="5.5" viewBox="0 0 3 5.5"><path d="M0.2 2.2 L1.3 0.4 L2.4 2.2Z M0.2 3.2 L1.3 5 L2.4 3.2Z" fill="#555"/></svg>
<svg style="left:311.80px;top:402.30px;" width="3" height="5.5" viewBox="0 0 3 5.5"><path d="M0.2 2.2 L1.3 0.4 L2.4 2.2Z M0.2 3.2 L1.3 5 L2.4 3.2Z" fill="#555"/></svg>
<svg style="left:407.80px;top:402.30px;" width="3" height="5.5" viewBox="0 0 3 5.5"><path d="M0.2 2.2 L1.3 0.4 L2.4 2.2Z M0.2 3.2 L1.3 5 L2.4 3.2Z" fill="#555"/></svg>
<svg style="left:458.10px;top:402.30px;" width="3" height="5.5" viewBox="0 0 3 5.5"><path d="M0.2 2.2 L1.3 0.4 L2.4 2.2Z M0.2 3.2 L1.3 5 L2.4 3.2Z" fill="#555"/></svg>
<svg style="left:480.30px;top:402.30px;" width="3" height="5.5" viewBox="0 0 3 5.5"><path d="M0.2 2.2 L1.3 0.4 L2.4 2.2Z M0.2 3.2 L1.3 5 L2.4 3.2Z" fill="#555"/></svg>
<svg style="left:517.30px;top:402.30px;" width="3" height="5.5" viewBox="0 0 3 5.5"><path d="M0.2 2.2 L1.3 0.4 L2.4 2.2Z M0.2 3.2 L1.3 5 L2.4 3.2Z" fill="#555"/></svg>
<svg style="left:562.30px;top:402.30px;" width="3" height="5.5" viewBox="0 0 3 5.5"><path d="M0.2 2.2 L1.3 0.4 L2.4 2.2Z M0.2 3.2 L1.3 5 L2.4 3.2Z" fill="#555"/></svg>
<svg style="left:588.90px;top:402.30px;" width="3" height="5.5" viewBox="0 0 3 5.5"><path d="M0.2 2.2 L1.3 0.4 L2.4 2.2Z M0.2 3.2 L1.3 5 L2.4 3.2Z" fill="#555"/></svg>
<svg style="left:540.00px;top:402.80px;" width="3" height="3" viewBox="0 0 3 3"><path d="M0.2 2.4 L1.4 0.4 L2.6 2.4Z" fill="#007960"/></svg>
<svg style="left:263.50px;top:402.30px;" width="5.8" height="5.8" viewBox="0 0 5.8 5.8"><rect x="0.45" y="0.45" width="3.90" height="3.90" rx="0.8" fill="#fff" stroke="#6a6a6a" stroke-width="0.9"/></svg>
<svg style="left:235.30px;top:412.80px;" width="6.5" height="6.5" viewBox="0 0 6.5 6.5"><path d="M6.2 0.3 L2.3 2.2 L0.6 2.4 L1.6 3.3 L1.2 3.9 L2.6 5.3 L3.2 4.9 L4.1 5.9 L4.3 4.2Z" fill="#007960"/><path d="M0.4 6.1 L1.8 4.7" stroke="#007960" stroke-width="0.7"/></svg>
<svg style="left:244.20px;top:413.00px;" width="6" height="6" viewBox="0 0 6 6"><circle cx="3" cy="3" r="2.7" fill="#007960"/><rect x="2.5" y="2.5" width="1" height="2.4" fill="#fff"/><rect x="2.5" y="1.1" width="1" height="0.9" fill="#fff"/></svg>
<svg style="left:254.30px;top:413.60px;" width="5" height="5" viewBox="0 0 5 5"><path d="M0.6 0.6 L4.2 4.2 M4.2 0.6 L0.6 4.2" stroke="#007960" stroke-width="1.2"/></svg>
<svg style="left:263.50px;top:413.50px;" width="5.8" height="5.8" viewBox="0 0 5.8 5.8"><rect x="0.45" y="0.45" width="3.90" height="3.90" rx="0.8" fill="#fff" stroke="#6a6a6a" stroke-width="0.9"/></svg>
<div style="position:absolute;left:398.00px;top:413.70px;width:6.80px;height:6.80px;background:#3d55ad;border:0.5px solid #666"></div>
<div class="t" style="left:293.00px;top:413.68px;font-size:6.4px;color:#222;-webkit-text-stroke:0.12px #222;transform:scaleX(0.9226);transform-origin:0 0;">Temperature</div>
<svg style="left:225.30px;top:425.70px;" width="6" height="6" viewBox="0 0 6 6"><path d="M4 0.8 H0.5 V5.5 H5.2 V2" fill="none" stroke="#007960" stroke-width="0.6"/><path d="M2.2 3.8 L5.6 0.4" stroke="#007960" stroke-width="0.9"/></svg>
<svg style="left:235.30px;top:425.50px;" width="6.5" height="6.5" viewBox="0 0 6.5 6.5"><path d="M6.2 0.3 L2.3 2.2 L0.6 2.4 L1.6 3.3 L1.2 3.9 L2.6 5.3 L3.2 4.9 L4.1 5.9 L4.3 4.2Z" fill="#007960"/><path d="M0.4 6.1 L1.8 4.7" stroke="#007960" stroke-width="0.7"/></svg>
<svg style="left:244.20px;top:425.70px;" width="6" height="6" viewBox="0 0 6 6"><circle cx="3" cy="3" r="2.7" fill="#007960"/><rect x="2.5" y="2.5" width="1" height="2.4" fill="#fff"/><rect x="2.5" y="1.1" width="1" height="0.9" fill="#fff"/></svg>
<svg style="left:254.30px;top:426.30px;" width="5" height="5" viewBox="0 0 5 5"><path d="M0.6 0.6 L4.2 4.2 M4.2 0.6 L0.6 4.2" stroke="#007960" stroke-width="1.2"/></svg>
<svg style="left:263.50px;top:426.20px;" width="5.8" height="5.8" viewBox="0 0 5.8 5.8"><rect x="0.45" y="0.45" width="3.90" height="3.90" rx="0.8" fill="#fff" stroke="#6a6a6a" stroke-width="0.9"/></svg>
<div style="position:absolute;left:398.00px;top:426.40px;width:6.80px;height:6.80px;background:#c40000;border:0.5px solid #666"></div>
<div class="t" style="left:293.00px;top:426.38px;font-size:6.4px;color:#222;-webkit-text-stroke:0.12px #222;transform:scaleX(0.9109);transform-origin:0 0;">Temperature Alert Deviation Search</div>
<svg style="left:225.30px;top:436.00px;" width="6" height="6" viewBox="0 0 6 6"><path d="M4 0.8 H0.5 V5.5 H5.2 V2" fill="none" stroke="#007960" stroke-width="0.6"/><path d="M2.2 3.8 L5.6 0.4" stroke="#007960" stroke-width="0.9"/></svg>
<svg style="left:235.30px;top:435.80px;" width="6.5" height="6.5" viewBox="0 0 6.5 6.5"><path d="M6.2 0.3 L2.3 2.2 L0.6 2.4 L1.6 3.3 L1.2 3.9 L2.6 5.3 L3.2 4.9 L4.1 5.9 L4.3 4.2Z" fill="#007960"/><path d="M0.4 6.1 L1.8 4.7" stroke="#007960" stroke-width="0.7"/></svg>
<svg style="left:244.20px;top:436.00px;" width="6" height="6" viewBox="0 0 6 6"><circle cx="3" cy="3" r="2.7" fill="#007960"/><rect x="2.5" y="2.5" width="1" height="2.4" fill="#fff"/><rect x="2.5" y="1.1" width="1" height="0.9" fill="#fff"/></svg>
<svg style="left:254.30px;top:436.60px;" width="5" height="5" viewBox="0 0 5 5"><path d="M0.6 0.6 L4.2 4.2 M4.2 0.6 L0.6 4.2" stroke="#007960" stroke-width="1.2"/></svg>
<svg style="left:263.50px;top:436.50px;" width="5.8" height="5.8" viewBox="0 0 5.8 5.8"><rect x="0.45" y="0.45" width="3.90" height="3.90" rx="0.8" fill="#fff" stroke="#6a6a6a" stroke-width="0.9"/></svg>
<div style="position:absolute;left:398.00px;top:437.00px;width:6.80px;height:6.80px;background:#0a2a52;border:0.5px solid #666"></div>
<div class="t" style="left:293.00px;top:436.68px;font-size:6.4px;color:#222;-webkit-text-stroke:0.12px #222;transform:scaleX(0.8899);transform-origin:0 0;">Opt vs. Temp</div>
<svg style="left:273.50px;top:414.00px;" width="8" height="6" viewBox="0 0 8 6"><path d="M0.4 3 L2 0.8 L3 3.5 L4.6 1.3 L5.7 4.5 L7.3 2.5" stroke="#2b3f9f" stroke-width="0.9" fill="none"/><path d="M6 5.5 L7.3 3.3" stroke="#2b3f9f" stroke-width="0.7"/></svg>
<div class="t" style="left:284.00px;top:414.44px;font-size:5.5px;color:#666;transform:scaleX(0.8449);transform-origin:0 0;">°F</div>
<svg style="left:329.30px;top:413.30px;" width="18" height="7" viewBox="0 0 18 7"><path d="M3.5 0.5 C5.5 0.5 6.8 1.3 6.8 2.6 C6.8 3.9 5.5 4.7 3.5 4.7 L1.3 5.9 L1.8 4.3 C0.8 3.9 0.3 3.3 0.3 2.6 C0.3 1.3 1.5 0.5 3.5 0.5Z" fill="none" stroke="#3a8ab0" stroke-width="0.7"/><path d="M11 6.5 L13.5 4 M12 1.5 L16.5 5.5 M14.5 0.5 L17 3 M13 2.5 L15.8 0.8" stroke="#2a6aa8" stroke-width="0.9"/></svg>
<svg style="left:274.50px;top:425.80px;" width="6" height="7" viewBox="0 0 6 7"><path d="M0.5 1.7 C0.5 0.3 2.5 0.3 2.5 1.7 C2.5 3 0.5 4.2 0.5 6.2 H2.7 M3.4 1.7 C3.4 0.3 5.4 0.3 5.4 1.7 C5.4 3 3.4 4.2 3.4 6.2 H5.6" stroke="#c40000" stroke-width="1.05" fill="none"/></svg>
<svg style="left:274.50px;top:436.00px;" width="7" height="6.5" viewBox="0 0 7 6.5"><path d="M0.4 0 V6 H6.5" stroke="#2b3f8f" stroke-width="0.7" fill="none"/><rect x="1.4" y="0.8" width="1.1" height="4.8" fill="#2b3f8f"/><rect x="3.2" y="2.8" width="1.1" height="2.8" fill="#2b3f8f"/><rect x="4.9" y="3.5" width="1.1" height="2.1" fill="#2b3f8f"/></svg>
<div style="position:absolute;left:419.80px;top:437.50px;width:5.00px;height:5.00px;border:0.7px solid #777;border-radius:2px;background:#fff"></div>
<div style="position:absolute;left:432.70px;top:411.40px;width:29.50px;height:10.40px;border:0.7px solid #dadada;border-radius:2.5px;background:#fff"></div>
<div style="position:absolute;left:465.30px;top:411.40px;width:29.50px;height:10.40px;border:0.7px solid #dadada;border-radius:2.5px;background:#fff"></div>
<div style="position:absolute;left:497.70px;top:411.40px;width:22.60px;height:10.40px;border:0.7px solid #dadada;border-radius:2.5px;background:#fff"></div>
<div style="position:absolute;left:523.00px;top:411.40px;width:22.10px;height:10.40px;border:0.7px solid #dadada;border-radius:2.5px;background:#fff"></div>
<div style="position:absolute;left:548.00px;top:411.40px;width:22.20px;height:10.40px;border:0.7px solid #dadada;border-radius:2.5px;background:#fff"></div>
<div style="position:absolute;left:572.40px;top:411.40px;width:21.10px;height:10.40px;border:0.7px solid #dadada;border-radius:2.5px;background:#fff"></div>
<div style="position:absolute;left:446.00px;top:416.30px;width:6.50px;height:0.80px;background:#555"></div>
<div style="position:absolute;left:479.00px;top:416.30px;width:6.50px;height:0.80px;background:#555"></div>
<svg style="left:457.20px;top:415.50px;" width="3" height="3" viewBox="0 0 3 3"><path d="M0 2.4 L1.3 0.4 L2.6 2.4Z" fill="#222"/></svg>
<svg style="left:489.80px;top:415.50px;" width="3" height="3" viewBox="0 0 3 3"><path d="M0 2.4 L1.3 0.4 L2.6 2.4Z" fill="#222"/></svg>
<div class="t" style="left:502.00px;top:415.39px;font-size:4.5px;color:#777;">1</div>
<div class="t" style="left:527.30px;top:415.39px;font-size:4.5px;color:#777;">1</div>
<div class="t" style="left:552.70px;top:415.39px;font-size:4.5px;color:#777;">A</div>
<div class="t" style="left:576.50px;top:415.39px;font-size:4.5px;color:#777;">L</div>
<svg style="left:515.70px;top:413.60px;" width="3" height="5.5" viewBox="0 0 3 5.5"><path d="M0.2 2.1 L1.3 0.4 L2.4 2.1Z M0.2 3.2 L1.3 4.9 L2.4 3.2Z" fill="#666"/></svg>
<svg style="left:540.60px;top:413.60px;" width="3" height="5.5" viewBox="0 0 3 5.5"><path d="M0.2 2.1 L1.3 0.4 L2.4 2.1Z M0.2 3.2 L1.3 4.9 L2.4 3.2Z" fill="#666"/></svg>
<svg style="left:565.60px;top:413.60px;" width="3" height="5.5" viewBox="0 0 3 5.5"><path d="M0.2 2.1 L1.3 0.4 L2.4 2.1Z M0.2 3.2 L1.3 4.9 L2.4 3.2Z" fill="#666"/></svg>
<svg style="left:589.00px;top:413.60px;" width="3" height="5.5" viewBox="0 0 3 5.5"><path d="M0.2 2.1 L1.3 0.4 L2.4 2.1Z M0.2 3.2 L1.3 4.9 L2.4 3.2Z" fill="#666"/></svg>
<div style="position:absolute;left:223.30px;top:484.00px;width:369.50px;height:3.00px;background:#f2f2f2"></div>
<div style="position:absolute;left:223.50px;top:484.00px;width:267.50px;height:3.00px;background:#d2d2d2"></div>
<div style="position:absolute;left:592.80px;top:385.80px;width:3.00px;height:101.50px;background:#f2f2f2"></div>
<div style="position:absolute;left:592.60px;top:397.80px;width:0.60px;height:89.50px;background:#d8d8d8"></div>
<div style="position:absolute;left:595.60px;top:385.80px;width:0.60px;height:101.50px;background:#dcdcdc"></div>
<div style="position:absolute;left:593.60px;top:437.50px;width:1.20px;height:6.50px;background:#555"></div>
<div style="position:absolute;left:596.20px;top:385.80px;width:283.80px;height:101.50px;background:#fff"></div>
<div style="position:absolute;left:595.80px;top:385.80px;width:284.20px;height:11.90px;background:#007960"></div>
<svg style="left:600.80px;top:388.30px;" width="6" height="8" viewBox="0 0 6 8"><path d="M1.8 0.5 H0.6 V7.2 H1.8 M4.2 0.5 H5.4 V7.2 H4.2" stroke="#fff" stroke-width="0.8" fill="none"/><path d="M2 1.8 V6 M4 1.8 V6 M2 2 L4 5.8" stroke="#fff" stroke-width="0.7"/></svg>
<div class="t" style="left:608.10px;top:389.48px;font-size:6.4px;color:#fff;-webkit-text-stroke:0.2px #fff;transform:scaleX(0.8591);transform-origin:0 0;">Capsules</div>
<div style="position:absolute;left:862.50px;top:387.60px;width:17.50px;height:9.40px;background:#fff;border-radius:1.5px 0 0 1.5px"></div>
<svg style="left:865.00px;top:389.60px;" width="6" height="6" viewBox="0 0 6 6"><circle cx="2.5" cy="2.5" r="1.8" fill="none" stroke="#333" stroke-width="0.9"/><path d="M3.8 3.8 L5.5 5.5" stroke="#333" stroke-width="1"/></svg>
<div style="position:absolute;left:873.50px;top:388.80px;width:0.60px;height:7.50px;background:#ddd"></div>
<svg style="left:875.30px;top:389.30px;" width="5" height="6" viewBox="0 0 5 6"><rect x="0.5" y="0.5" width="4" height="5" rx="1" fill="none" stroke="#ccc" stroke-width="0.8"/></svg>
<svg style="left:598.30px;top:403.70px;" width="6.4" height="6.4" viewBox="0 0 6.4 6.4"><rect x="0.45" y="0.45" width="4.50" height="4.50" rx="1.3" fill="#fff" stroke="#6a6a6a" stroke-width="0.9"/></svg>
<div class="t" style="left:619.00px;top:404.42px;font-size:6px;color:#007960;font-weight:bold;transform:scaleX(0.9216);transform-origin:0 0;">Start</div>
<svg style="left:636.00px;top:403.50px;" width="3" height="3" viewBox="0 0 3 3"><path d="M0.2 2.4 L1.4 0.4 L2.6 2.4Z" fill="#007960"/></svg>
<svg style="left:849.00px;top:401.80px;" width="8" height="7" viewBox="0 0 8 7"><rect x="0.5" y="0.8" width="5" height="5" fill="none" stroke="#333" stroke-width="0.8"/><path d="M1.5 2.3 H4.5" stroke="#333" stroke-width="0.6"/><circle cx="5.6" cy="4.7" r="2" fill="#333"/><path d="M5.6 3.7 V5.7 M4.6 4.7 H6.6" stroke="#fff" stroke-width="0.5"/></svg>
<div style="position:absolute;left:861.00px;top:399.50px;width:0.60px;height:12.00px;background:#e2e2e2"></div>
<svg style="left:870.00px;top:401.80px;" width="8" height="7" viewBox="0 0 8 7"><rect x="0.5" y="0.8" width="5" height="5" fill="none" stroke="#3a5ab0" stroke-width="0.8"/><path d="M1.5 2.3 H4.5" stroke="#3a5ab0" stroke-width="0.6"/><circle cx="5.6" cy="4.7" r="2" fill="#3a5ab0"/></svg>
<div style="position:absolute;left:596.20px;top:411.90px;width:283.80px;height:0.70px;background:#e2e2e2"></div>
<div style="position:absolute;left:596.20px;top:412.60px;width:283.80px;height:10.60px;background:#f8f8f8"></div>
<div style="position:absolute;left:596.20px;top:423.00px;width:283.80px;height:0.60px;background:#e6e6e6"></div>
<svg style="left:598.30px;top:415.20px;" width="6.4" height="6.4" viewBox="0 0 6.4 6.4"><rect x="0.45" y="0.45" width="4.50" height="4.50" rx="1.3" fill="#fff" stroke="#6a6a6a" stroke-width="0.9"/></svg>
<svg style="left:609.80px;top:414.20px;" width="6" height="8" viewBox="0 0 6 8"><path d="M0.7 0.4 V7.4 M4.7 0.4 V7.4" stroke="#d41a1a" stroke-width="1.2"/><path d="M1.2 1.6 L4.2 6.2" stroke="#d41a1a" stroke-width="1"/><path d="M1.3 0.4 H2.3 M3.1 7.4 H4.1" stroke="#d41a1a" stroke-width="0.8"/></svg>
<div class="t" style="left:618.70px;top:415.75px;font-size:6.2px;color:#222;-webkit-text-stroke:0.04px #222;transform:scaleX(0.8477);transform-origin:0 0;">Aug 27, 2017 4:46 PM</div>
<div style="position:absolute;left:596.20px;top:433.60px;width:283.80px;height:0.60px;background:#e6e6e6"></div>
<svg style="left:598.30px;top:425.80px;" width="6.4" height="6.4" viewBox="0 0 6.4 6.4"><rect x="0.45" y="0.45" width="4.50" height="4.50" rx="1.3" fill="#fff" stroke="#6a6a6a" stroke-width="0.9"/></svg>
<svg style="left:609.80px;top:424.80px;" width="6" height="8" viewBox="0 0 6 8"><path d="M0.7 0.4 V7.4 M4.7 0.4 V7.4" stroke="#d41a1a" stroke-width="1.2"/><path d="M1.2 1.6 L4.2 6.2" stroke="#d41a1a" stroke-width="1"/><path d="M1.3 0.4 H2.3 M3.1 7.4 H4.1" stroke="#d41a1a" stroke-width="0.8"/></svg>
<div class="t" style="left:618.70px;top:426.35px;font-size:6.2px;color:#222;-webkit-text-stroke:0.04px #222;transform:scaleX(0.8477);transform-origin:0 0;">Aug 27, 2017 5:30 PM</div>
<div style="position:absolute;left:596.20px;top:433.80px;width:283.80px;height:10.60px;background:#f8f8f8"></div>
<div style="position:absolute;left:596.20px;top:444.20px;width:283.80px;height:0.60px;background:#e6e6e6"></div>
<svg style="left:598.30px;top:436.40px;" width="6.4" height="6.4" viewBox="0 0 6.4 6.4"><rect x="0.45" y="0.45" width="4.50" height="4.50" rx="1.3" fill="#fff" stroke="#6a6a6a" stroke-width="0.9"/></svg>
<svg style="left:609.80px;top:435.40px;" width="6" height="8" viewBox="0 0 6 8"><path d="M0.7 0.4 V7.4 M4.7 0.4 V7.4" stroke="#d41a1a" stroke-width="1.2"/><path d="M1.2 1.6 L4.2 6.2" stroke="#d41a1a" stroke-width="1"/><path d="M1.3 0.4 H2.3 M3.1 7.4 H4.1" stroke="#d41a1a" stroke-width="0.8"/></svg>
<div class="t" style="left:618.70px;top:436.95px;font-size:6.2px;color:#222;-webkit-text-stroke:0.04px #222;transform:scaleX(0.8477);transform-origin:0 0;">Aug 27, 2017 5:42 PM</div>
<div style="position:absolute;left:596.20px;top:454.80px;width:283.80px;height:0.60px;background:#e6e6e6"></div>
<svg style="left:598.30px;top:447.00px;" width="6.4" height="6.4" viewBox="0 0 6.4 6.4"><rect x="0.45" y="0.45" width="4.50" height="4.50" rx="1.3" fill="#fff" stroke="#6a6a6a" stroke-width="0.9"/></svg>
<svg style="left:609.80px;top:446.00px;" width="6" height="8" viewBox="0 0 6 8"><path d="M0.7 0.4 V7.4 M4.7 0.4 V7.4" stroke="#d41a1a" stroke-width="1.2"/><path d="M1.2 1.6 L4.2 6.2" stroke="#d41a1a" stroke-width="1"/><path d="M1.3 0.4 H2.3 M3.1 7.4 H4.1" stroke="#d41a1a" stroke-width="0.8"/></svg>
<div class="t" style="left:618.70px;top:447.55px;font-size:6.2px;color:#222;-webkit-text-stroke:0.04px #222;transform:scaleX(0.8477);transform-origin:0 0;">Aug 27, 2017 6:17 PM</div>
<div style="position:absolute;left:596.20px;top:455.10px;width:283.80px;height:10.60px;background:#f8f8f8"></div>
<div style="position:absolute;left:596.20px;top:465.50px;width:283.80px;height:0.60px;background:#e6e6e6"></div>
<svg style="left:598.30px;top:457.70px;" width="6.4" height="6.4" viewBox="0 0 6.4 6.4"><rect x="0.45" y="0.45" width="4.50" height="4.50" rx="1.3" fill="#fff" stroke="#6a6a6a" stroke-width="0.9"/></svg>
<svg style="left:609.80px;top:456.70px;" width="6" height="8" viewBox="0 0 6 8"><path d="M0.7 0.4 V7.4 M4.7 0.4 V7.4" stroke="#d41a1a" stroke-width="1.2"/><path d="M1.2 1.6 L4.2 6.2" stroke="#d41a1a" stroke-width="1"/><path d="M1.3 0.4 H2.3 M3.1 7.4 H4.1" stroke="#d41a1a" stroke-width="0.8"/></svg>
<div class="t" style="left:618.70px;top:458.25px;font-size:6.2px;color:#222;-webkit-text-stroke:0.04px #222;transform:scaleX(0.8477);transform-origin:0 0;">Aug 28, 2017 8:40 PM</div>
<div style="position:absolute;left:596.20px;top:476.00px;width:283.80px;height:0.60px;background:#e6e6e6"></div>
<svg style="left:598.30px;top:468.20px;" width="6.4" height="6.4" viewBox="0 0 6.4 6.4"><rect x="0.45" y="0.45" width="4.50" height="4.50" rx="1.3" fill="#fff" stroke="#6a6a6a" stroke-width="0.9"/></svg>
<svg style="left:609.80px;top:467.20px;" width="6" height="8" viewBox="0 0 6 8"><path d="M0.7 0.4 V7.4 M4.7 0.4 V7.4" stroke="#d41a1a" stroke-width="1.2"/><path d="M1.2 1.6 L4.2 6.2" stroke="#d41a1a" stroke-width="1"/><path d="M1.3 0.4 H2.3 M3.1 7.4 H4.1" stroke="#d41a1a" stroke-width="0.8"/></svg>
<div class="t" style="left:618.70px;top:468.75px;font-size:6.2px;color:#222;-webkit-text-stroke:0.04px #222;transform:scaleX(0.8477);transform-origin:0 0;">Aug 29, 2017 1:08 PM</div>
<div style="position:absolute;left:596.20px;top:476.20px;width:283.80px;height:10.60px;background:#f8f8f8"></div>
<div style="position:absolute;left:596.20px;top:486.60px;width:283.80px;height:0.60px;background:#e6e6e6"></div>
<svg style="left:598.30px;top:478.80px;" width="6.4" height="6.4" viewBox="0 0 6.4 6.4"><rect x="0.45" y="0.45" width="4.50" height="4.50" rx="1.3" fill="#fff" stroke="#6a6a6a" stroke-width="0.9"/></svg>
<svg style="left:609.80px;top:477.80px;" width="6" height="8" viewBox="0 0 6 8"><path d="M0.7 0.4 V7.4 M4.7 0.4 V7.4" stroke="#d41a1a" stroke-width="1.2"/><path d="M1.2 1.6 L4.2 6.2" stroke="#d41a1a" stroke-width="1"/><path d="M1.3 0.4 H2.3 M3.1 7.4 H4.1" stroke="#d41a1a" stroke-width="0.8"/></svg>
<div class="t" style="left:618.70px;top:479.35px;font-size:6.2px;color:#222;-webkit-text-stroke:0.04px #222;transform:scaleX(0.8477);transform-origin:0 0;">Aug 29, 2017 5:35 PM</div>
<div style="position:absolute;left:0.00px;top:487.00px;width:880.00px;height:13.00px;background:#e2e2e2"></div>
<div class="t" style="left:0.70px;top:490.88px;font-size:6.4px;color:#333;-webkit-text-stroke:0.1px #333;transform:scaleX(0.8334);transform-origin:0 0;">R21.0.40.03-v201901101404-BETA</div>
<div class="t" style="left:742.30px;top:491.24px;font-size:6.8px;color:#2f4f47;-webkit-text-stroke:0.12px #2f4f47;transform:scaleX(0.8144);transform-origin:0 0;">Copyright © 2019 Seeq Corporation. All rights reserved.</div></body></html>
